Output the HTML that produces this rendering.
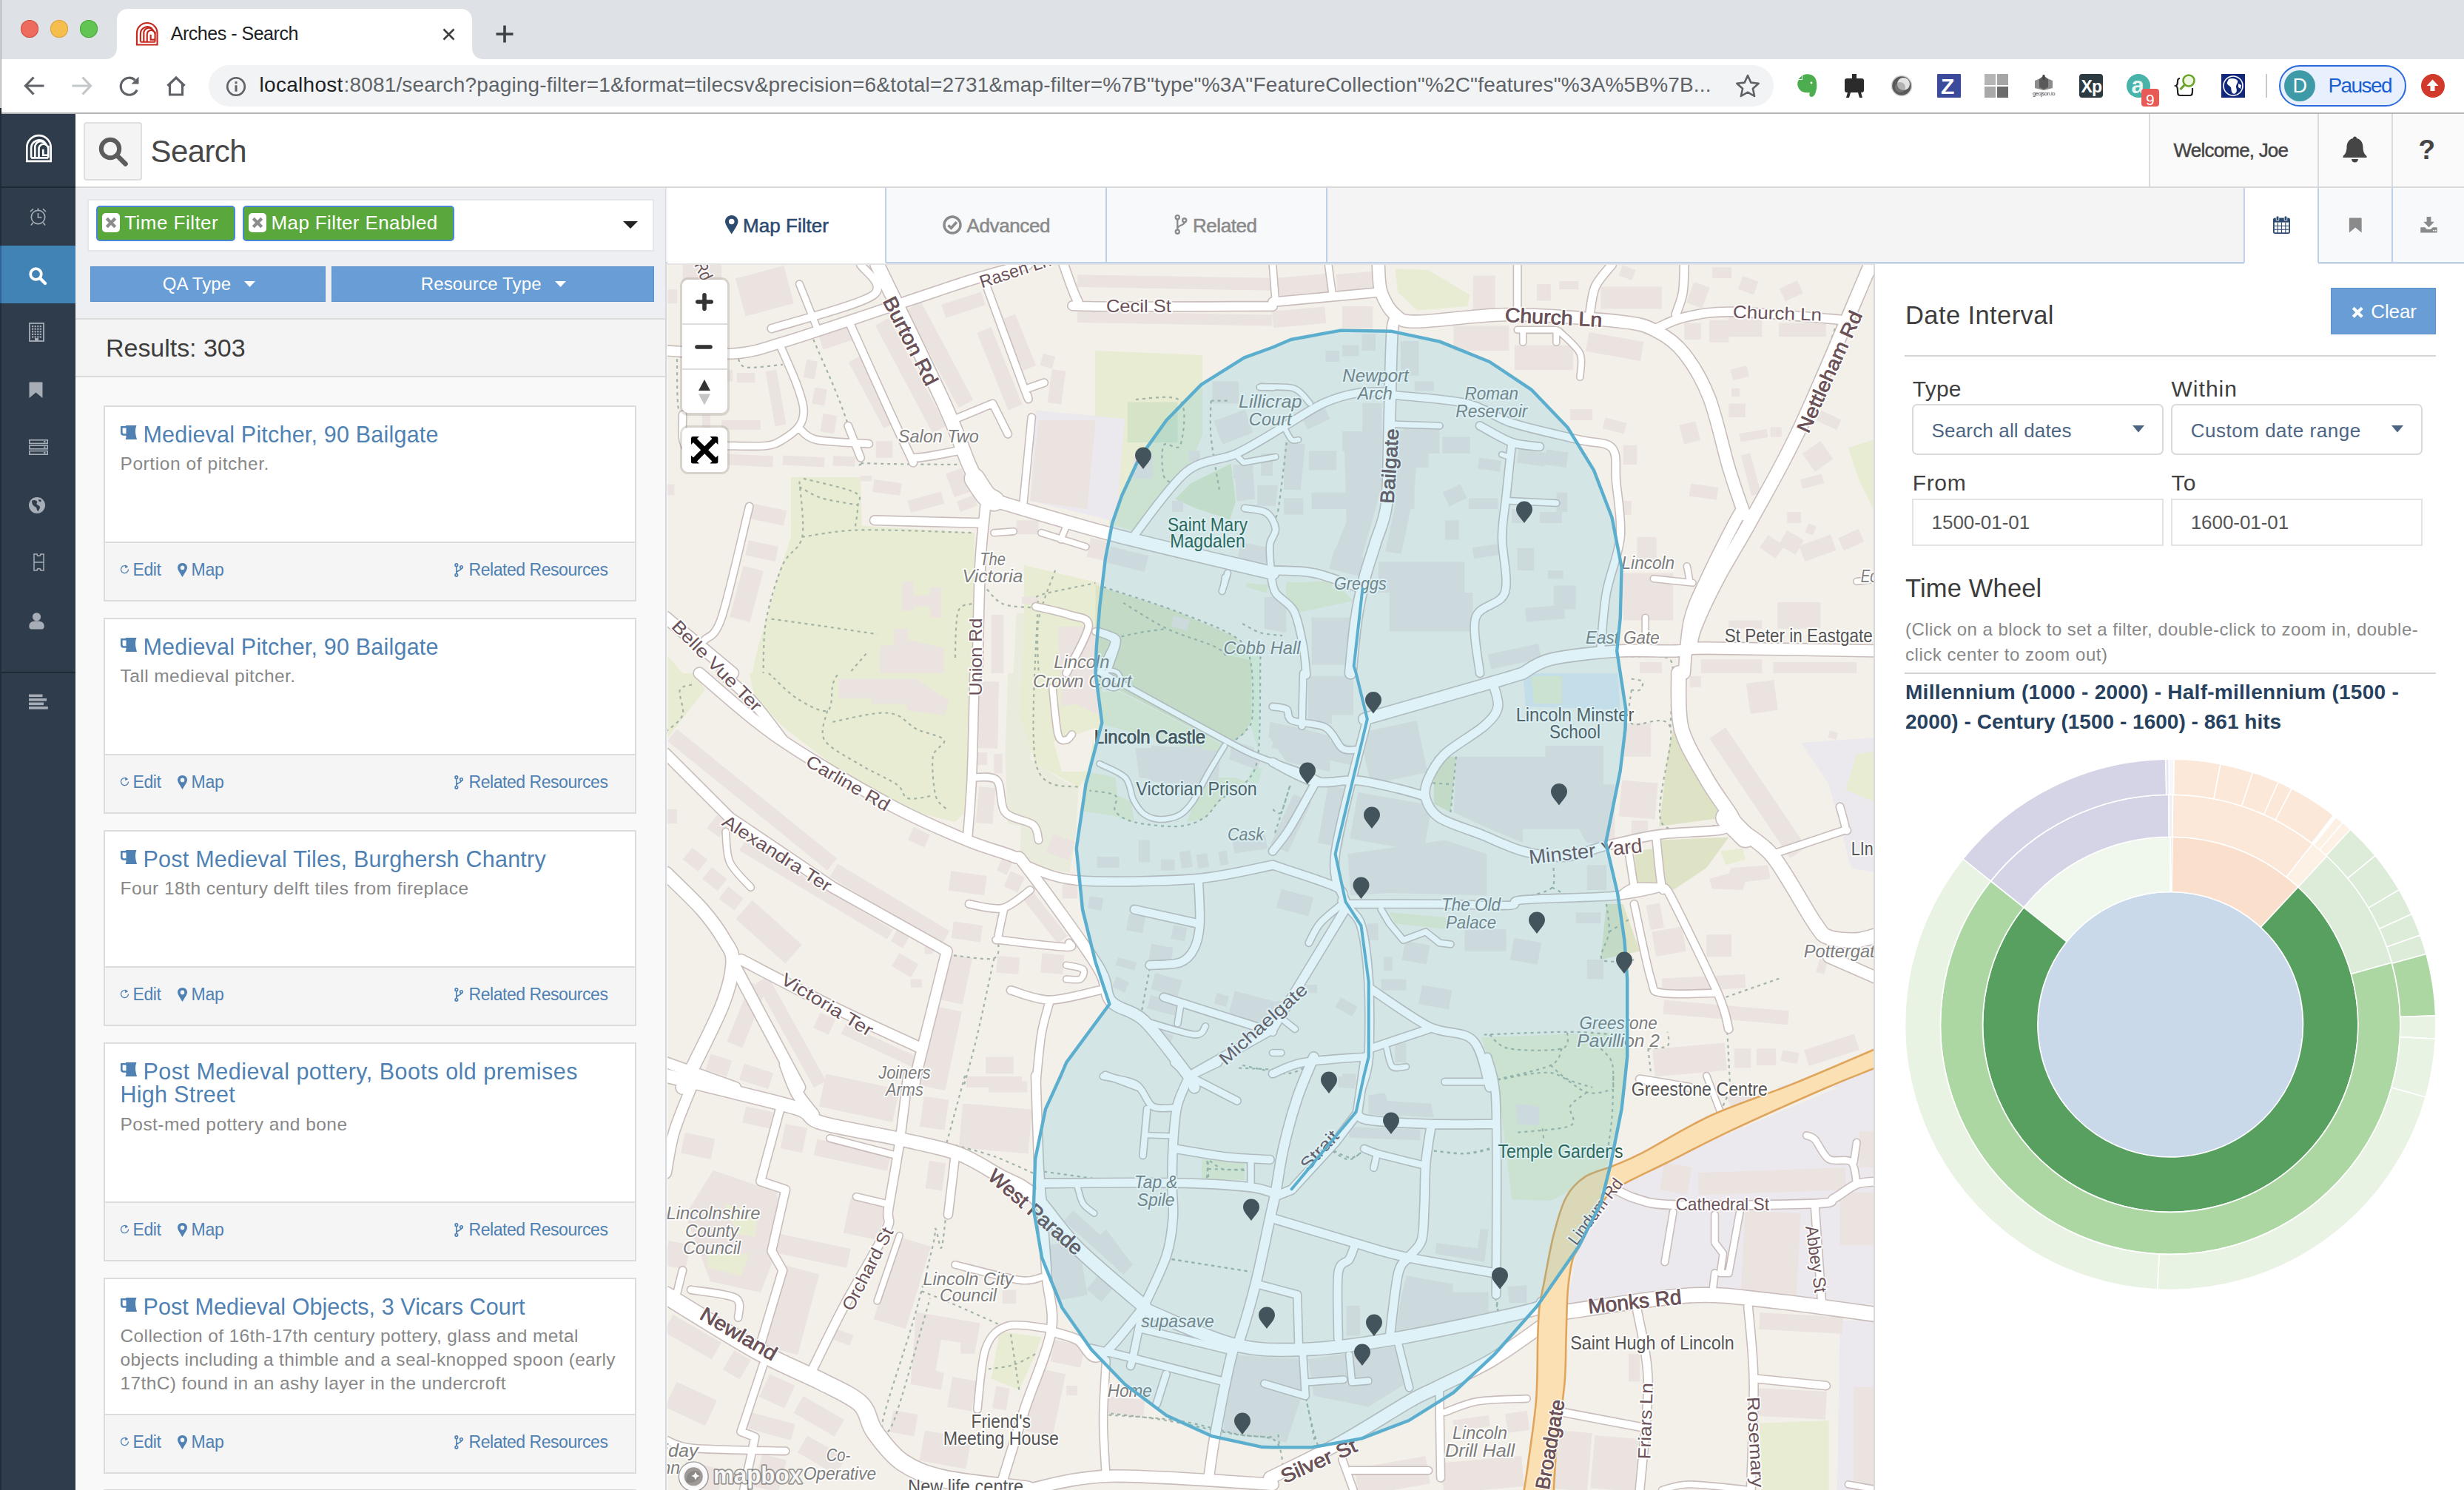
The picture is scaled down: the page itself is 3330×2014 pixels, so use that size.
<!DOCTYPE html>
<html lang="en"><head><meta charset="utf-8"><title>Arches - Search</title>
<style>
html,body{margin:0;padding:0}
html{width:3330px;height:2014px;overflow:hidden}
body{width:3330px;height:2014px;overflow:hidden;position:relative;background:#fff;font-family:"Liberation Sans", sans-serif;color:#333}
.a{position:absolute}
svg{position:absolute;overflow:visible}
#root{position:absolute;left:0;top:0;width:3330px;height:2014px;overflow:hidden;contain:strict}
</style></head><body><div id="root">
<div class="a" style="left:0;top:0;width:3330px;height:80px;background:#dee1e6"></div>
<svg style="left:0;top:0" width="700" height="80" viewBox="0 0 700 80"><path d="M142 80 C152 80 158 74 158 64 L158 28 C158 18 164 12 174 12 L622 12 C632 12 638 18 638 28 L638 64 C638 74 644 80 654 80 Z" fill="#fff"/></svg>
<div class="a" style="left:0;top:80px;width:3330px;height:72px;background:#fff"></div>
<div class="a" style="left:0;top:152px;width:3330px;height:2px;background:#b5b5b5"></div>
<div class="a" style="left:28px;top:27px;width:24px;height:24px;border-radius:50%;background:#ed6a5e;box-shadow:inset 0 0 0 1px #d05347"></div>
<div class="a" style="left:68px;top:27px;width:24px;height:24px;border-radius:50%;background:#f5bf4f;box-shadow:inset 0 0 0 1px #d9a13c"></div>
<div class="a" style="left:108px;top:27px;width:24px;height:24px;border-radius:50%;background:#61c554;box-shadow:inset 0 0 0 1px #4ca73e"></div>
<svg style="left:182.5px;top:30px" width="31.5" height="31.5" viewBox="0 0 32 32" fill="none" stroke="#c5281c" stroke-width="2.2"><path d="M2 31 L2 15 A14 14 0 0 1 30 15 L30 31 Z"/><path d="M7 27 L7 15.5 A9.5 9.5 0 0 1 23 9" /><path d="M11.5 27 L11.5 16 A7 7 0 0 1 25 12.5"/><path d="M16 27 L16 17 A5 5 0 0 1 27 16"/><path d="M21 17 L21 24 L27 24 M27 13 L27 27 M7 27.2 L27 27.2"/></svg>
<span style="position:absolute;white-space:pre;line-height:1;top:32.8px;font-size:25px;color:#202124;left:230.8px;letter-spacing:-0.48px;">Arches - Search</span>
<svg style="left:598px;top:38px" width="17" height="17" viewBox="0 0 17 17"><path d="M1.5 1.5 L15.5 15.5 M15.5 1.5 L1.5 15.5" stroke="#3c4043" stroke-width="2.6" fill="none"/></svg>
<svg style="left:670px;top:34px" width="24" height="24" viewBox="0 0 24 24"><path d="M12 0.5 V23.5 M0.5 12 H23.5" stroke="#3c4043" stroke-width="3.6" fill="none"/></svg>
<svg style="left:32px;top:103px" width="28" height="26" viewBox="0 0 28 26" fill="none" stroke="#5f6368" stroke-width="3.2"><path d="M13.5 1.5 L2.5 13 L13.5 24.5 M2.5 13 H27.5"/></svg>
<svg style="left:97px;top:103px" width="28" height="26" viewBox="0 0 28 26" fill="none" stroke="#c4c7ca" stroke-width="3.2"><path d="M14.5 1.5 L25.5 13 L14.5 24.5 M25.5 13 H0.5"/></svg>
<svg style="left:160px;top:102px" width="30" height="30" viewBox="0 0 30 30"><path d="M25.2 19.5 A11.5 11.5 0 1 1 22.5 6.2" fill="none" stroke="#5f6368" stroke-width="3.2"/><path d="M17.5 11.5 L27.5 11.5 L27.5 1.5 Z" fill="#5f6368"/></svg>
<svg style="left:224px;top:102px" width="28" height="28" viewBox="0 0 28 28" fill="none" stroke="#5f6368" stroke-width="3.2" stroke-linejoin="miter"><path d="M2.5 14 L14 3 L25.5 14 M5.5 12 V26 H22.5 V12"/></svg>
<div class="a" style="left:282px;top:88px;width:2115px;height:56px;border-radius:28px;background:#f1f3f4"></div>
<svg style="left:305px;top:103px" width="28" height="28" viewBox="0 0 28 28"><circle cx="14" cy="14" r="11.8" fill="none" stroke="#5f6368" stroke-width="2.6"/><rect x="12.5" y="12.2" width="3" height="8.5" fill="#5f6368"/><rect x="12.5" y="7.2" width="3" height="3" fill="#5f6368"/></svg>
<span style="position:absolute;white-space:pre;line-height:1;top:101.3px;font-size:28px;color:#202124;left:350.6px;letter-spacing:0.28px;">localhost</span>
<span style="position:absolute;white-space:pre;line-height:1;top:101.3px;font-size:28px;color:#5f6368;left:464.5px;letter-spacing:0.17px;">:8081/search?paging-filter=1&amp;format=tilecsv&amp;precision=6&amp;total=2731&amp;map-filter=%7B"type"%3A"FeatureCollection"%2C"features"%3A%5B%7B...</span>
<svg style="left:2345px;top:99px" width="34" height="33" viewBox="0 0 34 33"><path d="M17 3 L21.3 12.6 L31.7 13.7 L23.9 20.7 L26.1 31 L17 25.7 L7.9 31 L10.1 20.7 L2.3 13.7 L12.7 12.6 Z" fill="none" stroke="#5f6368" stroke-width="2.6" stroke-linejoin="round"/></svg>
<svg style="left:2427px;top:99px" width="32" height="34" viewBox="0 0 32 34"><path d="M9 3 C14 0 22 1 25 5 C29 9 29 20 27 25 C26 29 24 32 21 32 C18 32 18 28 19 26 C14 27 8 26 5 22 C1 17 2 11 4 9 L9 9 Z" fill="#4cae4f"/><path d="M3.5 8 L8 3.5 L8 8 Z" fill="#4cae4f"/><circle cx="21" cy="13" r="1.4" fill="#fff"/></svg>
<svg style="left:2490px;top:99px" width="32" height="34" viewBox="0 0 32 34" fill="#2b2b2b"><rect x="13" y="1" width="6" height="6"/><rect x="3" y="7" width="26" height="19" rx="3"/><path d="M7 26 L11 26 L9 33 L5 33 Z M21 26 L25 26 L27 33 L23 33 Z"/></svg>
<svg style="left:2555px;top:101px" width="30" height="30" viewBox="0 0 30 30"><circle cx="15" cy="15" r="13.5" fill="#5a5a5a"/><circle cx="15" cy="15" r="13.5" fill="none" stroke="#d0d0d0" stroke-width="1.5"/><circle cx="17.5" cy="12.5" r="8.5" fill="#e3e3e3"/><circle cx="13" cy="17" r="7" fill="#8a8a8a" opacity=".55"/></svg>
<div class="a" style="left:2618px;top:100px;width:32px;height:32px;background:#3b4a9b;border-radius:1px;"></div>
<span style="position:absolute;white-space:pre;line-height:1;top:102.1px;font-size:30px;color:#fff;left:2623.0px;font-weight:700;">Z</span>
<div class="a" style="left:2682.25px;top:100.25px;width:14.5px;height:14.5px;background:#b5b5b5;border-radius:0px;"></div>
<div class="a" style="left:2699.25px;top:100.25px;width:14.5px;height:14.5px;background:#a5a5a5;border-radius:0px;"></div>
<div class="a" style="left:2682.25px;top:117.25px;width:14.5px;height:14.5px;background:#a8a8a8;border-radius:0px;"></div>
<div class="a" style="left:2699.25px;top:117.25px;width:14.5px;height:14.5px;background:#6c6c6c;border-radius:0px;"></div>
<svg style="left:2747px;top:101px" width="30" height="22" viewBox="0 0 30 22"><path d="M3 8 L15 3 L27 8 L27 18 L15 21 L3 18 Z" fill="#8c8c8c"/><path d="M9 6 L15 1 L21 6 L21 17 L15 20 L9 17 Z" fill="#5a5a5a"/><rect x="13.6" y="0" width="2.8" height="7" fill="#444"/></svg>
<span style="position:absolute;white-space:pre;line-height:1;top:122.7px;font-size:7.5px;color:#444;left:2747.0px;letter-spacing:-0.42px;">geojson.io</span>
<div class="a" style="left:2810px;top:100px;width:32px;height:32px;background:#2c3a42;border-radius:4px;"></div>
<span style="position:absolute;white-space:pre;line-height:1;top:105.5px;font-size:23px;color:#fff;left:2812.5px;font-weight:700;letter-spacing:-0.95px;">Xp</span>
<div class="a" style="left:2874px;top:100px;width:32px;height:32px;border-radius:50%;background:#47b3a9"></div>
<span style="position:absolute;white-space:pre;line-height:1;top:99.8px;font-size:31px;color:#e8f6f4;left:2880.5px;font-weight:700;">a</span>
<div class="a" style="left:2894px;top:120px;width:24px;height:24px;border-radius:4px;background:#e85a55"></div>
<span style="position:absolute;white-space:pre;line-height:1;top:123.7px;font-size:21px;color:#fff;left:2900.0px;">9</span>
<svg style="left:2938px;top:99px" width="32" height="34" viewBox="0 0 32 34" fill="none"><path d="M8 7 C5 7 5 9 5 11 C5 14 5 16 2.5 17 C5 18 5 20 5 23 C5 27 5 30 8 30 L22 30 C25 30 25 27 25 23 L25 20" stroke="#222" stroke-width="2.2"/><circle cx="20" cy="10" r="7.5" stroke="#6aa329" stroke-width="2.6" fill="#eef6e0"/><path d="M14.5 15.5 L8.5 22" stroke="#6aa329" stroke-width="3.2"/></svg>
<div class="a" style="left:3002px;top:100px;width:32px;height:32px;background:#10277a;border-radius:0px;"></div>
<svg style="left:3003px;top:101px" width="30" height="30" viewBox="0 0 30 30"><circle cx="15" cy="15" r="13" fill="none" stroke="#fff" stroke-width="1.6"/><path d="M9 6 C13 4 19 5 21 8 C22 11 19 13 19 16 C19 19 21 21 19 24 C17 27 14 26 13 23 C12 20 13 18 11 16 C9 14 6 13 7 10 Z" fill="#fff"/><path d="M22 12 L26 14 L25 19 L22 17 Z" fill="#fff"/></svg>
<div class="a" style="left:3062px;top:100px;width:2px;height:32px;background:#c6c9cd"></div>
<div class="a" style="left:3080px;top:88px;width:168px;height:52px;border-radius:28px;background:#e8f0fe;border:2px solid #2b6ad9"></div>
<div class="a" style="left:3086.5px;top:95px;width:42px;height:42px;border-radius:50%;background:#3f9aa8"></div>
<span style="position:absolute;white-space:pre;line-height:1;top:102.6px;font-size:27px;color:#fff;left:3098.5px;">D</span>
<span style="position:absolute;white-space:pre;line-height:1;top:102.3px;font-size:28px;color:#1b5fd0;left:3146.5px;letter-spacing:-1.58px;">Paused</span>
<div class="a" style="left:3271.5px;top:100px;width:32px;height:32px;border-radius:50%;background:#d1392b"></div>
<svg style="left:3277px;top:105px" width="21" height="21" viewBox="0 0 21 21"><path d="M10.5 2.5 L18.5 11 L13.5 11 L13.5 18 L7.5 18 L7.5 11 L2.5 11 Z" fill="#fff"/></svg>
<div class="a" style="left:0;top:0;width:2px;height:146px;background:#cfd0d3;border-right:1px solid #a9aaad;box-sizing:border-box"></div>
<div class="a" style="left:0;top:146px;width:2px;height:8px;background:#20272f"></div>
<div class="a" style="left:0;top:154px;width:102px;height:1860px;background:#2e3c4b"></div>
<div class="a" style="left:0;top:154px;width:2px;height:1860px;background:#232d38"></div>
<div class="a" style="left:0;top:252px;width:102px;height:2px;background:#1f2933"></div>
<div class="a" style="left:0;top:332px;width:102px;height:78px;background:#4183b5"></div>
<div class="a" style="left:0;top:332px;width:2px;height:78px;background:#2f6594"></div>
<div class="a" style="left:2px;top:908px;width:100px;height:2px;background:#1f2933"></div>
<svg style="left:33.5px;top:182px" width="37" height="37" viewBox="0 0 32 32" fill="none" stroke="#fff" stroke-width="2.3"><path d="M2 31 L2 15 A14 14 0 0 1 30 15 L30 31 Z"/><path d="M7 27 L7 15.5 A9.5 9.5 0 0 1 23 9" /><path d="M11.5 27 L11.5 16 A7 7 0 0 1 25 12.5"/><path d="M16 27 L16 17 A5 5 0 0 1 27 16"/><path d="M21 17 L21 24 L27 24 M27 13 L27 27 M7 27.2 L27 27.2"/></svg>
<svg style="left:38px;top:279px" width="27" height="27" viewBox="0 0 27 27" fill="none" stroke="#a7adb6" stroke-width="1.7"><circle cx="13.5" cy="14.5" r="9.2"/><path d="M13.5 9 V15 H18.5 M3 7 L7 3.3 M24 7 L20 3.3 M6.5 22 L4 25.5 M20.5 22 L23 25.5 M13.5 5 V2.5"/></svg>
<svg style="left:38px;top:360px" width="26" height="26" viewBox="0 0 26 26" fill="none" stroke="#fff"><circle cx="10.5" cy="10.5" r="7.3" stroke-width="3.8"/><path d="M16 16 L23 23" stroke-width="4.4" stroke-linecap="round"/></svg>
<svg style="left:39px;top:436px" width="21" height="26" viewBox="0 0 21 26"><rect x="1" y="1" width="19" height="24" fill="none" stroke="#a7adb6" stroke-width="1.8"/><rect x="4" y="4" width="2.2" height="2.2" fill="#a7adb6"/><rect x="7.6" y="4" width="2.2" height="2.2" fill="#a7adb6"/><rect x="11.2" y="4" width="2.2" height="2.2" fill="#a7adb6"/><rect x="14.8" y="4" width="2.2" height="2.2" fill="#a7adb6"/><rect x="4" y="7.6" width="2.2" height="2.2" fill="#a7adb6"/><rect x="7.6" y="7.6" width="2.2" height="2.2" fill="#a7adb6"/><rect x="11.2" y="7.6" width="2.2" height="2.2" fill="#a7adb6"/><rect x="14.8" y="7.6" width="2.2" height="2.2" fill="#a7adb6"/><rect x="4" y="11.2" width="2.2" height="2.2" fill="#a7adb6"/><rect x="7.6" y="11.2" width="2.2" height="2.2" fill="#a7adb6"/><rect x="11.2" y="11.2" width="2.2" height="2.2" fill="#a7adb6"/><rect x="14.8" y="11.2" width="2.2" height="2.2" fill="#a7adb6"/><rect x="4" y="14.8" width="2.2" height="2.2" fill="#a7adb6"/><rect x="7.6" y="14.8" width="2.2" height="2.2" fill="#a7adb6"/><rect x="11.2" y="14.8" width="2.2" height="2.2" fill="#a7adb6"/><rect x="14.8" y="14.8" width="2.2" height="2.2" fill="#a7adb6"/><rect x="4" y="18.4" width="2.2" height="2.2" fill="#a7adb6"/><rect x="7.6" y="18.4" width="2.2" height="2.2" fill="#a7adb6"/><rect x="11.2" y="18.4" width="2.2" height="2.2" fill="#a7adb6"/><rect x="14.8" y="18.4" width="2.2" height="2.2" fill="#a7adb6"/><rect x="8" y="21" width="5" height="4" fill="#a7adb6"/></svg>
<svg style="left:39px;top:516px" width="19" height="23" viewBox="0 0 19 23"><path d="M1.5 0.5 H17.5 A1 1 0 0 1 18.5 1.5 V22 L9.5 14.5 L0.5 22 V1.5 A1 1 0 0 1 1.5 0.5 Z" fill="#a7adb6"/></svg>
<svg style="left:39px;top:594px" width="26" height="21" viewBox="0 0 26 21"><rect x="0.8" y="0.8" width="24.4" height="4.6" fill="none" stroke="#a7adb6" stroke-width="1.6"/><rect x="20" y="2.1" width="2.4" height="2" fill="#a7adb6"/><rect x="0.8" y="8.2" width="24.4" height="4.6" fill="none" stroke="#a7adb6" stroke-width="1.6"/><rect x="20" y="9.5" width="2.4" height="2" fill="#a7adb6"/><rect x="0.8" y="15.6" width="24.4" height="4.6" fill="none" stroke="#a7adb6" stroke-width="1.6"/><rect x="20" y="16.9" width="2.4" height="2" fill="#a7adb6"/></svg>
<svg style="left:39px;top:671.5px" width="22" height="22" viewBox="0 0 22 22"><circle cx="11" cy="11" r="11" fill="#a7adb6"/><path d="M4 5 C7 3 9 4 11 5.5 C12 7 10 8 10.5 9.5 C12 11 14.5 11 15 13.5 C15 16 13 17 12.5 19.5 C10.5 18 11 15 9.5 13.5 C7.5 12.5 5 11 4.5 8.5 Z M13 3 L17 4 L16 6.5 L13.5 5.5 Z" fill="#2e3c4b"/></svg>
<svg style="left:44.5px;top:747.5px" width="15" height="24" viewBox="0 0 15 24" fill="none" stroke="#a7adb6" stroke-width="1.5"><path d="M1 1 H5 A2.5 2.5 0 0 0 10 1 H14 V23 H10 A2.5 2.5 0 0 0 5 23 H1 Z M1 12 H14"/></svg>
<svg style="left:38.5px;top:828px" width="21" height="23" viewBox="0 0 21 23"><circle cx="10.5" cy="5.8" r="5.6" fill="#a7adb6"/><path d="M0.3 19 C0.3 13 4 11.5 10.5 11.5 C17 11.5 20.7 13 20.7 19 C20.7 21.5 19 22.6 17 22.6 H4 C2 22.6 0.3 21.5 0.3 19 Z" fill="#a7adb6"/></svg>
<svg style="left:38.5px;top:938px" width="26" height="21" viewBox="0 0 26 21" fill="#a7adb6"><rect x="0" y="0.5" width="18.5" height="3.6"/><rect x="0" y="6" width="24" height="3.6"/><rect x="0" y="11.5" width="20" height="3.6"/><rect x="0" y="17" width="25.8" height="3.6"/></svg>
<div class="a" style="left:102px;top:154px;width:3228px;height:98px;background:#fff"></div>
<div class="a" style="left:102px;top:252px;width:3228px;height:2px;background:#d9d9d9"></div>
<div class="a" style="left:112.5px;top:164.5px;width:75px;height:75px;background:#f4f4f4;border:2px solid #dfdfdf;border-radius:4px"></div>
<svg style="left:132px;top:184px" width="42" height="42" viewBox="0 0 42 42" fill="none" stroke="#5c5c5c"><circle cx="17" cy="17" r="12.2" stroke-width="6"/><path d="M26.5 26.5 L37.5 37.5" stroke-width="6.6" stroke-linecap="round"/></svg>
<span style="position:absolute;white-space:pre;line-height:1;top:183.8px;font-size:42px;color:#484848;left:203.5px;letter-spacing:-0.60px;">Search</span>
<div class="a" style="left:2904px;top:154px;width:426px;height:98px;background:#fafafa"></div>
<div class="a" style="left:2904px;top:154px;width:2px;height:98px;background:#d9dbe0"></div>
<div class="a" style="left:3132px;top:154px;width:2px;height:98px;background:#d9dbe0"></div>
<div class="a" style="left:3232px;top:154px;width:2px;height:98px;background:#d9dbe0"></div>
<span style="position:absolute;white-space:pre;line-height:1;top:189.5px;font-size:26px;color:#454545;left:2937.6px;letter-spacing:-0.81px;-webkit-text-stroke:0.450px #454545;">Welcome, Joe</span>
<svg style="left:3166px;top:184px" width="33" height="36" viewBox="0 0 33 36"><path d="M16.5 0.5 C18 0.5 19 1.6 19 3 C24.5 4.2 27.5 9 27.5 15 C27.5 21 29.5 24.5 32.5 27 V29 H0.5 V27 C3.500 24.5 5.5 21 5.5 15 C5.5 9 8.5 4.200 14 3 C14 1.6 15 0.5 16.5 0.5 Z" fill="#454545"/><path d="M12 31 H21 A4.500 4.500 0 0 1 12 31 Z" fill="#454545"/></svg>
<span style="position:absolute;white-space:pre;line-height:1;top:183.7px;font-size:37px;color:#454545;left:3268.5px;font-weight:700;">?</span>
<div class="a" style="left:102px;top:254px;width:798px;height:176px;background:#edeff2"></div>
<div class="a" style="left:102px;top:430px;width:798px;height:80px;background:#f4f4f4;border-top:2px solid #dcdcdc;border-bottom:2px solid #dcdcdc;box-sizing:border-box"></div>
<div class="a" style="left:102px;top:510px;width:798px;height:1504px;background:#f9f9f9"></div>
<div class="a" style="left:899px;top:253px;width:2px;height:1761px;background:#d4d8dc"></div>
<div class="a" style="left:118px;top:268.5px;width:766px;height:71px;background:#fff;border:2px solid #e3e6ea;box-sizing:border-box"></div>
<div class="a" style="left:130px;top:278px;width:188px;height:48px;background:#5aa83b;border:2px solid #4a86d8;border-radius:5px;box-sizing:border-box"></div><div class="a" style="left:137.8px;top:288px;width:24.5px;height:26px;background:#fff;border-radius:5px"></div><svg style="left:142px;top:293px" width="16" height="16" viewBox="0 0 16 16"><path d="M2.300 2.300 L13.7 13.7 M13.7 2.300 L2.300 13.7" stroke="#8c8c8c" stroke-width="4.200" fill="none"/></svg><span style="position:absolute;white-space:pre;line-height:1;top:287.7px;font-size:26px;color:#fff;left:168.2px;letter-spacing:0.47px;">Time Filter</span>
<div class="a" style="left:328px;top:278px;width:286px;height:48px;background:#5aa83b;border:2px solid #4a86d8;border-radius:5px;box-sizing:border-box"></div><div class="a" style="left:335.8px;top:288px;width:24.5px;height:26px;background:#fff;border-radius:5px"></div><svg style="left:340px;top:293px" width="16" height="16" viewBox="0 0 16 16"><path d="M2.300 2.300 L13.7 13.7 M13.7 2.300 L2.300 13.7" stroke="#8c8c8c" stroke-width="4.200" fill="none"/></svg><span style="position:absolute;white-space:pre;line-height:1;top:287.7px;font-size:26px;color:#fff;left:366.5px;letter-spacing:0.38px;">Map Filter Enabled</span>
<svg style="left:842px;top:299px" width="20" height="10" viewBox="0 0 20 10"><path d="M0 0 H20 L10 10 Z" fill="#222"/></svg>
<div class="a" style="left:122px;top:360px;width:318px;height:48px;background:#689dd6;border:1px solid #5d91cb;box-sizing:border-box"></div><span style="position:absolute;white-space:pre;line-height:1;top:371.7px;font-size:24px;color:#fff;left:219.8px;letter-spacing:0.12px;">QA Type</span><svg style="left:330px;top:380px" width="15" height="8" viewBox="0 0 15 8"><path d="M0 0 H15 L7.500 8 Z" fill="#fff"/></svg>
<div class="a" style="left:448px;top:360px;width:436px;height:48px;background:#689dd6;border:1px solid #5d91cb;box-sizing:border-box"></div><span style="position:absolute;white-space:pre;line-height:1;top:371.7px;font-size:24px;color:#fff;left:568.7px;letter-spacing:0.16px;">Resource Type</span><svg style="left:749.5px;top:380px" width="15" height="8" viewBox="0 0 15 8"><path d="M0 0 H15 L7.500 8 Z" fill="#fff"/></svg>
<span style="position:absolute;white-space:pre;line-height:1;top:452.8px;font-size:34px;color:#3d3d3d;left:143.0px;letter-spacing:-0.04px;">Results: 303</span>
<div class="a" style="left:140px;top:548px;width:720px;height:265px;background:#fff;border:2px solid #dcdcdc;box-sizing:border-box"></div><div class="a" style="left:142px;top:732px;width:716px;height:79px;background:#f5f5f5;border-top:2px solid #dcdcdc;box-sizing:border-box"></div><svg style="left:163px;top:575px" width="22" height="19" viewBox="0 0 22 19"><path d="M0 1 H7 V0 H21.500 C20.500 2.500 20 5 20 8 C20 12 21 15 22 19 H6.500 C7.500 17 7.500 15.500 7.500 13.800 H3.800 C1.500 13.800 0 12 0 10 Z M2.600 3.600 V9.500 C2.600 10.600 3.300 11.200 4.300 11.200 H7.500 V3.600 Z" fill="#4f81b3" fill-rule="evenodd"/></svg><span style="position:absolute;white-space:pre;line-height:1;top:571.7px;font-size:30.5px;color:#4f81b3;left:193.5px;letter-spacing:0.20px;">Medieval Pitcher, 90 Bailgate</span><span style="position:absolute;white-space:pre;line-height:1;top:615.3px;font-size:24.5px;color:#888;left:162.5px;letter-spacing:0.57px;">Portion of pitcher.</span><svg style="left:161.5px;top:763px" width="13" height="13" viewBox="0 0 13 13"><path d="M10.200 3.200 A5 5 0 1 0 11.500 6.500" fill="none" stroke="#4f81b3" stroke-width="1.300"/><path d="M7.200 0.300 L11 3.300 L7.200 5.200 Z" fill="#4f81b3"/></svg><span style="position:absolute;white-space:pre;line-height:1;top:758.5px;font-size:23px;color:#4f81b3;left:179.5px;letter-spacing:-0.41px;">Edit</span><svg style="left:239.5px;top:760.5px" width="13" height="19" viewBox="0 0 13 19"><path d="M6.500 0 C10.200 0 13 2.800 13 6.300 C13 8.600 11.600 10.800 6.500 19 C1.400 10.800 0 8.600 0 6.300 C0 2.800 2.800 0 6.500 0 Z M6.500 3.600 A2.800 2.800 0 1 0 6.500 9.200 A2.800 2.800 0 1 0 6.500 3.600 Z" fill="#4f81b3" fill-rule="evenodd"/></svg><span style="position:absolute;white-space:pre;line-height:1;top:758.5px;font-size:23px;color:#4f81b3;left:258.5px;letter-spacing:-0.25px;">Map</span><svg style="left:614px;top:760.5px" width="12.35" height="19" viewBox="0 0 13 20" fill="none" stroke="#4f81b3" stroke-width="1.700"><circle cx="3" cy="2.800" r="1.900"/><circle cx="3" cy="17.200" r="1.900"/><circle cx="10" cy="5.800" r="1.900"/><path d="M3 4.700 V15.300 M10 7.700 C10 11 3 10.500 3 14"/></svg><span style="position:absolute;white-space:pre;line-height:1;top:758.5px;font-size:23px;color:#4f81b3;left:633.5px;letter-spacing:-0.45px;">Related Resources</span>
<div class="a" style="left:140px;top:835px;width:720px;height:265px;background:#fff;border:2px solid #dcdcdc;box-sizing:border-box"></div><div class="a" style="left:142px;top:1019px;width:716px;height:79px;background:#f5f5f5;border-top:2px solid #dcdcdc;box-sizing:border-box"></div><svg style="left:163px;top:862px" width="22" height="19" viewBox="0 0 22 19"><path d="M0 1 H7 V0 H21.500 C20.500 2.500 20 5 20 8 C20 12 21 15 22 19 H6.500 C7.500 17 7.500 15.500 7.500 13.800 H3.800 C1.500 13.800 0 12 0 10 Z M2.600 3.600 V9.500 C2.600 10.600 3.300 11.200 4.300 11.200 H7.500 V3.600 Z" fill="#4f81b3" fill-rule="evenodd"/></svg><span style="position:absolute;white-space:pre;line-height:1;top:858.7px;font-size:30.5px;color:#4f81b3;left:193.5px;letter-spacing:0.20px;">Medieval Pitcher, 90 Bailgate</span><span style="position:absolute;white-space:pre;line-height:1;top:902.3px;font-size:24.5px;color:#888;left:162.5px;letter-spacing:0.44px;">Tall medieval pitcher.</span><svg style="left:161.5px;top:1050px" width="13" height="13" viewBox="0 0 13 13"><path d="M10.200 3.200 A5 5 0 1 0 11.500 6.500" fill="none" stroke="#4f81b3" stroke-width="1.300"/><path d="M7.200 0.300 L11 3.300 L7.200 5.200 Z" fill="#4f81b3"/></svg><span style="position:absolute;white-space:pre;line-height:1;top:1045.5px;font-size:23px;color:#4f81b3;left:179.5px;letter-spacing:-0.41px;">Edit</span><svg style="left:239.5px;top:1047.5px" width="13" height="19" viewBox="0 0 13 19"><path d="M6.500 0 C10.200 0 13 2.800 13 6.300 C13 8.600 11.600 10.800 6.500 19 C1.400 10.800 0 8.600 0 6.300 C0 2.800 2.800 0 6.500 0 Z M6.500 3.600 A2.800 2.800 0 1 0 6.500 9.200 A2.800 2.800 0 1 0 6.500 3.600 Z" fill="#4f81b3" fill-rule="evenodd"/></svg><span style="position:absolute;white-space:pre;line-height:1;top:1045.5px;font-size:23px;color:#4f81b3;left:258.5px;letter-spacing:-0.25px;">Map</span><svg style="left:614px;top:1047.5px" width="12.35" height="19" viewBox="0 0 13 20" fill="none" stroke="#4f81b3" stroke-width="1.700"><circle cx="3" cy="2.800" r="1.900"/><circle cx="3" cy="17.200" r="1.900"/><circle cx="10" cy="5.800" r="1.900"/><path d="M3 4.700 V15.300 M10 7.700 C10 11 3 10.500 3 14"/></svg><span style="position:absolute;white-space:pre;line-height:1;top:1045.5px;font-size:23px;color:#4f81b3;left:633.5px;letter-spacing:-0.45px;">Related Resources</span>
<div class="a" style="left:140px;top:1122px;width:720px;height:265px;background:#fff;border:2px solid #dcdcdc;box-sizing:border-box"></div><div class="a" style="left:142px;top:1306px;width:716px;height:79px;background:#f5f5f5;border-top:2px solid #dcdcdc;box-sizing:border-box"></div><svg style="left:163px;top:1149px" width="22" height="19" viewBox="0 0 22 19"><path d="M0 1 H7 V0 H21.500 C20.500 2.500 20 5 20 8 C20 12 21 15 22 19 H6.500 C7.500 17 7.500 15.500 7.500 13.800 H3.800 C1.500 13.800 0 12 0 10 Z M2.600 3.600 V9.500 C2.600 10.600 3.300 11.200 4.300 11.200 H7.500 V3.600 Z" fill="#4f81b3" fill-rule="evenodd"/></svg><span style="position:absolute;white-space:pre;line-height:1;top:1145.7px;font-size:30.5px;color:#4f81b3;left:193.5px;letter-spacing:0.23px;">Post Medieval Tiles, Burghersh Chantry</span><span style="position:absolute;white-space:pre;line-height:1;top:1189.3px;font-size:24.5px;color:#888;left:162.5px;letter-spacing:0.46px;">Four 18th century delft tiles from fireplace</span><svg style="left:161.5px;top:1337px" width="13" height="13" viewBox="0 0 13 13"><path d="M10.200 3.200 A5 5 0 1 0 11.500 6.500" fill="none" stroke="#4f81b3" stroke-width="1.300"/><path d="M7.200 0.300 L11 3.300 L7.200 5.200 Z" fill="#4f81b3"/></svg><span style="position:absolute;white-space:pre;line-height:1;top:1332.5px;font-size:23px;color:#4f81b3;left:179.5px;letter-spacing:-0.41px;">Edit</span><svg style="left:239.5px;top:1334.5px" width="13" height="19" viewBox="0 0 13 19"><path d="M6.500 0 C10.200 0 13 2.800 13 6.300 C13 8.600 11.600 10.800 6.500 19 C1.400 10.800 0 8.600 0 6.300 C0 2.800 2.800 0 6.500 0 Z M6.500 3.600 A2.800 2.800 0 1 0 6.500 9.200 A2.800 2.800 0 1 0 6.500 3.600 Z" fill="#4f81b3" fill-rule="evenodd"/></svg><span style="position:absolute;white-space:pre;line-height:1;top:1332.5px;font-size:23px;color:#4f81b3;left:258.5px;letter-spacing:-0.25px;">Map</span><svg style="left:614px;top:1334.5px" width="12.35" height="19" viewBox="0 0 13 20" fill="none" stroke="#4f81b3" stroke-width="1.700"><circle cx="3" cy="2.800" r="1.900"/><circle cx="3" cy="17.200" r="1.900"/><circle cx="10" cy="5.800" r="1.900"/><path d="M3 4.700 V15.300 M10 7.700 C10 11 3 10.500 3 14"/></svg><span style="position:absolute;white-space:pre;line-height:1;top:1332.5px;font-size:23px;color:#4f81b3;left:633.5px;letter-spacing:-0.45px;">Related Resources</span>
<div class="a" style="left:140px;top:1409px;width:720px;height:296px;background:#fff;border:2px solid #dcdcdc;box-sizing:border-box"></div><div class="a" style="left:142px;top:1624px;width:716px;height:79px;background:#f5f5f5;border-top:2px solid #dcdcdc;box-sizing:border-box"></div><svg style="left:163px;top:1436px" width="22" height="19" viewBox="0 0 22 19"><path d="M0 1 H7 V0 H21.500 C20.500 2.500 20 5 20 8 C20 12 21 15 22 19 H6.500 C7.500 17 7.500 15.500 7.500 13.800 H3.800 C1.500 13.800 0 12 0 10 Z M2.600 3.600 V9.500 C2.600 10.600 3.300 11.200 4.300 11.200 H7.500 V3.600 Z" fill="#4f81b3" fill-rule="evenodd"/></svg><span style="position:absolute;white-space:pre;line-height:1;top:1432.7px;font-size:30.5px;color:#4f81b3;left:193.5px;letter-spacing:0.49px;">Post Medieval pottery, Boots old premises</span><span style="position:absolute;white-space:pre;line-height:1;top:1464.2px;font-size:30.5px;color:#4f81b3;left:162.5px;letter-spacing:0.27px;">High Street</span><span style="position:absolute;white-space:pre;line-height:1;top:1507.8px;font-size:24.5px;color:#888;left:162.5px;letter-spacing:0.46px;">Post-med pottery and bone</span><svg style="left:161.5px;top:1655px" width="13" height="13" viewBox="0 0 13 13"><path d="M10.200 3.200 A5 5 0 1 0 11.500 6.500" fill="none" stroke="#4f81b3" stroke-width="1.300"/><path d="M7.200 0.300 L11 3.300 L7.200 5.200 Z" fill="#4f81b3"/></svg><span style="position:absolute;white-space:pre;line-height:1;top:1650.5px;font-size:23px;color:#4f81b3;left:179.5px;letter-spacing:-0.41px;">Edit</span><svg style="left:239.5px;top:1652.5px" width="13" height="19" viewBox="0 0 13 19"><path d="M6.500 0 C10.200 0 13 2.800 13 6.300 C13 8.600 11.600 10.800 6.500 19 C1.400 10.800 0 8.600 0 6.300 C0 2.800 2.800 0 6.500 0 Z M6.500 3.600 A2.800 2.800 0 1 0 6.500 9.200 A2.800 2.800 0 1 0 6.500 3.600 Z" fill="#4f81b3" fill-rule="evenodd"/></svg><span style="position:absolute;white-space:pre;line-height:1;top:1650.5px;font-size:23px;color:#4f81b3;left:258.5px;letter-spacing:-0.25px;">Map</span><svg style="left:614px;top:1652.5px" width="12.35" height="19" viewBox="0 0 13 20" fill="none" stroke="#4f81b3" stroke-width="1.700"><circle cx="3" cy="2.800" r="1.900"/><circle cx="3" cy="17.200" r="1.900"/><circle cx="10" cy="5.800" r="1.900"/><path d="M3 4.700 V15.300 M10 7.700 C10 11 3 10.500 3 14"/></svg><span style="position:absolute;white-space:pre;line-height:1;top:1650.5px;font-size:23px;color:#4f81b3;left:633.5px;letter-spacing:-0.45px;">Related Resources</span>
<div class="a" style="left:140px;top:1727px;width:720px;height:265px;background:#fff;border:2px solid #dcdcdc;box-sizing:border-box"></div><div class="a" style="left:142px;top:1911px;width:716px;height:79px;background:#f5f5f5;border-top:2px solid #dcdcdc;box-sizing:border-box"></div><svg style="left:163px;top:1754px" width="22" height="19" viewBox="0 0 22 19"><path d="M0 1 H7 V0 H21.500 C20.500 2.500 20 5 20 8 C20 12 21 15 22 19 H6.500 C7.500 17 7.500 15.500 7.500 13.800 H3.800 C1.500 13.800 0 12 0 10 Z M2.600 3.600 V9.500 C2.600 10.600 3.300 11.200 4.300 11.200 H7.500 V3.600 Z" fill="#4f81b3" fill-rule="evenodd"/></svg><span style="position:absolute;white-space:pre;line-height:1;top:1750.7px;font-size:30.5px;color:#4f81b3;left:193.5px;letter-spacing:0.08px;">Post Medieval Objects, 3 Vicars Court</span><span style="position:absolute;white-space:pre;line-height:1;top:1794.3px;font-size:24.5px;color:#888;left:162.5px;letter-spacing:0.39px;">Collection of 16th-17th century pottery, glass and metal</span><span style="position:absolute;white-space:pre;line-height:1;top:1826.3px;font-size:24.5px;color:#888;left:162.5px;letter-spacing:0.31px;">objects including a thimble and a seal-knopped spoon (early</span><span style="position:absolute;white-space:pre;line-height:1;top:1858.3px;font-size:24.5px;color:#888;left:162.5px;letter-spacing:0.37px;">17thC) found in an ashy layer in the undercroft</span><svg style="left:161.5px;top:1942px" width="13" height="13" viewBox="0 0 13 13"><path d="M10.200 3.200 A5 5 0 1 0 11.500 6.500" fill="none" stroke="#4f81b3" stroke-width="1.300"/><path d="M7.200 0.300 L11 3.300 L7.200 5.200 Z" fill="#4f81b3"/></svg><span style="position:absolute;white-space:pre;line-height:1;top:1937.5px;font-size:23px;color:#4f81b3;left:179.5px;letter-spacing:-0.41px;">Edit</span><svg style="left:239.5px;top:1939.5px" width="13" height="19" viewBox="0 0 13 19"><path d="M6.500 0 C10.200 0 13 2.800 13 6.300 C13 8.600 11.600 10.800 6.500 19 C1.400 10.800 0 8.600 0 6.300 C0 2.800 2.800 0 6.500 0 Z M6.500 3.600 A2.800 2.800 0 1 0 6.500 9.200 A2.800 2.800 0 1 0 6.500 3.600 Z" fill="#4f81b3" fill-rule="evenodd"/></svg><span style="position:absolute;white-space:pre;line-height:1;top:1937.5px;font-size:23px;color:#4f81b3;left:258.5px;letter-spacing:-0.25px;">Map</span><svg style="left:614px;top:1939.5px" width="12.35" height="19" viewBox="0 0 13 20" fill="none" stroke="#4f81b3" stroke-width="1.700"><circle cx="3" cy="2.800" r="1.900"/><circle cx="3" cy="17.200" r="1.900"/><circle cx="10" cy="5.800" r="1.900"/><path d="M3 4.700 V15.300 M10 7.700 C10 11 3 10.500 3 14"/></svg><span style="position:absolute;white-space:pre;line-height:1;top:1937.5px;font-size:23px;color:#4f81b3;left:633.5px;letter-spacing:-0.45px;">Related Resources</span>
<div class="a" style="left:140px;top:2013px;width:720px;height:10px;background:#fff;border:2px solid #dcdcdc;box-sizing:border-box"></div>
<div class="a" style="left:900px;top:254px;width:2430px;height:102px;background:#f4f4f4"></div>
<div class="a" style="left:900px;top:354px;width:2430px;height:2px;background:#bcd0ea"></div>
<div class="a" style="left:900px;top:356px;width:2430px;height:2px;background:#e4e4e4"></div>
<div class="a" style="left:902px;top:254px;width:295px;height:102px;background:#fff"></div>
<div class="a" style="left:1197px;top:254px;width:596px;height:100px;background:#f8f9fb"></div>
<div class="a" style="left:1196px;top:254px;width:2px;height:101px;background:#bcd0ea"></div>
<div class="a" style="left:1494px;top:254px;width:2px;height:101px;background:#bcd0ea"></div>
<div class="a" style="left:1792px;top:254px;width:2px;height:101px;background:#bcd0ea"></div>
<svg style="left:979.500px;top:291px" width="17.500" height="25.500" viewBox="0 0 13 19"><path d="M6.500 0 C10.200 0 13 2.800 13 6.300 C13 8.600 11.600 10.800 6.500 19 C1.400 10.800 0 8.600 0 6.300 C0 2.800 2.800 0 6.500 0 Z M6.500 3.600 A2.800 2.800 0 1 0 6.500 9.200 A2.800 2.800 0 1 0 6.500 3.600 Z" fill="#2d4a70" fill-rule="evenodd"/></svg>
<span style="position:absolute;white-space:pre;line-height:1;top:292.3px;font-size:26px;color:#2d4a70;left:1004.0px;letter-spacing:0.04px;-webkit-text-stroke:0.550px #2d4a70;">Map Filter</span>
<svg style="left:1273.500px;top:290.500px" width="26" height="26" viewBox="0 0 26 26" fill="none" stroke="#8a8a8a"><circle cx="13" cy="13" r="11" stroke-width="3.400"/><path d="M7.500 13.500 L11.500 17.300 L18.800 9.300" stroke-width="3.600"/></svg>
<span style="position:absolute;white-space:pre;line-height:1;top:292.3px;font-size:26px;color:#8a8a8a;left:1306.5px;letter-spacing:-0.39px;-webkit-text-stroke:0.550px #8a8a8a;">Advanced</span>
<svg style="left:1587px;top:290px" width="18" height="27" viewBox="0 0 13 20" fill="none" stroke="#8a8a8a" stroke-width="1.700"><circle cx="3" cy="2.800" r="1.900"/><circle cx="3" cy="17.200" r="1.900"/><circle cx="10" cy="5.800" r="1.900"/><path d="M3 4.700 V15.300 M10 7.700 C10 11 3 10.500 3 14"/></svg>
<span style="position:absolute;white-space:pre;line-height:1;top:292.3px;font-size:26px;color:#8a8a8a;left:1612.0px;letter-spacing:-0.45px;-webkit-text-stroke:0.550px #8a8a8a;">Related</span>
<div class="a" style="left:3033px;top:254px;width:100px;height:104px;background:#fff"></div>
<div class="a" style="left:3133px;top:254px;width:197px;height:100px;background:#f8f9fb"></div>
<div class="a" style="left:3032px;top:254px;width:2px;height:101px;background:#bcd0ea"></div>
<div class="a" style="left:3132px;top:254px;width:2px;height:101px;background:#bcd0ea"></div>
<div class="a" style="left:3232px;top:254px;width:2px;height:101px;background:#bcd0ea"></div>
<svg style="left:3071.500px;top:291.500px" width="23" height="24" viewBox="0 0 23 24"><rect x="0.900" y="3.400" width="21.200" height="19.700" rx="1.500" fill="none" stroke="#2d4a70" stroke-width="1.800"/><rect x="0.900" y="3.400" width="21.200" height="5.200" fill="#2d4a70"/><rect x="4.200" y="0" width="3.600" height="6.500" rx="1.500" fill="#2d4a70" stroke="#fff" stroke-width="0.800"/><rect x="15.200" y="0" width="3.600" height="6.500" rx="1.500" fill="#2d4a70" stroke="#fff" stroke-width="0.800"/><path d="M6.2 8.600 V23" stroke="#2d4a70" stroke-width="1.100"/><path d="M11.5 8.600 V23" stroke="#2d4a70" stroke-width="1.100"/><path d="M16.8 8.600 V23" stroke="#2d4a70" stroke-width="1.100"/><path d="M1 13.4 H22" stroke="#2d4a70" stroke-width="1.100"/><path d="M1 18.2 H22" stroke="#2d4a70" stroke-width="1.100"/></svg>
<svg style="left:3174px;top:293.500px" width="18.500" height="21.500" viewBox="0 0 19 23"><path d="M1.500 0.500 H17.500 A1 1 0 0 1 18.500 1.500 V22 L9.500 14.500 L0.500 22 V1.500 A1 1 0 0 1 1.500 0.500 Z" fill="#8a8a8a"/></svg>
<svg style="left:3271px;top:293px" width="23" height="21.500" viewBox="0 0 23 22"><path d="M8.500 0 H14.500 V7 H19 L11.500 14.500 L4 7 H8.500 Z" fill="#8a8a8a"/><path d="M0 14.500 H6 L9 17.500 H14 L17 14.500 H23 V22 H0 Z" fill="#8a8a8a"/><rect x="17" y="18.300" width="1.800" height="1.600" fill="#fff"/><rect x="20" y="18.300" width="1.800" height="1.600" fill="#fff"/></svg>
<svg style="left:902px;top:358px;overflow:hidden" width="1630" height="1656" viewBox="902 358 1630 1656">
<rect x="902" y="358" width="1630" height="1656" fill="#f3f0ea"/>
<path d="M1480.0 474.0 L1625.1 480.1 L1625.1 588.2 L1603.5 637.6 L1535.6 717.8 L1498.5 708.6 L1520.1 566.6 L1480.0 563.5 Z" fill="#e8ecd2"/>
<path d="M1069.1 645.0 L1163.1 645.0 L1164.9 710.8 L1317.1 720.2 L1313.4 909.9 L1016.5 909.9 L1024.0 876.1 L1035.3 838.5 L1050.3 782.2 L1069.1 725.8 Z" fill="#e8ecd2"/>
<path d="M1523.8 543.5 L1591.5 543.5 L1591.5 598.0 L1523.8 598.0 Z" fill="#d5e3c6"/>
<path d="M1399.8 554.8 L1520.1 566.1 L1508.8 705.1 L1392.3 676.9 Z" fill="#ebe8ee"/>
<path d="M900.0 883.6 L922.5 909.9 L900.0 909.9 Z" fill="#e8ecd2"/>
<path d="M1362.2 910.0 L1401.7 910.0 L1392.3 1026.5 L1456.2 1067.8 L1452.4 1131.7 L1362.2 1112.9 L1358.5 1022.7 Z" fill="#e9ebdc"/>
<path d="M1373.5 829.1 L1399.8 829.1 L1399.8 909.9 L1369.8 909.9 Z" fill="#e9ebdc"/>
<path d="M1885.4 363.2 L1930.4 365.0 L1986.8 398.9 L1983.1 413.9 L1915.4 419.5 L1889.1 395.1 Z" fill="#e8ecd2"/>
<path d="M2497.9 605.5 L2531.7 594.3 L2531.7 688.2 L2512.9 650.6 Z" fill="#e8ecd2"/>
<path d="M1738.8 785.9 L1814.0 797.2 L1829.0 812.2 L1757.6 827.3 L1738.8 812.2 Z" fill="#e8ecd2"/>
<path d="M1012.7 910.0 L1311.5 910.0 L1305.1 1097.9 L1290.8 1111.1 L1238.2 1097.9 L1125.5 1034.0 L1061.6 985.2 L1020.3 943.8 Z" fill="#e8ecd2"/>
<path d="M900.0 910.0 L941.3 910.0 L952.6 932.5 L900.0 1000.2 Z" fill="#e8ecd2"/>
<path d="M2261.2 985.2 L2328.8 1105.4 L2242.4 1116.7 L2253.6 1022.7 Z" fill="#dee3c5"/>
<path d="M2242.4 1135.5 L2336.3 1131.7 L2306.3 1173.1 L2261.2 1203.1 L2246.1 1195.6 Z" fill="#dee3c5"/>
<path d="M2208.5 1150.5 L2238.6 1146.8 L2242.4 1191.9 L2212.3 1195.6 Z" fill="#dee3c5"/>
<path d="M2325.0 1150.5 L2355.1 1146.8 L2358.9 1161.8 L2332.6 1169.3 Z" fill="#e8ecd2"/>
<path d="M2058.2 910.0 L2186.0 910.0 L2189.8 958.9 L2062.0 955.1 Z" fill="#dfe6ee"/>
<path d="M2069.5 913.8 L2110.8 913.8 L2110.8 951.3 L2073.3 951.3 Z" fill="#e8ecd2"/>
<path d="M1877.8 1233.2 L1960.5 1240.7 L1953.0 1255.7 L1885.4 1248.2 Z" fill="#e8ecd2"/>
<path d="M2171.0 1221.9 L2193.5 1221.9 L2216.1 1285.8 L2163.4 1297.1 Z" fill="#dee3c5"/>
<path d="M1938.0 1022.7 L1968.0 1022.7 L1960.5 1097.9 L1938.0 1086.6 Z" fill="#dee3c5"/>
<path d="M2001.9 1402.3 L2197.3 1394.8 L2197.3 1469.9 L2024.4 1469.9 Z" fill="#e8ecd2"/>
<path d="M2434.0 1004.0 L2540.0 996.4 L2540.0 1180.6 L2501.7 1173.1 L2471.6 1060.3 Z" fill="#ebe8ee"/>
<path d="M2509.2 1019.0 L2540.0 1015.2 L2540.0 1086.6 L2494.2 1067.8 Z" fill="#e8ecd2"/>
<path d="M2400.2 1469.9 L2540.0 1428.6 L2540.0 1469.9 Z" fill="#ebe8ee"/>
<path d="M1351.0 1799.7 L1407.3 1807.3 L1399.8 1829.8 L1377.3 1878.7 L1339.7 1863.6 Z" fill="#e8ecd2"/>
<path d="M978.9 1626.9 L1024.0 1638.1 L1020.3 1672.0 L997.7 1668.2 Z" fill="#e8ecd2"/>
<path d="M956.4 1694.5 L1012.7 1694.5 L1001.5 1724.6 L956.4 1713.3 Z" fill="#e8ecd2"/>
<path d="M1625.3 1566.7 L1681.7 1570.5 L1681.7 1594.9 L1625.3 1589.3 Z" fill="#e8ecd2"/>
<path d="M2024.4 1454.0 L2197.3 1454.0 L2182.2 1548.0 L2167.2 1585.5 L2095.8 1623.1 L2043.2 1621.2 L2031.9 1529.2 Z" fill="#e8ecd2"/>
<path d="M2129.6 1694.5 L2144.7 1634.4 L2182.2 1596.8 L2540.0 1446.5 L2540.0 1765.9 L2396.4 1750.9 L2283.7 1743.4 L2118.4 1765.9 Z" fill="#ebe8ee"/>
<path d="M2486.6 1784.7 L2540.0 1784.7 L2540.0 2013.9 L2482.9 2013.9 Z" fill="#ebe8ee"/>
<path d="M2377.7 1923.8 L2471.6 1920.0 L2471.6 2013.9 L2381.4 2013.9 Z" fill="#e8ecd2"/>
<path d="M2099.6 1679.5 L2114.6 1630.6 L2140.9 1604.3 L2163.4 1589.3 L2133.4 1683.2 L2095.8 1739.6 L2084.5 1754.6 Z" fill="#e5e0c0"/>
<path d="M1405.4 806.8 L1485.9 788.1 L1489.9 976.0 L1468.5 1048.5 L1457.7 1064.6 L1400.0 1032.3 L1378.5 967.9 L1383.9 833.7 Z" fill="#e8ecd2"/>
<path d="M1424.2 1002.8 L1480.5 984.0 L1469.8 1043.1 L1434.9 1043.1 Z" fill="#f3f0ea"/>
<path d="M1381.2 1035.0 L1457.7 1064.6 L1453.7 1129.0 L1445.6 1180.0 L1378.5 1166.6 Z" fill="#e9ebdc"/>
<path d="M1480.5 790.7 L1587.9 825.6 L1668.5 860.5 L1691.3 892.8 L1694.0 967.9 L1681.9 992.1 L1657.7 1008.2 L1512.8 933.0 L1480.5 930.3 Z" fill="#dee3c5"/>
<path d="M1657.7 884.7 L1703.4 887.4 L1700.7 1016.2 L1691.3 984.0 L1691.3 892.8 Z" fill="#e4efd8"/>
<path d="M1480.5 935.7 L1512.8 934.4 L1655.0 1008.2 L1636.2 1021.6 L1604.0 1010.9 L1550.3 994.8 L1488.6 978.7 L1480.5 978.7 Z" fill="#e8ecd2"/>
<path d="M1464.4 1041.7 L1507.4 1051.1 L1510.1 1075.3 L1528.9 1083.4 L1532.9 1111.5 L1502.0 1102.1 L1464.4 1096.8 Z" fill="#e8ecd2"/>
<path d="M1604.0 1111.5 L1628.2 1106.2 L1649.7 1082.0 L1684.6 1056.5 L1668.5 1051.1 L1633.6 1051.1 L1614.8 1080.7 Z" fill="#e8ecd2"/>
<path d="M1692.6 1037.7 L1706.0 1037.7 L1700.7 1059.2 L1684.6 1056.5 Z" fill="#e4efd8"/>
<path d="M1684.6 788.1 L1714.1 790.7 L1711.4 801.5 L1684.6 793.4 Z" fill="#e8ecd2"/>
<path d="M1738.3 788.1 L1800.0 785.4 L1800.0 814.9 L1754.4 820.3 L1738.3 801.5 Z" fill="#e8ecd2"/>
<path d="M1383.9 763.9 L1485.9 788.1 L1405.4 806.8 L1383.9 833.7 Z" fill="#e8ecd2"/>
<path d="M1624.0 1567.4 L1681.2 1569.2 L1679.4 1595.1 L1624.0 1593.2 Z" fill="#e8ecd2"/>
<path d="M1588.1 674.6 L1609.7 653.0 L1663.7 626.8 L1669.9 677.7 L1662.1 702.4 L1615.8 687.0 Z" fill="#dde6c8"/>
<path d="M922.5 357.5 L975.2 357.5 L975.2 391.3 L922.5 391.3 Z M993.9 376.6 L1059.3 359.1 L1072.9 409.9 L1007.5 427.4 Z M1201.0 430.0 L1278.6 576.0 L1260.4 585.7 L1182.8 439.7 Z M1161.7 481.6 L1209.4 571.2 L1194.4 579.1 L1146.8 489.6 Z M1244.8 408.0 L1315.4 540.7 L1295.5 551.3 L1224.9 418.6 Z M1272.4 411.8 L1326.0 394.4 L1331.8 412.2 L1278.2 429.7 Z M1320.3 450.0 L1339.4 442.3 L1381.7 546.8 L1362.5 554.6 Z M1354.5 431.4 L1371.9 424.4 L1400.1 494.1 L1382.6 501.1 Z M1409.8 477.8 L1426.1 482.1 L1421.8 498.5 L1405.4 494.1 Z M1421.8 499.2 L1440.4 501.8 L1434.2 546.5 L1415.6 543.9 Z M1456.4 371.2 L1719.4 375.8 L1719.1 392.7 L1456.1 388.1 Z M1456.3 421.0 L1719.4 425.6 L1719.1 440.6 L1456.1 436.0 Z M1106.7 454.6 L1146.0 441.8 L1151.8 459.7 L1112.5 472.4 Z M1090.1 486.0 L1104.9 488.7 L1100.7 512.7 L1085.9 510.1 Z M1101.3 523.5 L1117.9 526.4 L1114.0 548.6 L1097.3 545.7 Z M1112.7 559.0 L1131.2 562.3 L1127.0 586.3 L1108.5 583.1 Z M1034.5 502.2 L1049.3 499.6 L1062.4 573.6 L1047.6 576.2 Z M995.8 504.1 L1020.3 504.1 L1020.3 517.2 L995.8 517.2 Z M975.2 568.0 L1027.8 568.0 L1027.8 581.1 L975.2 581.1 Z M948.9 560.4 L960.1 560.4 L960.1 579.2 L948.9 579.2 Z M945.1 500.3 L990.2 500.3 L990.2 515.4 L945.1 515.4 Z M983.1 613.3 L1045.0 616.6 L1044.2 631.6 L982.3 628.3 Z M1058.2 615.4 L1114.5 618.3 L1113.8 631.4 L1057.5 628.5 Z M1125.8 616.0 L1155.9 617.6 L1155.2 630.8 L1125.2 629.2 Z M1183.7 596.2 L1206.3 596.2 L1206.3 618.7 L1183.7 618.7 Z M1181.3 648.1 L1218.5 653.3 L1216.2 670.1 L1179.0 664.9 Z M1226.5 676.7 L1271.9 664.6 L1276.3 680.9 L1230.9 693.1 Z M1278.2 640.5 L1299.4 632.8 L1311.0 664.6 L1289.8 672.3 Z M1292.8 677.8 L1315.7 669.5 L1320.9 683.6 L1297.9 691.9 Z M1163.1 643.1 L1178.1 643.1 L1178.1 650.6 L1163.1 650.6 Z M1019.1 680.9 L1063.3 690.3 L1059.0 710.5 L1014.8 701.2 Z M1011.6 730.2 L1052.0 738.8 L1047.7 759.0 L1007.3 750.4 Z M1004.6 764.7 L1031.8 772.0 L1013.4 841.0 L986.1 833.7 Z M1219.4 785.9 L1234.5 785.9 L1234.5 804.7 L1257.0 804.7 L1257.0 793.4 L1272.0 793.4 L1272.0 834.8 L1257.0 834.8 L1257.0 819.8 L1234.5 819.8 L1234.5 825.4 L1219.4 825.4 Z M1189.4 872.4 L1208.2 872.4 L1208.2 849.8 L1226.9 849.8 L1226.9 864.8 L1275.8 876.1 L1275.8 909.9 L1189.4 909.9 Z M1339.5 831.0 L1356.4 831.0 L1356.4 909.9 L1339.5 909.9 Z M1373.5 703.3 L1403.6 703.3 L1403.6 722.0 L1373.5 722.0 Z M1474.2 727.1 L1500.0 732.6 L1494.5 758.3 L1468.8 752.8 Z M1501.0 738.6 L1552.1 751.3 L1546.6 773.2 L1495.6 760.4 Z M1403.6 568.0 L1480.6 568.0 L1469.3 688.2 L1392.3 676.9 Z M1381.0 806.6 L1403.6 806.6 L1403.6 816.0 L1381.0 816.0 Z M1638.5 515.4 L1674.2 515.4 L1674.2 545.4 L1638.5 545.4 Z M1640.3 569.1 L1682.7 553.6 L1693.0 581.9 L1650.6 597.3 Z M1606.5 609.3 L1621.5 609.3 L1621.5 624.3 L1606.5 624.3 Z M1666.6 628.1 L1692.9 628.1 L1692.9 646.9 L1666.6 646.9 Z M1704.2 613.1 L1720.0 613.1 L1720.0 643.1 L1704.2 643.1 Z M1584.0 676.9 L1599.0 676.9 L1599.0 692.0 L1584.0 692.0 Z M1677.0 732.6 L1721.8 742.1 L1717.2 764.1 L1672.3 754.6 Z M1531.3 616.8 L1557.7 616.8 L1557.7 646.9 L1531.3 646.9 Z M1586.3 832.1 L1608.1 838.0 L1604.2 852.5 L1582.4 846.6 Z M900.0 654.4 L911.3 654.4 L911.3 669.4 L900.0 669.4 Z M900.0 391.3 L915.0 391.3 L915.0 410.1 L900.0 410.1 Z M1726.5 375.5 L1793.9 369.7 L1796.2 395.9 L1728.8 401.8 Z M1805.4 371.1 L1857.8 366.5 L1860.1 392.8 L1807.7 397.3 Z M1719.2 420.8 L1790.3 414.6 L1792.2 437.0 L1721.1 443.3 Z M1814.0 413.9 L1855.3 413.9 L1855.3 444.0 L1814.0 444.0 Z M1964.3 440.2 L2039.4 440.2 L2039.4 474.0 L1964.3 474.0 Z M2046.9 466.5 L2125.9 466.5 L2125.9 500.3 L2046.9 500.3 Z M2147.5 448.9 L2221.5 462.0 L2217.0 487.9 L2142.9 474.8 Z M2163.4 387.6 L2246.1 387.6 L2246.1 417.6 L2163.4 417.6 Z M1990.6 372.5 L2020.6 372.5 L2020.6 425.2 L1990.6 425.2 Z M2077.0 383.8 L2095.8 383.8 L2095.8 406.4 L2077.0 406.4 Z M2107.1 380.1 L2133.4 380.1 L2133.4 391.3 L2107.1 391.3 Z M2192.9 358.5 L2210.5 364.9 L2205.4 379.1 L2187.7 372.6 Z M2313.8 361.3 L2340.1 361.3 L2340.1 376.3 L2313.8 376.3 Z M2355.2 373.0 L2376.4 380.7 L2370.0 398.4 L2348.8 390.7 Z M2289.5 380.9 L2310.7 388.6 L2300.4 416.8 L2279.2 409.1 Z M2405.0 390.3 L2428.8 379.1 L2436.8 396.2 L2412.9 407.3 Z M2276.2 436.4 L2298.7 436.4 L2298.7 459.0 L2276.2 459.0 Z M2310.0 432.7 L2336.3 432.7 L2336.3 462.7 L2310.0 462.7 Z M2336.3 428.9 L2381.4 428.9 L2381.4 455.2 L2336.3 455.2 Z M2404.0 436.4 L2467.8 436.4 L2467.8 455.2 L2404.0 455.2 Z M2122.1 552.9 L2152.2 552.9 L2152.2 568.0 L2122.1 568.0 Z M2169.7 564.3 L2198.7 572.1 L2194.8 586.6 L2165.8 578.9 Z M2269.4 575.1 L2291.2 569.3 L2298.0 594.7 L2276.2 600.5 Z M2336.3 545.4 L2358.9 545.4 L2358.9 564.2 L2336.3 564.2 Z M2338.5 499.7 L2360.3 493.9 L2364.2 508.4 L2342.4 514.3 Z M2340.1 524.7 L2351.3 524.7 L2351.3 536.0 L2340.1 536.0 Z M2350.7 586.3 L2387.7 579.8 L2389.6 590.9 L2352.6 597.4 Z M2392.7 577.4 L2407.7 577.4 L2407.7 590.5 L2392.7 590.5 Z M2193.5 601.8 L2212.3 601.8 L2212.3 628.1 L2193.5 628.1 Z M2285.1 653.7 L2322.3 659.0 L2319.9 675.7 L2282.7 670.5 Z M2186.0 676.9 L2204.8 676.9 L2204.8 695.7 L2186.0 695.7 Z M2212.3 725.8 L2238.6 725.8 L2238.6 759.6 L2212.3 759.6 Z M2193.5 774.7 L2261.2 774.7 L2261.2 838.5 L2193.5 838.5 Z M2415.2 692.0 L2434.0 692.0 L2434.0 707.0 L2415.2 707.0 Z M2444.1 707.4 L2454.7 711.2 L2450.2 723.6 L2439.6 719.7 Z M2389.7 722.9 L2411.3 738.0 L2399.4 755.0 L2377.9 739.9 Z M2415.1 717.0 L2437.9 730.1 L2426.6 749.7 L2403.8 736.5 Z M2431.5 738.0 L2473.9 722.5 L2481.6 743.7 L2439.2 759.1 Z M2484.1 727.4 L2511.3 714.7 L2519.3 731.7 L2492.0 744.4 Z M2435.6 613.1 L2460.3 595.9 L2477.5 620.5 L2452.9 637.8 Z M2432.8 648.2 L2461.9 640.4 L2465.3 653.1 L2436.2 660.9 Z M2461.2 554.8 L2488.4 567.5 L2482.1 581.1 L2454.8 568.4 Z M2352.7 615.7 L2365.4 612.3 L2380.0 666.8 L2367.3 670.2 Z M2402.1 814.1 L2460.3 814.1 L2460.3 849.8 L2402.1 849.8 Z M2336.3 838.5 L2381.4 838.5 L2381.4 849.8 L2336.3 849.8 Z M2216.1 894.9 L2246.1 894.9 L2246.1 909.9 L2216.1 909.9 Z M2298.7 891.2 L2381.4 891.2 L2381.4 909.9 L2298.7 909.9 Z M2396.4 894.9 L2509.2 894.9 L2509.2 909.9 L2396.4 909.9 Z M1791.4 474.0 L1810.2 474.0 L1810.2 489.0 L1791.4 489.0 Z M1814.0 466.5 L1836.5 466.5 L1836.5 481.5 L1814.0 481.5 Z M1840.3 451.5 L1859.0 451.5 L1859.0 474.0 L1840.3 474.0 Z M1892.9 460.9 L1917.3 460.9 L1917.3 507.8 L1892.9 507.8 Z M1911.7 515.4 L1938.0 515.4 L1938.0 528.5 L1911.7 528.5 Z M1759.0 563.6 L1789.6 549.3 L1797.5 566.3 L1766.9 580.6 Z M1814.0 583.0 L1844.0 583.0 L1844.0 609.3 L1814.0 609.3 Z M1819.6 609.3 L1840.3 609.3 L1840.3 646.9 L1819.6 646.9 Z M1772.6 665.7 L1836.5 665.7 L1836.5 688.2 L1772.6 688.2 Z M1735.0 673.2 L1761.3 673.2 L1761.3 695.7 L1735.0 695.7 Z M1896.6 579.2 L1945.5 579.2 L1945.5 613.1 L1896.6 613.1 Z M1907.9 613.1 L1930.4 613.1 L1930.4 631.9 L1907.9 631.9 Z M1885.4 635.6 L1911.7 635.6 L1911.7 688.2 L1885.4 688.2 Z M1949.2 590.5 L1986.8 590.5 L1986.8 613.1 L1949.2 613.1 Z M1999.3 618.6 L2029.1 622.7 L2027.0 637.6 L1997.2 633.4 Z M1949.9 665.6 L1973.7 654.5 L1982.4 673.2 L1958.6 684.4 Z M1984.9 673.2 L2024.4 673.2 L2024.4 688.2 L1984.9 688.2 Z M1953.0 703.3 L1971.8 703.3 L1971.8 729.6 L1953.0 729.6 Z M2052.2 606.8 L2089.4 612.0 L2086.8 630.6 L2049.6 625.4 Z M2089.9 607.3 L2119.6 611.5 L2116.8 632.0 L2087.0 627.8 Z M2103.3 665.7 L2118.4 665.7 L2118.4 692.0 L2103.3 692.0 Z M2080.8 692.0 L2110.8 692.0 L2110.8 707.0 L2080.8 707.0 Z M2043.2 688.2 L2058.2 688.2 L2058.2 707.0 L2043.2 707.0 Z M2050.7 740.8 L2073.3 740.8 L2073.3 770.9 L2050.7 770.9 Z M2092.0 770.9 L2112.7 770.9 L2112.7 782.2 L2092.0 782.2 Z M1989.7 740.0 L2030.7 734.3 L2032.8 749.2 L1991.8 754.9 Z M2099.6 791.6 L2129.6 791.6 L2129.6 823.5 L2099.6 823.5 Z M2061.3 822.1 L2113.7 817.5 L2115.3 836.2 L2062.9 840.8 Z M1803.1 743.0 L1846.7 754.6 L1839.8 780.0 L1796.3 768.4 Z M1862.8 759.6 L1979.3 759.6 L1979.3 801.0 L1862.8 801.0 Z M1877.8 801.0 L1990.6 801.0 L1990.6 853.6 L1877.8 853.6 Z M1772.6 834.8 L1825.2 834.8 L1825.2 898.7 L1772.6 898.7 Z M2010.8 884.5 L2078.8 870.1 L2083.1 890.3 L2015.1 904.7 Z M1735.0 613.1 L1757.6 613.1 L1757.6 661.9 L1735.0 661.9 Z M1768.9 609.3 L1806.4 609.3 L1806.4 635.6 L1768.9 635.6 Z M914.9 985.5 L1131.1 1160.5 L1118.1 1176.5 L901.9 1001.5 Z M1132.1 1167.6 L1283.5 1258.5 L1272.9 1276.3 L1121.5 1185.3 Z M1006.9 1136.7 L1206.7 1256.7 L1198.9 1269.6 L999.2 1149.6 Z M1288.8 1245.6 L1327.9 1251.1 L1324.8 1273.4 L1285.7 1267.9 Z M1285.4 1177.3 L1333.8 1184.1 L1330.1 1210.2 L1281.7 1203.4 Z M1234.9 1118.0 L1257.0 1128.4 L1249.1 1145.4 L1226.9 1135.1 Z M1356.4 1155.9 L1370.1 1162.3 L1360.5 1182.7 L1346.9 1176.3 Z M1366.1 1177.3 L1384.8 1186.0 L1375.3 1206.4 L1356.6 1197.7 Z M1423.1 1127.1 L1453.1 1138.0 L1444.1 1162.7 L1414.1 1151.8 Z M1435.5 1195.6 L1456.2 1195.6 L1456.2 1214.4 L1435.5 1214.4 Z M1396.5 1205.9 L1442.8 1265.1 L1429.4 1275.5 L1383.2 1216.3 Z M1348.2 1292.1 L1378.2 1294.7 L1376.2 1317.1 L1346.3 1314.5 Z M1408.5 1288.3 L1438.5 1290.9 L1436.2 1317.1 L1406.2 1314.5 Z M1323.6 921.1 L1349.9 921.5 L1348.3 1011.7 L1322.0 1011.2 Z M1319.0 1017.1 L1334.1 1017.1 L1334.1 1034.0 L1319.0 1034.0 Z M1343.4 1019.0 L1354.7 1019.0 L1354.7 1045.3 L1343.4 1045.3 Z M1323.1 1063.2 L1345.5 1065.2 L1341.3 1113.8 L1318.8 1111.9 Z M1133.0 917.5 L1238.2 917.5 L1283.3 947.6 L1275.8 966.4 L1226.9 960.7 L1223.2 951.3 L1178.1 951.3 L1178.1 943.8 L1133.0 943.8 Z M1284.7 1289.0 L1314.1 1295.3 L1300.8 1357.8 L1271.4 1351.5 Z M1266.8 1360.5 L1299.9 1367.5 L1277.3 1474.1 L1244.2 1467.1 Z M935.5 1145.5 L956.2 1161.7 L943.5 1178.0 L922.7 1161.8 Z M961.8 1171.9 L982.5 1188.0 L969.8 1204.3 L949.0 1188.1 Z M984.3 1198.2 L1005.0 1214.4 L992.3 1230.6 L971.6 1214.4 Z M1016.8 1216.8 L1083.9 1277.1 L1061.2 1302.2 L994.2 1241.9 Z M900.0 1094.1 L915.0 1094.1 L915.0 1112.9 L900.0 1112.9 Z M969.3 1101.4 L985.5 1114.2 L971.7 1131.9 L955.4 1119.2 Z M1215.3 1288.1 L1241.4 1303.2 L1231.0 1321.1 L1205.0 1306.0 Z M1215.1 1252.6 L1231.3 1261.9 L1220.1 1281.5 L1203.8 1272.1 Z M1230.7 1323.4 L1245.7 1323.4 L1245.7 1334.7 L1230.7 1334.7 Z M1249.5 1278.3 L1260.8 1278.3 L1260.8 1289.6 L1249.5 1289.6 Z M1014.7 1327.9 L1035.6 1336.4 L1003.2 1416.5 L982.3 1408.1 Z M1038.2 1319.6 L1116.5 1460.9 L1100.1 1470.0 L1021.7 1328.7 Z M1108.8 1368.5 L1129.2 1378.1 L1119.7 1398.5 L1099.2 1389.0 Z M1143.2 1383.7 L1241.9 1429.8 L1235.6 1443.4 L1136.8 1397.4 Z M960.6 1424.5 L989.2 1433.8 L982.2 1455.2 L953.6 1446.0 Z M1006.0 1437.8 L1045.3 1450.6 L1038.3 1472.0 L999.0 1459.2 Z M1305.9 1454.9 L1381.0 1454.9 L1381.0 1469.9 L1305.9 1469.9 Z M1332.2 1428.6 L1369.8 1428.6 L1369.8 1451.2 L1332.2 1451.2 Z M1556.2 1007.5 L1649.8 1015.7 L1645.5 1064.3 L1551.9 1056.1 Z M1668.0 1005.1 L1706.8 1019.2 L1699.1 1040.4 L1660.3 1026.3 Z M1538.9 1135.5 L1553.9 1135.5 L1553.9 1165.5 L1538.9 1165.5 Z M1482.5 1158.0 L1512.6 1158.0 L1512.6 1173.1 L1482.5 1173.1 Z M1568.9 1161.8 L1587.7 1161.8 L1587.7 1176.8 L1568.9 1176.8 Z M1593.7 1151.7 L1608.6 1149.6 L1611.8 1171.9 L1596.9 1174.0 Z M1616.5 1155.4 L1631.4 1153.3 L1634.0 1171.9 L1619.2 1174.0 Z M1646.6 1151.4 L1657.8 1149.8 L1660.4 1168.4 L1649.2 1170.0 Z M1665.5 1135.0 L1710.2 1128.7 L1712.8 1147.3 L1668.2 1153.6 Z M1472.8 1211.0 L1491.3 1214.3 L1488.4 1230.9 L1469.9 1227.7 Z M1526.0 1235.2 L1548.2 1239.1 L1544.3 1261.3 L1522.0 1257.4 Z M1585.7 1250.5 L1604.2 1253.8 L1601.0 1272.3 L1582.5 1269.0 Z M1556.1 1275.8 L1585.7 1281.1 L1581.8 1303.3 L1552.2 1298.1 Z M1510.7 1293.9 L1536.1 1300.7 L1533.2 1311.6 L1507.8 1304.8 Z M1509.1 1320.1 L1526.1 1328.1 L1519.8 1341.7 L1502.7 1333.7 Z M1561.2 1315.1 L1597.5 1324.9 L1591.7 1346.7 L1555.4 1336.9 Z M1644.4 1342.1 L1660.8 1346.5 L1656.9 1361.0 L1640.6 1356.6 Z M1668.7 1339.2 L1723.9 1354.0 L1714.2 1390.3 L1659.0 1375.5 Z M1555.1 1344.9 L1593.2 1355.1 L1588.4 1373.3 L1550.3 1363.1 Z M1565.6 1390.7 L1586.1 1400.3 L1579.7 1413.9 L1559.3 1404.3 Z M1768.9 913.8 L1829.0 913.8 L1829.0 966.4 L1768.9 966.4 Z M1837.5 990.4 L1914.6 974.0 L1929.5 1043.8 L1852.3 1060.2 Z M1723.9 985.4 L1830.5 1008.1 L1825.1 1033.8 L1718.5 1011.1 Z M1794.8 1061.7 L1828.1 1067.6 L1814.4 1145.3 L1781.0 1139.5 Z M1748.4 1073.3 L1772.2 1084.4 L1740.5 1152.6 L1716.6 1141.4 Z M1968.0 1022.7 L2088.3 1022.7 L2088.3 1007.7 L2167.2 1007.7 L2167.2 1060.3 L2182.2 1060.3 L2182.2 1139.2 L2144.7 1139.2 L2133.4 1120.4 L2058.2 1120.4 L2058.2 1139.2 L2013.1 1120.4 L1964.3 1097.9 Z M1835.3 1070.8 L1935.2 1088.4 L1924.1 1151.3 L1824.2 1133.7 Z M1821.5 1154.3 L1953.0 1135.5 L2009.4 1154.3 L2009.4 1210.6 L1877.8 1206.9 L1825.2 1210.6 Z M2144.7 1169.3 L2171.0 1169.3 L2171.0 1203.1 L2144.7 1203.1 Z M1731.7 1201.5 L1775.2 1213.2 L1768.4 1238.6 L1724.9 1226.9 Z M1847.8 1248.2 L1862.8 1248.2 L1862.8 1270.8 L1847.8 1270.8 Z M1899.2 1271.8 L1932.5 1277.7 L1927.9 1303.6 L1894.6 1297.7 Z M1979.3 1255.7 L2035.7 1255.7 L2035.7 1285.8 L1979.3 1285.8 Z M2046.1 1267.7 L2083.1 1274.3 L2077.9 1303.9 L2040.9 1297.3 Z M2144.7 1297.1 L2167.2 1297.1 L2167.2 1323.4 L2144.7 1323.4 Z M2129.6 1233.2 L2163.4 1233.2 L2163.4 1248.2 L2129.6 1248.2 Z M1870.3 1293.3 L1881.6 1293.3 L1881.6 1312.1 L1870.3 1312.1 Z M1866.6 1323.4 L1900.4 1323.4 L1900.4 1338.4 L1866.6 1338.4 Z M1921.8 1331.3 L1962.5 1338.4 L1957.9 1364.4 L1917.2 1357.2 Z M1765.1 1330.9 L1780.1 1330.9 L1780.1 1342.2 L1765.1 1342.2 Z M1812.0 1347.9 L1834.7 1361.0 L1827.2 1374.0 L1804.4 1360.9 Z M1723.8 1353.4 L1742.5 1353.4 L1742.5 1372.2 L1723.8 1372.2 Z M1885.4 1409.8 L1900.4 1409.8 L1900.4 1436.1 L1885.4 1436.1 Z M1814.0 1451.2 L1832.7 1451.2 L1832.7 1466.2 L1814.0 1466.2 Z M2283.7 913.8 L2298.7 913.8 L2298.7 928.8 L2283.7 928.8 Z M2359.9 924.1 L2397.1 918.9 L2402.9 959.8 L2365.7 965.0 Z M2193.5 977.6 L2231.1 977.6 L2231.1 1022.7 L2193.5 1022.7 Z M2192.0 1054.5 L2240.6 1058.8 L2236.4 1107.5 L2187.7 1103.2 Z M2204.8 1109.2 L2227.3 1109.2 L2227.3 1128.0 L2204.8 1128.0 Z M2332.0 983.2 L2441.3 1145.2 L2419.5 1160.0 L2310.2 997.9 Z M2310.0 1188.1 L2336.3 1180.6 L2340.1 1173.1 L2388.9 1169.3 L2392.7 1188.1 L2358.9 1191.9 L2355.1 1203.1 L2313.8 1201.2 Z M2224.5 1223.8 L2243.0 1220.5 L2248.9 1253.8 L2230.4 1257.1 Z M2232.2 1259.6 L2272.9 1252.4 L2278.8 1285.7 L2238.1 1292.9 Z M2306.3 1263.3 L2340.1 1263.3 L2340.1 1293.3 L2306.3 1293.3 Z M2245.7 1322.6 L2358.3 1316.7 L2359.3 1335.5 L2246.7 1341.4 Z M2249.1 1351.7 L2417.6 1366.5 L2416.0 1385.2 L2247.5 1370.5 Z M2233.4 1417.9 L2330.7 1409.4 L2334.0 1446.8 L2236.7 1455.3 Z M2343.8 1417.3 L2366.4 1417.3 L2366.4 1443.6 L2343.8 1443.6 Z M2373.9 1417.3 L2400.2 1417.3 L2400.2 1439.9 L2373.9 1439.9 Z M2409.2 1419.2 L2431.4 1423.2 L2428.8 1438.0 L2406.6 1434.1 Z M2437.9 1419.5 L2505.8 1397.5 L2512.8 1418.9 L2444.9 1441.0 Z M2459.2 1295.9 L2470.1 1298.9 L2465.2 1317.0 L2454.3 1314.1 Z M2473.0 987.6 L2483.9 990.5 L2481.5 999.6 L2470.6 996.7 Z M925.9 1530.8 L966.4 1539.4 L960.5 1567.0 L920.1 1558.4 Z M1008.0 1495.4 L1044.7 1503.2 L1040.1 1525.3 L1003.3 1517.5 Z M1061.7 1518.9 L1091.1 1525.1 L1084.1 1558.2 L1054.6 1552.0 Z M1104.5 1539.5 L1203.8 1560.6 L1199.1 1582.7 L1099.8 1561.6 Z M1149.9 1618.6 L1197.7 1628.7 L1187.5 1676.5 L1139.7 1666.4 Z M1054.1 1667.7 L1149.7 1688.0 L1144.2 1713.8 L1048.7 1693.5 Z M1052.7 1707.9 L1107.2 1722.5 L1078.0 1831.4 L1023.5 1816.8 Z M963.9 1581.8 L1050.3 1611.8 L1054.1 1679.5 L1027.8 1747.1 L960.1 1732.1 L926.3 1641.9 Z M1214.9 1671.7 L1258.0 1684.9 L1224.0 1796.3 L1180.8 1783.1 Z M1238.2 1773.4 L1324.7 1788.5 L1317.1 1829.8 L1298.4 1829.8 L1298.4 1814.8 L1272.0 1811.0 L1264.5 1852.4 L1275.8 1856.1 L1272.0 1878.7 L1230.7 1871.1 Z M1256.0 1569.1 L1278.3 1572.3 L1273.1 1609.5 L1250.7 1606.3 Z M1301.1 1491.4 L1394.7 1499.5 L1389.5 1559.4 L1295.9 1551.3 Z M1116.2 1451.5 L1215.5 1472.6 L1206.1 1516.7 L1106.9 1495.6 Z M1248.8 1481.9 L1282.3 1486.6 L1276.5 1527.6 L1243.0 1522.8 Z M1335.9 1461.5 L1388.5 1461.5 L1388.5 1476.5 L1335.9 1476.5 Z M909.7 1777.1 L974.8 1814.7 L961.7 1837.4 L896.6 1799.9 Z M992.0 1825.2 L1014.7 1838.4 L999.7 1864.4 L976.9 1851.3 Z M1040.4 1857.3 L1074.5 1873.1 L1060.2 1903.8 L1026.1 1887.9 Z M1085.6 1887.0 L1140.9 1918.9 L1127.8 1941.7 L1072.5 1909.8 Z M1013.0 1908.4 L1074.7 1924.9 L1068.9 1946.7 L1007.2 1930.1 Z M1207.3 1906.0 L1240.6 1911.9 L1235.4 1941.5 L1202.0 1935.6 Z M1249.8 1933.6 L1312.7 1944.6 L1305.5 1985.4 L1242.6 1974.3 Z M1287.2 1861.0 L1320.5 1866.9 L1313.3 1907.6 L1280.0 1901.7 Z M1346.2 1873.5 L1364.7 1876.8 L1359.5 1906.4 L1341.0 1903.1 Z M1403.6 1849.4 L1440.3 1857.2 L1422.4 1941.7 L1385.6 1933.9 Z M1425.9 1810.8 L1466.4 1819.4 L1460.1 1848.8 L1419.7 1840.2 Z M1441.2 1873.0 L1456.2 1873.0 L1456.2 1886.2 L1441.2 1886.2 Z M1498.6 1887.8 L1547.3 1892.1 L1545.3 1914.6 L1496.6 1910.3 Z M1354.7 1743.4 L1373.5 1743.4 L1373.5 1762.2 L1354.7 1762.2 Z M1128.8 1795.7 L1153.6 1804.7 L1148.4 1818.8 L1123.7 1809.8 Z M903.8 1676.7 L933.3 1683.0 L926.2 1716.1 L896.8 1709.8 Z M914.5 1867.7 L969.0 1893.1 L953.1 1927.2 L898.6 1901.8 Z M927.8 1973.9 L978.6 1987.5 L969.9 2020.2 L919.1 2006.6 Z M1030.4 1965.2 L1063.1 1974.0 L1051.4 2017.6 L1018.8 2008.8 Z M1091.0 1940.5 L1143.1 1970.6 L1129.9 1993.4 L1077.8 1963.3 Z M2201.0 1829.8 L2216.1 1829.8 L2216.1 1867.4 L2201.0 1867.4 Z M2034.0 1910.9 L2063.8 1906.8 L2067.4 1932.8 L2037.7 1937.0 Z M1963.5 1919.7 L2011.8 1912.9 L2013.9 1927.8 L1965.6 1934.6 Z M2103.1 1933.0 L2151.8 1937.3 L2144.9 2015.9 L2096.2 2011.7 Z M2155.4 1940.1 L2215.3 1945.3 L2209.1 2016.4 L2149.2 2011.2 Z M1947.6 1977.4 L2056.2 1967.9 L2059.8 2009.1 L1951.2 2018.6 Z M1830.2 1985.1 L1926.4 1968.2 L1933.0 2005.2 L1836.7 2022.1 Z M2378.3 1774.3 L2490.9 1780.2 L2489.7 1802.7 L2377.1 1796.8 Z M2374.9 1876.2 L2468.8 1881.1 L2466.8 1918.7 L2373.0 1913.8 Z M2505.4 1874.9 L2540.0 1874.9 L2540.0 2013.9 L2505.4 2013.9 Z M2294.5 1585.3 L2493.6 1578.3 L2494.6 1608.4 L2295.6 1615.3 Z M2358.5 1636.3 L2433.6 1640.2 L2426.9 1767.8 L2351.8 1763.9 Z M2486.6 1611.8 L2540.0 1611.8 L2540.0 1683.2 L2486.6 1683.2 Z M2512.9 1529.2 L2540.0 1529.2 L2540.0 1578.0 L2512.9 1578.0 Z M2249.7 1571.3 L2286.7 1577.8 L2280.2 1614.8 L2243.1 1608.3 Z M2333.8 1483.8 L2361.0 1471.1 L2368.9 1488.1 L2341.7 1500.8 Z M1429.5 847.1 L1480.5 847.1 L1483.2 908.9 L1488.6 967.9 L1453.7 951.8 L1434.9 954.5 Z M1534.2 1010.9 L1622.8 1008.2 L1630.9 1021.6 L1614.8 1048.5 L1587.9 1056.5 L1539.6 1051.1 Z M1708.7 806.8 L1738.3 806.8 L1738.3 855.2 L1708.7 849.8 Z M1716.8 976.0 L1757.0 984.0 L1797.3 994.8 L1797.3 1043.1 L1738.3 1029.7 L1714.1 994.8 Z M1767.8 914.2 L1800.0 914.2 L1800.0 978.7 L1767.8 973.3 Z M1663.1 1000.1 L1695.3 1010.9 L1692.6 1035.0 L1663.1 1021.6 Z M1480.0 1676.3 L1494.8 1661.5 L1528.0 1705.8 L1513.2 1720.6 Z M1941.5 1680.0 L1996.9 1687.4 L2000.6 1661.5 L2011.7 1661.5 L2006.2 1705.8 L1939.7 1694.8 Z M1900.9 1724.3 L1963.7 1735.4 L1963.7 1746.5 L2011.7 1746.5 L2011.7 1772.3 L2061.5 1764.9 L2059.7 1772.3 L1886.2 1798.2 L1893.5 1753.8 Z M1672.0 1831.4 L1756.9 1836.9 L1760.6 1883.1 L1738.5 1949.5 L1653.5 1934.8 L1657.2 1875.7 Z M1768.0 1836.9 L1886.2 1820.3 L1897.2 1872.0 L1849.2 1901.5 L1775.4 1886.8 Z M1819.7 1764.9 L1838.2 1764.9 L1838.2 1805.5 L1819.7 1805.5 Z M1849.2 1480.6 L1871.4 1476.9 L1875.1 1488.0 L1934.2 1491.7 L1937.8 1510.2 L1849.2 1506.5 Z M1823.4 1523.1 L1919.4 1526.8 L1919.4 1541.5 L1823.4 1537.8 Z M2048.6 1491.7 L2080.0 1495.4 L2080.0 1521.2 L2050.5 1519.4 Z M1808.6 1454.8 L1830.8 1456.6 L1830.8 1471.4 L1808.6 1469.5 Z M2037.5 1739.1 L2063.4 1737.2 L2063.4 1761.2 L2039.4 1761.2 Z M1480.0 1728.0 L1498.5 1746.5 L1491.1 1757.5 L1480.0 1753.8 Z M1841.2 545.0 L1867.4 545.0 L1867.4 656.1 L1855.1 702.4 L1838.1 761.1 L1801.1 751.8 L1819.6 705.5 L1816.5 585.1 L1841.2 585.1 Z M1890.6 582.0 L1943.1 582.0 L1943.1 612.9 L1915.3 612.9 L1912.2 656.1 L1902.9 705.5 L1893.7 748.7 L1872.1 745.6 L1887.5 674.6 Z M1640.5 569.7 L1683.8 563.5 L1693.0 585.1 L1652.9 600.5 Z M1736.2 597.4 L1764.0 600.5 L1757.8 662.3 L1736.2 659.2 Z M1668.3 631.4 L1693.0 628.3 L1696.1 674.6 L1671.4 677.7 Z M1699.2 656.1 L1727.0 656.1 L1723.9 683.9 L1699.2 683.9 Z M1450.2 1636.0 L1531.2 1709.0 L1518.6 1722.9 L1437.6 1650.0 Z M1416.2 1683.6 L1456.9 1676.5 L1469.9 1750.5 L1429.2 1757.7 Z M1487.7 1719.6 L1507.9 1736.5 L1488.5 1759.6 L1468.4 1742.7 Z" fill="#eae3e0"/>
<path d="M978.9 1626.9 L1024.0 1638.1 L1020.3 1672.0 L997.7 1668.2 Z" fill="#e8ecd2"/>
<path d="M956.4 1694.5 L1012.7 1694.5 L1001.5 1724.6 L956.4 1713.3 Z" fill="#e8ecd2"/>
<path d="M915.0 485.3 C915.3 496.1 914.5 541.8 916.9 552.9 C919.3 564.1 928.0 554.5 930.1 554.8 M997.7 485.3 C999.5 487.1 999.4 495.4 1009.0 496.6 C1018.6 497.8 1050.0 493.4 1057.8 492.8 M1099.2 459.0 C1104.6 471.6 1122.8 512.0 1133.0 537.9 C1143.2 563.8 1157.0 606.4 1163.1 620.6 C1169.1 634.7 1147.7 625.0 1170.6 626.2 C1193.4 627.4 1284.2 627.8 1305.9 628.1 M1080.4 650.6 C1081.0 662.7 1087.8 707.8 1084.1 725.8 C1080.5 743.8 1065.7 745.3 1057.8 763.4 C1050.0 781.4 1039.5 815.1 1035.3 838.5 C1031.1 862.0 1032.1 898.5 1031.5 909.9 M1084.1 725.8 C1096.8 724.3 1125.8 717.3 1163.1 716.4 C1200.3 715.5 1292.5 719.6 1317.1 720.2 M1086.0 646.9 C1097.1 649.9 1143.8 659.7 1155.5 665.7 C1167.3 671.7 1159.3 676.6 1159.3 684.5 C1159.3 692.3 1156.1 709.7 1155.5 714.5 M1080.4 658.2 C1085.2 660.6 1097.8 669.3 1110.4 673.2 C1123.1 677.1 1151.5 681.1 1159.3 682.6 M1042.8 836.7 C1053.6 838.2 1087.6 842.8 1110.4 846.1 C1133.3 849.4 1173.6 855.5 1185.6 857.3 M1313.4 816.0 C1310.4 817.8 1298.2 815.2 1294.6 827.3 C1291.0 839.3 1291.4 880.9 1290.8 891.2 M1170.6 883.6 L1148.0 909.9 M1535.1 539.8 C1544.7 540.1 1585.6 531.7 1595.2 541.7 C1604.9 551.6 1598.8 592.2 1595.2 601.8 C1591.6 611.4 1576.3 595.2 1572.7 601.8 C1569.1 608.4 1570.3 634.7 1572.7 643.1 C1575.1 651.5 1585.3 652.6 1587.7 654.4 M1636.6 541.7 C1636.6 549.5 1634.8 571.3 1636.6 590.5 C1638.4 609.8 1646.0 650.5 1647.8 661.9 M1636.6 541.7 L1662.9 541.7 M1426.1 770.9 C1422.5 781.7 1407.2 816.3 1403.6 838.5 C1400.0 860.8 1403.6 898.5 1403.6 909.9 M1328.4 789.7 C1332.6 793.9 1343.3 810.9 1354.7 816.0 C1366.1 821.1 1392.6 820.7 1399.8 821.6 M1738.8 598.0 C1737.0 612.5 1730.5 671.4 1727.5 688.2 C1724.5 705.1 1721.2 700.8 1720.0 703.3 M2482.9 435.7 C2478.7 447.2 2467.4 481.6 2456.6 507.8 C2445.7 534.1 2428.5 572.9 2415.2 599.9 C2402.0 627.0 2383.5 661.3 2373.9 676.9 C2364.3 692.6 2358.1 694.3 2355.1 697.6 M2204.8 887.4 C2212.6 887.7 2244.6 885.7 2253.6 889.3 C2262.7 892.9 2260.0 906.6 2261.2 909.9 M1039.0 910.0 C1045.1 915.4 1064.0 935.7 1076.6 943.8 C1089.3 951.9 1110.1 963.7 1118.0 960.7 C1125.8 957.7 1123.1 933.1 1125.5 925.0 C1127.9 916.9 1131.8 912.4 1133.0 910.0 M1125.5 975.8 C1134.5 974.0 1168.0 966.0 1181.9 964.5 C1195.7 963.0 1202.9 963.1 1211.9 966.4 C1220.9 969.7 1228.0 979.7 1238.2 985.2 C1248.4 990.6 1272.2 994.2 1275.8 1000.2 C1279.4 1006.2 1262.6 1010.7 1260.8 1022.7 C1259.0 1034.8 1261.5 1063.9 1264.5 1075.4 C1267.5 1086.8 1277.2 1091.1 1279.6 1094.1 M1118.0 960.7 C1117.4 967.0 1107.0 988.5 1114.2 1000.2 C1121.4 1011.9 1147.4 1024.4 1163.1 1034.0 C1178.7 1043.6 1201.7 1053.1 1211.9 1060.3 C1222.1 1067.5 1219.1 1076.7 1226.9 1079.1 C1234.8 1081.5 1255.4 1076.0 1260.8 1075.4 M900.0 988.9 C903.6 985.3 919.5 975.4 922.5 966.4 C925.6 957.4 916.4 939.2 918.8 932.5 C921.2 925.9 934.6 926.2 937.6 925.0 M1289.0 1291.4 C1297.7 1292.0 1333.8 1298.5 1343.4 1295.2 C1353.1 1291.9 1348.2 1274.7 1349.1 1270.8 M1343.4 1295.2 C1339.8 1311.7 1327.5 1370.6 1320.9 1398.5 C1314.3 1426.5 1305.1 1458.5 1302.1 1469.9 M1553.9 1308.4 L1542.6 1368.5 M1674.2 1443.6 L1720.0 1445.5 M2204.8 917.5 C2207.2 918.1 2218.0 918.9 2219.8 921.3 C2221.6 923.7 2218.5 930.7 2216.1 932.5 C2213.7 934.4 2206.6 932.5 2204.8 932.5 M2204.8 932.5 C2204.8 939.8 2196.4 969.5 2204.8 977.6 C2213.2 985.8 2250.8 961.6 2257.4 983.3 C2264.0 1004.9 2233.5 1092.2 2246.1 1112.9 C2258.7 1133.7 2321.9 1112.9 2336.3 1112.9 M2257.4 983.3 L2261.2 910.0 M2099.6 1173.1 C2099.3 1177.3 2102.5 1193.4 2097.7 1199.4 C2092.9 1205.4 2074.0 1208.8 2069.5 1210.6 M2097.7 1199.4 L2114.6 1208.8 M1968.0 1022.7 L1960.5 1097.9 M1936.1 1058.4 L1964.3 1060.3 M1742.5 1064.1 C1740.7 1069.5 1734.9 1093.1 1731.3 1097.9 C1727.7 1102.7 1721.8 1094.7 1720.0 1094.1 M2171.0 1221.9 C2171.6 1227.9 2175.6 1247.5 2174.7 1259.5 C2173.8 1271.5 2159.3 1291.1 2165.3 1297.1 C2171.3 1303.1 2204.8 1297.1 2212.3 1297.1 M2174.7 1259.5 L2204.8 1240.7 M2332.6 1347.8 L2407.7 1321.5 M2334.4 1394.8 L2338.2 1469.9 M2227.3 1417.3 C2231.5 1416.7 2249.4 1417.2 2253.6 1413.6 C2257.8 1410.0 2253.6 1397.8 2253.6 1394.8 M2227.3 1417.3 L2231.1 1451.2 M2005.6 1398.5 C2023.6 1397.9 2090.1 1394.8 2118.4 1394.8 C2146.6 1394.8 2172.0 1397.9 2182.2 1398.5 M2013.1 1398.5 C2017.3 1401.5 2023.8 1414.3 2039.4 1417.3 C2055.1 1420.3 2098.2 1420.9 2110.8 1417.3 C2123.5 1413.7 2117.1 1398.4 2118.4 1394.8 M2110.8 1417.3 C2108.4 1420.9 2109.6 1433.3 2095.8 1439.9 C2082.0 1446.5 2035.8 1455.7 2024.4 1458.7 M2095.8 1439.9 C2099.4 1442.9 2109.3 1453.9 2118.4 1458.7 C2127.4 1463.5 2146.8 1468.1 2152.2 1469.9 M2163.4 1417.3 C2165.9 1420.3 2175.8 1427.7 2178.5 1436.1 C2181.2 1444.5 2180.1 1464.5 2180.4 1469.9 M1720.0 1451.2 C1722.4 1450.9 1729.6 1451.1 1735.0 1449.3 C1740.4 1447.5 1750.8 1441.4 1753.8 1439.9 M2392.7 1139.2 L2467.8 1255.7 M1304.0 1454.0 L1279.6 1544.2 M1277.7 1649.4 C1276.8 1655.4 1274.1 1685.2 1272.0 1687.0 C1269.9 1688.8 1266.3 1661.3 1264.5 1660.7 C1262.7 1660.1 1265.6 1663.4 1260.8 1683.2 C1256.0 1703.1 1245.3 1746.8 1234.5 1784.7 C1223.6 1822.6 1197.3 1898.3 1193.1 1920.0 C1188.9 1941.6 1197.9 1946.5 1208.2 1920.0 C1218.4 1893.5 1249.2 1781.1 1257.0 1754.6 M1245.7 1745.2 C1252.4 1748.0 1269.6 1754.6 1287.1 1762.2 C1304.5 1769.7 1343.9 1787.4 1354.7 1792.2 M1366.0 1803.5 L1377.3 1878.7 M1335.9 1850.5 C1341.3 1849.6 1358.9 1848.4 1369.8 1844.8 C1380.6 1841.2 1398.2 1830.6 1403.6 1827.9 M1290.8 1548.0 C1299.3 1550.4 1326.6 1557.0 1343.4 1563.0 C1360.3 1569.0 1387.6 1581.9 1396.1 1585.5 M937.6 1465.3 L1057.8 1489.7 M1411.1 1583.7 L1478.7 1593.0 M1584.0 1702.0 L1689.2 1718.9 M1632.8 1570.5 L1630.9 1593.0 M1632.8 1579.9 L1681.7 1581.8 M1501.3 1910.6 C1513.3 1912.1 1549.4 1915.5 1576.4 1920.0 C1603.5 1924.5 1647.4 1935.2 1670.4 1938.8 C1693.4 1942.4 1712.1 1941.9 1720.0 1942.5 M2024.4 1459.6 C2035.8 1458.1 2076.6 1447.5 2095.8 1450.2 C2115.0 1452.9 2131.4 1472.9 2144.7 1476.5 C2157.9 1480.2 2173.1 1473.4 2178.5 1472.8 M2180.4 1454.0 C2180.1 1463.0 2180.0 1492.3 2178.5 1510.4 C2177.0 1528.4 2172.2 1557.7 2171.0 1566.7 M2144.7 1476.5 C2141.0 1479.6 2125.7 1488.1 2122.1 1495.3 C2118.5 1502.6 2134.1 1515.9 2122.1 1521.6 C2110.1 1527.4 2059.0 1529.5 2046.9 1531.0 M2084.5 1525.4 L2086.4 1540.4 M1938.0 1555.5 C1945.2 1556.1 1969.8 1559.8 1983.1 1559.2 C1996.3 1558.6 2014.6 1552.9 2020.6 1551.7 M1802.7 1555.5 C1806.3 1557.0 1819.2 1564.6 1825.2 1564.9 C1831.2 1565.2 1837.9 1558.5 1840.3 1557.3 M2022.5 1750.9 L2024.4 1773.4 M1765.1 1889.9 L1776.4 1946.3 M1727.5 1938.8 L1729.4 1957.6 M2325.0 1502.9 L2340.1 1469.0 M1491.3 793.4 C1506.7 798.6 1559.6 814.9 1587.9 825.6 C1616.3 836.4 1652.1 849.8 1668.5 860.5 C1684.8 871.3 1686.1 875.6 1689.9 892.8 C1693.8 909.9 1693.9 952.5 1692.6 967.9 C1691.3 983.4 1686.2 983.8 1681.9 989.4 C1677.6 995.0 1668.3 1000.7 1665.8 1002.8 M1518.1 814.9 C1527.6 820.5 1557.4 840.3 1577.2 849.8 C1596.9 859.2 1628.7 867.9 1641.6 874.0 C1654.5 880.0 1655.1 885.2 1657.7 887.4 M1515.4 860.5 C1519.3 859.7 1529.7 856.9 1539.6 855.2 C1549.5 853.4 1571.2 850.7 1577.2 849.8 M1703.4 887.4 C1702.9 908.0 1703.7 989.2 1700.7 1016.2 C1697.7 1043.3 1692.7 1046.2 1684.6 1056.5 C1676.4 1066.8 1658.7 1072.9 1649.7 1080.7 C1640.6 1088.4 1637.2 1099.0 1628.2 1104.8 C1619.2 1110.6 1608.3 1115.8 1593.3 1116.9 C1578.3 1118.0 1548.0 1114.8 1534.2 1111.5 C1520.5 1108.3 1511.7 1102.6 1507.4 1096.8 C1503.1 1091.0 1513.0 1079.8 1507.4 1075.3 C1501.8 1070.8 1478.1 1069.7 1472.5 1068.6 M1400.0 806.8 C1402.6 806.0 1403.2 804.5 1416.1 801.5 C1429.0 798.5 1470.2 790.2 1480.5 788.1 M1402.7 812.2 C1402.3 847.4 1391.0 992.0 1400.0 1032.3 C1409.0 1072.7 1449.6 1059.4 1459.1 1064.6 M1743.6 1061.9 L1722.1 1129.0 M1679.2 843.1 C1683.1 845.0 1694.8 852.6 1703.4 855.2 C1711.9 857.7 1728.2 858.6 1732.9 859.2 M1583.4 1702.2 L1690.5 1718.8 M1631.4 1569.2 L1633.2 1591.4 M1635.1 1569.2 C1638.0 1571.0 1646.2 1578.5 1653.5 1580.3 C1660.9 1582.1 1676.8 1580.3 1681.2 1580.3 M1679.4 1440.0 C1688.8 1441.8 1724.3 1451.1 1738.5 1451.1 C1752.6 1451.1 1763.3 1441.8 1768.0 1440.0 M1801.2 1556.3 C1804.8 1558.1 1816.6 1567.7 1823.4 1567.4 C1830.2 1567.1 1840.4 1556.5 1843.7 1554.5 M1937.8 1555.6 C1944.3 1556.2 1965.5 1560.0 1978.5 1559.3 C1991.5 1558.5 2012.6 1552.1 2019.1 1550.8 M1764.3 1888.6 C1766.1 1896.0 1772.7 1924.4 1775.4 1934.8 C1778.0 1945.1 1780.0 1950.3 1780.9 1953.2 M1498.5 1912.6 C1513.2 1913.8 1563.0 1915.9 1590.8 1920.0 C1618.5 1924.1 1650.7 1934.0 1672.0 1938.5 C1693.3 1942.9 1713.6 1939.4 1723.7 1947.7 C1733.7 1956.0 1733.0 1983.4 1734.8 1990.2 M2020.9 1753.8 L2024.6 1774.2" fill="none" stroke="#a3b3a6" stroke-width="2.200" stroke-dasharray="4 5"/>
<g fill="none" stroke-linecap="round" stroke-linejoin="round">
<path d="M1492.6 911.5 C1493.0 913.9 1492.9 923.3 1495.3 926.3 C1497.7 929.3 1504.2 931.2 1507.4 930.3 C1510.6 929.5 1515.0 924.4 1515.4 920.9 C1515.9 917.5 1512.9 911.2 1510.1 908.9 C1507.3 906.5 1500.8 905.7 1498.0 906.2 C1495.2 906.6 1493.5 910.7 1492.6 911.5" stroke="#c9bdbb" stroke-width="8.2"/>
<path d="M1550.2 1534.2 L1579.7 1535.3" stroke="#c9bdbb" stroke-width="9.1"/>
<path d="M1485.9 852.5 C1489.3 853.8 1503.5 857.5 1507.4 860.5 C1511.2 863.5 1511.4 864.4 1510.1 871.3 C1508.8 878.1 1501.0 898.3 1499.3 903.5 M1655.0 780.0 L1652.3 798.8" stroke="#c9bdbb" stroke-width="9.2"/>
<path d="M1736.2 578.9 C1737.7 581.4 1742.5 591.9 1745.5 594.4 C1748.5 596.8 1753.3 594.4 1754.8 594.4 M2029.5 614.4 L2038.8 617.5" stroke="#c9bdbb" stroke-width="9.4"/>
<path d="M1485.9 1032.3 C1491.5 1035.4 1513.5 1043.4 1520.8 1051.1 C1528.1 1058.9 1527.7 1072.9 1531.5 1080.7 C1535.4 1088.4 1539.4 1095.2 1545.0 1099.5 C1550.6 1103.8 1558.7 1107.1 1566.4 1107.5 C1574.2 1107.9 1586.0 1106.0 1593.3 1102.1 C1600.6 1098.3 1606.1 1091.9 1612.1 1083.4 C1618.1 1074.8 1624.0 1060.5 1630.9 1048.5 C1637.7 1036.4 1651.2 1014.6 1655.0 1008.2" stroke="#c9bdbb" stroke-width="9.6"/>
<path d="M1874.1 1417.3 C1875.3 1421.2 1877.4 1437.9 1881.6 1441.8 C1885.8 1445.7 1897.4 1441.8 1900.4 1441.8 M1953.0 1462.4 L2013.1 1462.4 M1702.3 523.4 C1709.7 523.6 1737.7 521.4 1748.6 524.9 C1759.5 528.4 1766.7 541.8 1770.2 545.0 M1671.4 616.0 L1680.7 625.2 L1723.9 617.5 M1456.2 1604.3 C1457.4 1607.9 1460.1 1621.2 1463.7 1626.9 C1467.3 1632.6 1476.3 1637.9 1478.7 1640.0" stroke="#c9bdbb" stroke-width="10.0"/>
<path d="M1488.6 908.9 C1515.2 923.5 1621.5 982.1 1655.0 1000.1 C1688.5 1018.2 1681.7 1014.7 1698.0 1021.6 C1714.3 1028.5 1742.9 1037.5 1757.0 1043.1 C1771.2 1048.7 1781.9 1054.4 1786.6 1056.5" stroke="#c9bdbb" stroke-width="10.2"/>
<path d="M1343.4 720.2 L1369.8 718.3 M1407.3 720.2 L1467.5 739.0 M1441.2 710.8 L1433.6 729.6 M1659.1 774.7 L1651.6 799.1 M1704.2 522.9 L1720.0 523.6 M2050.7 445.8 L2103.3 445.8 M2058.2 445.8 L2058.2 462.7 M2103.3 445.8 L2103.3 462.7 M2107.1 447.7 C2111.6 452.5 2130.8 467.9 2135.3 477.8 C2139.8 487.7 2135.3 504.6 2135.3 509.7 M1885.4 573.6 L1945.5 575.5 M2039.4 676.9 L2103.3 680.0 M2234.8 782.2 L2287.5 787.8 M2279.9 765.3 L2283.7 785.9 M2223.6 834.8 L2223.6 876.1 M2509.2 785.9 L2540.0 782.2 M1441.2 1304.6 C1444.8 1305.5 1460.7 1307.2 1463.7 1310.2 C1466.7 1313.2 1463.6 1321.3 1459.9 1323.4 C1456.3 1325.5 1444.2 1323.4 1441.2 1323.4 M1595.2 1361.0 L1591.5 1383.5 M1546.4 1379.8 C1557.2 1382.8 1600.8 1397.3 1614.0 1398.5 C1627.3 1399.7 1626.7 1389.1 1629.1 1387.3 M1866.6 1229.4 L1877.8 1248.2 L1896.6 1270.8 L1926.7 1259.5 L1945.5 1274.5 L1960.5 1276.4 M1720.0 1423.0 L1731.3 1423.0 M1731.3 1376.0 L1750.1 1391.0 M1215.7 1670.1 L1185.6 1758.4 M2246.1 2013.9 C2252.1 2012.7 2264.5 2006.4 2283.7 2006.4 C2302.9 2006.4 2353.2 2012.7 2366.4 2013.9 M2306.3 1454.0 L2325.0 1502.9 M2497.9 2006.4 L2540.0 2013.9" stroke="#c9bdbb" stroke-width="10.7"/>
<path d="M1682.2 687.0 C1686.9 688.0 1704.9 688.7 1711.5 693.1 C1718.2 697.6 1723.1 707.8 1723.9 714.8 C1724.6 721.7 1717.2 727.5 1716.2 736.4 C1715.2 745.3 1717.5 764.9 1717.7 770.3" stroke="#c9bdbb" stroke-width="11.2"/>
<path d="M1491.1 1454.8 C1498.2 1456.5 1524.8 1459.3 1535.4 1465.8 C1546.0 1472.3 1549.3 1490.4 1557.5 1495.4 C1565.8 1500.4 1582.4 1496.9 1587.1 1497.2 M1550.2 1499.1 L1544.6 1561.8 M1690.5 1567.4 L1690.5 1598.8 M1952.6 1462.2 L2011.7 1462.2 M1860.3 1561.8 L1856.6 1578.5 M1768.0 1868.3 L1816.0 1864.6 M1823.4 1831.4 L1827.1 1868.3 L1849.2 1866.5 M1952.6 1908.9 C1959.7 1906.6 1979.2 1897.1 1996.9 1894.2 C2014.6 1891.2 2052.8 1891.1 2063.4 1890.5" stroke="#c9bdbb" stroke-width="11.3"/>
<path d="M1080.4 383.8 L1102.9 440.2 M1480.6 853.6 C1484.5 855.4 1502.3 859.4 1505.0 864.8 C1507.7 870.3 1500.5 880.2 1497.5 887.4 C1494.5 894.6 1488.1 906.3 1486.3 909.9 M1795.2 357.5 L1800.8 398.9 M1720.0 357.5 L1723.8 406.4 M1422.4 928.8 C1423.6 939.0 1426.9 981.3 1429.9 992.7 C1432.9 1004.1 1438.1 1000.2 1441.2 1000.2 C1444.2 1000.2 1447.5 993.9 1448.7 992.7 M980.8 1124.2 C981.7 1130.8 981.0 1153.5 986.4 1165.5 C991.8 1177.6 1010.1 1194.0 1014.6 1199.4 M1493.8 1453.0 L1538.9 1469.9 M1720.0 955.1 C1723.0 955.7 1734.6 955.8 1738.8 958.9 C1743.0 961.9 1737.9 970.0 1746.3 973.9 C1754.7 977.8 1780.6 977.3 1791.4 983.3 C1802.2 989.3 1807.3 1006.7 1814.0 1011.5 C1820.6 1016.3 1829.7 1013.0 1832.7 1013.3 M1761.3 910.0 L1759.5 981.4 M1814.0 1221.9 C1809.1 1226.1 1791.1 1239.8 1783.9 1248.2 C1776.7 1256.6 1771.3 1270.3 1768.9 1274.5 M1121.7 1538.6 L1208.2 1561.1 M1157.4 1617.5 L1196.9 1626.9 M1290.8 1709.5 C1304.7 1712.9 1358.6 1727.5 1377.3 1730.2 C1395.9 1732.9 1402.5 1727.1 1407.3 1726.5 M2509.2 1600.6 C2508.0 1595.8 2507.7 1575.9 2501.7 1570.5 C2495.7 1565.1 2479.4 1571.6 2471.6 1566.7 C2463.8 1561.9 2457.6 1545.5 2452.8 1540.4 C2448.0 1535.3 2443.3 1535.7 2441.5 1534.8 M2505.4 1570.5 L2509.2 1544.2 M2261.2 1638.1 L2249.9 1705.8 M2317.5 1641.9 L2317.5 1679.5 L2328.8 1694.5 L2325.0 1720.8 L2336.3 1720.8 L2351.3 1638.1 M2317.5 1720.8 L2313.8 1750.9" stroke="#c9bdbb" stroke-width="11.5"/>
<path d="M1607.4 1454.8 L1672.0 1488.0 M1843.7 1552.6 C1846.9 1553.8 1851.3 1556.5 1864.0 1560.0 C1876.7 1563.5 1913.6 1572.4 1923.1 1574.8 M1576.0 1857.2 L1563.1 1897.8 M1542.8 1796.3 L1664.6 1825.8 M1760.6 1827.7 L1764.3 1886.8 L1708.9 1870.2 M1889.8 1816.6 L1904.6 1875.7" stroke="#c9bdbb" stroke-width="12.1"/>
<path d="M1332.2 383.8 C1340.6 406.7 1375.8 502.6 1384.8 526.6 C1393.8 550.7 1387.9 532.9 1388.5 534.1 M1384.8 526.6 L1411.1 517.2 M1287.1 568.0 L1341.6 545.4 L1362.2 586.8 M1394.2 564.2 L1382.9 680.7 M1054.1 466.5 C1057.7 474.9 1071.5 505.3 1076.6 519.1 C1081.7 532.9 1085.4 543.9 1086.0 552.9 C1086.6 562.0 1084.9 568.9 1080.4 575.5 C1075.9 582.1 1065.1 589.9 1057.8 594.3 C1050.6 598.6 1047.3 601.2 1035.3 602.5 C1023.3 603.9 991.1 602.5 982.7 602.5 M1080.4 579.2 C1084.0 581.6 1087.9 591.0 1102.9 594.3 C1118.0 597.6 1162.9 599.0 1174.3 599.9 M1146.2 575.5 L1163.1 618.7 M922.5 560.4 C923.5 567.7 918.6 598.8 928.2 605.5 C937.8 612.3 974.0 603.0 982.7 602.5 M1012.7 684.5 C1006.7 708.5 984.8 805.9 975.2 834.8 C965.5 863.6 956.2 860.0 952.6 864.8 M1399.8 819.8 C1407.0 821.6 1433.5 826.8 1444.9 831.0 C1456.3 835.2 1471.8 833.4 1471.2 846.1 C1470.6 858.7 1446.0 899.7 1441.2 909.9 M2050.7 357.5 L2050.7 425.2 M1313.4 1050.9 C1318.8 1051.5 1340.0 1047.2 1347.2 1054.7 C1354.4 1062.2 1350.7 1088.3 1358.5 1097.9 C1366.3 1107.5 1388.8 1108.8 1396.1 1114.8 C1403.3 1120.8 1402.4 1132.2 1403.6 1135.5 M1309.6 1221.9 C1316.8 1222.8 1341.5 1230.6 1354.7 1227.6 C1367.9 1224.5 1386.3 1207.0 1392.3 1203.1 M1356.6 1229.4 C1355.4 1235.4 1349.4 1260.4 1349.1 1267.0 C1348.8 1273.6 1340.0 1268.7 1354.7 1270.8 C1369.5 1272.9 1426.7 1279.6 1441.2 1280.2 C1455.6 1280.8 1444.3 1275.4 1444.9 1274.5 M2396.4 1154.3 C2410.9 1149.5 2471.0 1129.6 2486.6 1124.2 C2502.3 1118.8 2494.2 1125.9 2494.2 1120.4 C2494.2 1115.0 2487.8 1095.2 2486.6 1090.4 M2201.0 1150.5 L2208.5 1199.4 M2208.5 1221.9 C2212.2 1238.2 2225.1 1304.1 2231.1 1323.4 C2237.1 1342.6 2231.7 1339.2 2246.1 1342.2 C2260.6 1345.2 2309.3 1342.2 2321.3 1342.2 M1320.9 1905.0 C1322.7 1891.7 1325.6 1840.3 1332.2 1822.3 C1338.8 1804.2 1348.4 1796.4 1362.2 1792.2 C1376.1 1788.0 1409.6 1795.4 1418.6 1796.0 M900.0 1946.3 C906.0 1948.1 911.7 1955.2 937.6 1957.6 C963.4 1960.0 1041.8 1960.7 1061.6 1961.3 M922.5 1717.1 L915.0 1747.1 M933.8 1743.4 C943.4 1745.2 983.7 1748.6 994.0 1754.6 C1004.2 1760.7 997.1 1776.7 997.7 1780.9 M1825.2 1987.6 L1930.4 1987.6 M1814.0 1972.6 L1829.0 2013.9" stroke="#c9bdbb" stroke-width="12.2"/>
<path d="M1717.7 776.5 C1718.7 780.5 1718.9 793.3 1723.9 801.2 C1728.8 809.1 1742.7 814.5 1748.6 825.9 C1754.5 837.3 1758.2 858.4 1760.9 872.2 C1763.7 886.0 1764.8 905.9 1765.6 912.3" stroke="#c9bdbb" stroke-width="12.5"/>
<path d="M1587.1 1436.3 L1607.4 1454.8 L1646.2 1436.3 M1697.8 1735.4 L1753.2 1750.2 L1755.1 1816.6 M1544.6 1768.6 C1542.5 1778.7 1534.4 1819.0 1531.7 1831.4 C1529.0 1843.8 1528.6 1843.8 1528.0 1846.2 M1472.6 1822.2 C1482.7 1824.5 1505.8 1829.5 1535.4 1836.9 C1564.9 1844.3 1637.7 1863.3 1657.2 1868.3 M1945.2 1875.7 L1947.1 1997.5 M1494.8 1838.8 C1494.2 1851.8 1491.1 1894.6 1491.1 1920.0 C1491.1 1945.4 1494.2 1985.1 1494.8 1997.5" stroke="#c9bdbb" stroke-width="12.8"/>
<path d="M1163.1 357.5 C1165.8 364.1 1199.2 385.0 1180.0 398.9 C1160.7 412.7 1064.8 436.7 1042.8 444.0 M1148.0 436.4 C1160.7 464.1 1212.5 580.1 1226.9 609.3 C1241.4 638.5 1227.4 618.7 1238.2 618.7 C1249.0 618.7 1285.6 610.8 1294.6 609.3 M1885.4 534.1 C1901.0 535.9 1957.8 539.4 1983.1 545.4 C2008.3 551.4 2019.1 563.9 2043.2 571.7 C2067.2 579.5 2111.7 588.9 2133.4 594.3 C2155.0 599.7 2170.4 596.5 2178.5 605.5 C2186.6 614.6 2182.3 631.4 2184.1 650.6 C2185.9 669.9 2191.9 701.8 2189.8 725.8 C2187.6 749.9 2175.2 776.9 2171.0 801.0 C2166.8 825.0 2164.6 864.1 2163.4 876.1 M2000.0 575.5 C2006.9 579.1 2030.3 593.5 2043.2 598.0 C2056.1 602.5 2074.8 602.8 2080.8 603.7 M2043.2 598.0 C2042.0 609.5 2037.8 649.0 2035.7 669.4 C2033.6 689.9 2030.3 704.8 2030.0 725.8 C2029.7 746.8 2039.5 783.5 2033.8 801.0 C2028.1 818.4 1999.7 817.3 1994.3 834.8 C1988.9 852.2 1999.1 897.9 2000.0 909.9 M1366.0 1338.4 C1374.4 1340.5 1399.4 1351.6 1418.6 1351.6 C1437.8 1351.6 1475.4 1340.5 1486.3 1338.4 M1418.6 1353.4 C1416.8 1360.7 1410.3 1379.9 1407.3 1398.5 C1404.3 1417.2 1401.0 1458.5 1399.8 1469.9 M1572.7 1347.8 C1581.1 1350.5 1601.7 1357.2 1625.3 1364.7 C1648.9 1372.2 1704.8 1390.0 1720.0 1394.8 M1776.4 1060.3 C1771.0 1069.9 1751.6 1106.0 1742.5 1120.4 C1733.5 1134.9 1723.6 1145.7 1720.0 1150.5 M1819.6 1221.9 C1839.7 1221.9 1910.3 1221.6 1945.5 1221.9 C1980.7 1222.2 2021.4 1224.7 2039.4 1223.8 C2057.5 1222.9 2034.8 1218.4 2058.2 1216.3 C2081.7 1214.2 2155.9 1213.3 2186.0 1210.6 C2216.1 1207.9 2236.5 1201.2 2246.1 1199.4 M1851.5 1417.3 L1930.4 1391.0 M1720.0 1451.2 C1726.6 1448.7 1741.5 1439.7 1761.3 1436.1 C1781.2 1432.5 1830.8 1429.8 1844.0 1428.6 M2238.6 1135.5 C2239.8 1145.7 2243.1 1187.3 2246.1 1199.4 C2249.1 1211.4 2245.4 1187.8 2257.4 1210.6 C2269.4 1233.5 2308.7 1313.3 2321.3 1342.2 C2333.9 1371.0 2333.9 1383.2 2336.3 1391.0 M2189.8 1210.6 C2192.8 1208.8 2199.5 1201.2 2208.5 1199.4 C2217.6 1197.6 2240.1 1199.4 2246.1 1199.4 M2216.1 1458.7 L2283.7 1469.9 M1031.5 1844.8 L1001.5 1935.0 L1020.3 1942.5 L1005.2 2013.9 M2452.8 1630.6 L2462.2 1762.2 M2110.8 1908.7 L2219.8 1929.4 M2373.9 1863.6 L2467.8 1873.0" stroke="#c9bdbb" stroke-width="13.0"/>
<path d="M1532.5 724.0 C1543.8 710.2 1581.3 655.4 1603.5 637.6 C1625.7 619.8 1650.2 622.8 1671.4 612.9 C1692.6 603.0 1717.5 586.7 1736.2 575.8 C1755.0 565.0 1772.9 552.1 1788.7 545.0 C1804.5 537.8 1820.7 533.5 1835.0 531.1 C1849.4 528.6 1871.3 529.8 1878.2 529.5" stroke="#c9bdbb" stroke-width="13.1"/>
<path d="M1587.1 1552.6 C1598.3 1554.4 1636.6 1561.3 1657.2 1563.7 C1677.9 1566.1 1706.9 1566.8 1716.3 1567.4 M2009.8 1428.9 C2011.6 1436.6 2018.9 1451.5 2020.9 1476.9 C2023.0 1502.3 2022.6 1544.0 2022.8 1587.7 C2022.9 1631.4 2022.1 1724.2 2022.0 1750.2 M1830.8 1683.7 C1829.6 1686.6 1826.9 1696.2 1823.4 1702.2 C1819.8 1708.1 1811.0 1703.5 1808.6 1720.6 C1806.3 1737.7 1808.6 1795.1 1808.6 1809.2" stroke="#c9bdbb" stroke-width="13.5"/>
<path d="M2178.5 357.5 C2174.9 362.3 2160.7 376.8 2155.9 387.6 C2151.1 398.4 2149.6 419.1 2148.4 425.2 M2276.2 357.5 C2275.9 363.5 2276.1 384.3 2274.3 395.1 C2272.5 405.9 2266.4 420.4 2264.9 425.2 M1720.0 770.9 C1729.0 771.5 1756.5 770.4 1776.4 774.7 C1796.2 778.9 1833.2 793.6 1844.0 797.2 M1619.7 1190.0 C1620.0 1199.3 1622.4 1233.5 1621.5 1248.2 C1620.6 1263.0 1618.2 1273.6 1614.0 1282.0 C1609.8 1290.5 1604.9 1297.2 1595.2 1300.8 C1585.6 1304.4 1560.5 1304.0 1553.9 1304.6 M1533.2 1229.4 L1617.8 1248.2 M1720.0 1030.3 C1729.0 1034.5 1758.3 1052.7 1776.4 1056.6 C1794.4 1060.5 1814.7 1053.2 1832.7 1054.7 C1850.8 1056.2 1874.7 1062.7 1889.1 1066.0 C1903.5 1069.3 1917.5 1073.8 1922.9 1075.4 M1720.0 1169.3 C1733.8 1174.1 1791.4 1191.6 1806.4 1199.4 C1821.5 1207.2 1812.7 1215.2 1814.0 1218.2 M1847.8 972.0 C1840.9 1001.2 1809.2 1114.8 1804.6 1154.3 C1799.9 1193.8 1812.9 1203.4 1818.5 1218.9 C1824.1 1234.4 1834.5 1233.9 1839.5 1251.2 C1844.5 1268.5 1848.0 1298.8 1849.7 1327.1 C1851.3 1355.5 1851.2 1405.8 1849.7 1428.6 C1848.1 1451.5 1841.8 1463.3 1840.3 1469.9 M1849.7 1334.7 C1862.6 1343.1 1907.9 1375.8 1930.4 1387.3 C1953.0 1398.7 1977.3 1392.8 1990.6 1406.1 C2003.8 1419.3 2009.5 1459.7 2013.1 1469.9 M1054.1 1499.1 L1027.8 1596.8 L1061.6 1608.1 L1042.8 1690.8 L1057.8 1717.1 L1024.0 1829.8 M1290.8 1563.0 L1281.4 1641.9 M2171.0 1600.6 C2177.0 1603.6 2193.5 1614.8 2208.5 1619.4 C2223.6 1623.9 2225.8 1627.5 2264.9 1628.7 C2304.0 1630.0 2418.5 1628.4 2452.8 1626.9 C2487.1 1625.4 2470.1 1623.6 2479.1 1619.4 C2488.1 1615.1 2499.4 1604.2 2509.2 1600.6 C2518.9 1597.0 2535.1 1597.4 2540.0 1596.8 M2212.3 1769.7 C2214.7 1785.3 2226.7 1828.3 2227.3 1867.4 C2227.9 1906.5 2217.9 1990.5 2216.1 2013.9 M2362.6 1765.9 C2363.8 1782.2 2369.5 1827.7 2370.1 1867.4 C2370.7 1907.1 2367.0 1990.5 2366.4 2013.9" stroke="#c9bdbb" stroke-width="13.7"/>
<path d="M1607.4 1454.8 C1604.7 1461.3 1594.3 1480.0 1590.8 1495.4 C1587.2 1510.7 1586.3 1533.6 1585.2 1550.8 C1584.2 1567.9 1584.1 1587.1 1584.1 1602.5 C1584.1 1617.8 1586.5 1631.4 1585.2 1646.8 C1583.9 1662.1 1582.5 1679.0 1576.0 1698.5 C1569.5 1718.0 1549.6 1757.4 1544.6 1768.6 M1409.8 1599.5 C1437.6 1599.4 1539.1 1598.0 1583.4 1598.8 C1627.7 1599.5 1664.3 1601.9 1686.8 1604.3 C1709.2 1606.7 1717.8 1612.1 1723.7 1613.5 M1845.5 1428.9 L1834.5 1504.6 L1804.9 1543.4 L1745.8 1608.0 L1727.4 1615.4 M1834.5 1504.6 C1836.8 1506.1 1833.3 1511.5 1849.2 1513.8 C1865.2 1516.2 1907.0 1518.5 1934.2 1519.4 C1961.3 1520.3 2005.5 1519.4 2019.1 1519.4 M1934.2 1521.2 C1933.0 1529.5 1928.2 1555.2 1926.8 1572.9 C1925.3 1590.6 1925.8 1615.5 1924.9 1632.0 C1924.0 1648.5 1924.5 1665.7 1921.2 1676.3 C1918.0 1686.9 1909.6 1691.4 1904.6 1698.5 C1899.6 1705.6 1894.0 1704.1 1889.8 1720.6 C1885.7 1737.2 1880.5 1788.8 1878.8 1801.8 M1720.0 1646.8 C1737.7 1652.1 1802.4 1671.7 1830.8 1680.0 C1859.1 1688.3 1867.1 1692.0 1897.2 1698.5 C1927.4 1705.0 1999.6 1717.1 2019.1 1720.6" stroke="#c9bdbb" stroke-width="14.3"/>
<path d="M1324.7 707.0 L1181.9 703.3 M1437.4 357.5 C1440.4 365.3 1450.8 397.4 1456.2 406.4 C1461.6 415.4 1429.0 412.7 1471.2 413.9 C1513.4 415.1 1680.2 413.9 1720.0 413.9 M2238.6 444.0 C2244.6 441.5 2260.0 432.5 2276.2 428.9 C2292.4 425.3 2308.8 421.1 2340.1 421.4 C2371.3 421.7 2445.7 428.7 2471.6 430.8 C2497.5 432.9 2496.9 434.0 2501.7 434.6 M1720.0 408.2 L1862.8 395.1 M1384.8 1169.3 C1396.2 1172.6 1419.5 1187.0 1456.2 1190.0 C1492.9 1193.0 1571.8 1191.4 1614.0 1188.1 C1656.2 1184.8 1703.0 1172.3 1720.0 1169.3 M990.2 1300.8 L1003.3 1297.1 M1317.1 910.0 C1316.5 932.2 1314.9 1013.6 1313.4 1049.0 C1311.9 1084.5 1308.6 1118.5 1307.7 1131.7 M1606.5 1454.9 L1720.0 1391.0 M2016.9 921.3 C2018.1 926.7 2026.2 945.5 2024.4 955.1 C2022.6 964.7 2017.0 971.2 2005.6 981.4 C1994.2 991.6 1965.0 1007.6 1953.0 1019.0 C1941.0 1030.4 1934.7 1043.2 1930.4 1052.8 C1926.2 1062.4 1924.3 1070.7 1926.7 1079.1 C1929.1 1087.5 1933.5 1097.6 1945.5 1105.4 C1957.5 1113.2 1983.8 1120.7 2001.9 1128.0 C2019.9 1135.2 2040.2 1145.7 2058.2 1150.5 C2076.3 1155.3 2096.6 1159.2 2114.6 1158.0 C2132.6 1156.8 2150.5 1147.8 2171.0 1143.0 C2191.4 1138.2 2218.3 1131.3 2242.4 1128.0 C2266.4 1124.7 2305.0 1124.4 2321.3 1122.3 C2337.5 1120.2 2340.2 1116.0 2343.8 1114.8 M1817.7 1229.4 C1805.7 1249.3 1758.2 1327.6 1742.5 1353.4 C1726.9 1379.3 1723.6 1385.0 1720.0 1391.0 M1226.9 1454.0 C1225.1 1468.4 1219.9 1515.3 1215.7 1544.2 C1211.5 1573.1 1203.6 1615.1 1200.6 1634.4 C1197.6 1653.6 1206.5 1643.4 1196.9 1664.4 C1187.3 1685.5 1156.1 1736.5 1140.5 1765.9 C1124.9 1795.4 1105.8 1835.4 1099.2 1848.6 M1399.8 1454.0 C1400.4 1472.0 1402.4 1540.3 1403.6 1566.7 C1404.8 1593.2 1406.7 1610.9 1407.3 1619.4 M1420.5 1799.7 C1426.2 1801.5 1445.7 1805.6 1456.2 1811.0 C1466.7 1816.4 1471.8 1840.8 1486.3 1833.6 C1500.7 1826.3 1536.8 1776.7 1546.4 1765.9" stroke="#c9bdbb" stroke-width="14.5"/>
<path d="M1407.3 1619.4 C1408.5 1636.2 1412.7 1695.7 1414.8 1724.6 C1417.0 1753.4 1425.3 1770.9 1420.5 1799.7 C1415.7 1828.6 1395.9 1870.7 1384.8 1905.0 C1373.7 1939.2 1356.4 1996.5 1351.0 2013.9" stroke="#c9bdbb" stroke-width="15.2"/>
<path d="M1775.4 1428.9 C1771.8 1437.8 1759.7 1464.8 1753.2 1484.3 C1746.7 1503.8 1739.5 1530.1 1734.8 1550.8 C1730.0 1571.4 1726.6 1598.2 1723.7 1613.5 C1720.7 1628.9 1720.4 1627.9 1716.3 1646.8 C1712.2 1665.7 1704.3 1705.7 1697.8 1731.7 C1691.3 1757.7 1681.0 1793.3 1675.7 1809.2 C1670.4 1825.2 1669.9 1810.7 1664.6 1831.4 C1659.3 1852.1 1647.5 1911.3 1642.5 1938.5 C1637.4 1965.6 1634.7 1991.2 1633.2 2001.2" stroke="#c9bdbb" stroke-width="15.8"/>
<path d="M900.0 474.0 C915.0 474.6 968.7 479.6 994.0 477.8 C1019.2 476.0 1032.0 470.3 1057.8 462.7 C1083.7 455.2 1114.7 444.3 1155.5 430.8 C1196.4 417.3 1276.1 389.9 1313.4 378.2 C1350.7 366.5 1376.5 360.8 1388.5 357.5 M1332.2 680.7 C1331.0 693.9 1326.5 726.7 1324.7 763.4 C1322.9 800.1 1321.5 886.5 1320.9 909.9 M975.2 910.0 C981.8 916.0 1003.3 933.1 1016.5 947.6 C1029.7 962.0 1051.2 991.8 1057.8 1000.2" stroke="#c9bdbb" stroke-width="16.0"/>
<path d="M900.0 1019.0 L986.4 1105.4 L1125.5 1199.4 L1279.6 1285.8 M1279.6 1285.8 C1276.6 1297.8 1266.8 1336.9 1260.8 1361.0 C1254.8 1385.0 1246.2 1418.7 1242.0 1436.1 C1237.8 1453.6 1235.7 1464.5 1234.5 1469.9 M1001.5 1297.1 C1021.3 1307.3 1086.4 1341.7 1125.5 1361.0 C1164.6 1380.2 1226.5 1408.3 1245.7 1417.3 M900.0 1436.1 L994.0 1469.9 M937.6 1461.5 C933.4 1472.3 917.3 1509.3 911.3 1529.2 C905.3 1549.0 901.8 1576.5 900.0 1585.5" stroke="#c9bdbb" stroke-width="16.7"/>
<path d="M1889.1 430.8 C1887.9 433.5 1883.4 424.6 1881.6 447.7 C1879.8 470.9 1879.0 538.2 1877.8 575.5 C1876.6 612.8 1877.1 655.5 1874.1 680.7 C1871.1 706.0 1863.9 717.1 1859.0 733.3 C1854.2 749.6 1848.2 765.3 1844.0 782.2 C1839.8 799.0 1835.7 818.1 1832.7 838.5 C1829.7 859.0 1826.4 898.5 1825.2 909.9 M945.1 910.0 C961.9 923.8 1009.4 968.2 1050.3 996.4 C1091.2 1024.7 1159.8 1064.4 1200.6 1086.6 C1241.5 1108.9 1278.8 1124.1 1305.9 1135.5 C1332.9 1146.9 1356.5 1152.0 1369.8 1158.0 C1383.0 1164.0 1370.5 1149.6 1388.5 1173.1 C1406.6 1196.5 1464.5 1275.7 1482.5 1304.6 C1500.5 1333.5 1491.1 1341.4 1501.3 1353.4 C1511.5 1365.5 1529.5 1363.5 1546.4 1379.8 C1563.2 1396.0 1595.7 1440.5 1606.5 1454.9 C1617.3 1469.3 1612.8 1467.5 1614.0 1469.9" stroke="#c9bdbb" stroke-width="17.5"/>
<path d="M900.0 834.8 L990.2 909.9 M2355.1 688.2 C2353.3 691.2 2351.6 692.0 2343.8 707.0 C2336.0 722.0 2315.9 761.1 2306.3 782.2 C2296.6 803.2 2288.5 818.1 2283.7 838.5 C2278.9 859.0 2277.4 898.5 2276.2 909.9 M2058.2 909.9 C2064.2 906.9 2075.4 896.0 2095.8 891.2 C2116.2 886.3 2158.9 881.7 2186.0 879.9 C2213.1 878.1 2245.7 880.5 2264.9 879.9 C2284.2 879.3 2262.2 876.1 2306.3 876.1 C2350.3 876.1 2502.6 879.3 2540.0 879.9 M990.2 1300.8 L1080.4 1469.9 M1844.0 972.0 C1872.3 963.9 1986.4 931.2 2020.6 921.3 C2054.9 911.4 2052.2 911.8 2058.2 910.0 M2471.6 1293.3 L2540.0 1323.4 M1061.6 1439.0 C1064.0 1445.0 1070.6 1465.7 1076.6 1476.5 C1082.6 1487.4 1095.6 1501.8 1099.2 1506.6 M1388.5 2013.9 C1406.6 2010.9 1448.3 1996.4 1501.3 1995.2 C1554.3 1994.0 1685.0 2004.6 1720.0 2006.4" stroke="#c9bdbb" stroke-width="18.2"/>
<path d="M1862.8 357.5 C1863.4 363.5 1863.0 384.3 1866.6 395.1 C1870.2 405.9 1877.5 418.8 1885.4 425.2 C1893.2 431.5 1890.8 434.6 1915.4 434.6 C1940.1 434.6 1995.5 425.2 2039.4 425.2 C2083.3 425.2 2157.9 430.9 2189.8 434.6 C2221.6 438.2 2224.8 440.8 2238.6 447.7 C2252.4 454.6 2264.8 463.3 2276.2 477.8 C2287.6 492.2 2300.4 513.2 2310.0 537.9 C2319.6 562.6 2329.1 607.8 2336.3 631.9 C2343.5 655.9 2351.5 678.0 2355.1 688.2 C2358.7 698.4 2358.3 694.5 2358.9 695.7" stroke="#c9bdbb" stroke-width="19.0"/>
<path d="M1544.6 1768.6 C1563.8 1776.3 1630.1 1807.8 1664.6 1816.6 C1699.2 1825.5 1725.2 1825.2 1760.6 1824.0 C1796.1 1822.8 1837.7 1817.5 1886.2 1809.2 C1934.6 1801.0 2031.5 1780.0 2063.4 1772.3 C2095.3 1764.6 2082.0 1763.0 2085.5 1761.2 M2085.5 1790.8 C2074.3 1798.4 2038.4 1825.2 2015.4 1838.8 C1992.3 1852.4 1959.3 1866.8 1941.5 1875.7 C1923.8 1884.6 1925.3 1882.3 1904.6 1894.2 C1883.9 1906.0 1842.4 1933.0 1812.3 1949.5 C1782.2 1966.1 1731.7 1989.9 1716.3 1997.5" stroke="#c9bdbb" stroke-width="19.4"/>
<path d="M1332.2 673.2 C1359.2 681.0 1439.2 705.8 1501.3 722.0 C1563.3 738.3 1685.0 766.2 1720.0 774.7" stroke="#c9bdbb" stroke-width="19.7"/>
<path d="M2528.0 357.5 C2512.9 392.4 2459.9 520.2 2434.0 575.5 C2408.2 630.8 2384.4 670.2 2366.4 703.3 C2348.3 736.3 2333.3 759.3 2321.3 782.2 C2309.3 805.0 2297.2 831.0 2291.2 846.1 C2285.2 861.1 2284.9 871.3 2283.7 876.1 M900.0 1180.6 C907.8 1188.4 936.2 1215.0 948.9 1229.4 C961.5 1243.9 972.3 1259.3 978.9 1270.8 C985.5 1282.2 990.8 1286.4 990.2 1300.8 C989.6 1315.3 986.0 1333.9 975.2 1361.0 C964.3 1388.0 931.0 1452.5 922.5 1469.9 M900.0 1454.0 C915.0 1457.6 965.1 1469.3 994.0 1476.5 C1022.8 1483.8 1061.7 1492.5 1080.4 1499.1 C1099.0 1505.7 1088.2 1511.3 1110.4 1517.9 C1132.7 1524.5 1190.0 1533.8 1219.4 1540.4 C1248.9 1547.0 1273.5 1551.4 1294.6 1559.2 C1315.6 1567.0 1334.7 1580.3 1351.0 1589.3 C1367.2 1598.3 1379.2 1600.0 1396.1 1615.6 C1412.9 1631.2 1432.1 1662.9 1456.2 1687.0 C1480.2 1711.0 1531.9 1753.3 1546.4 1765.9" stroke="#c9bdbb" stroke-width="20.5"/>
<path d="M1185.6 357.5 C1200.0 387.6 1256.0 502.1 1275.8 545.4 C1295.6 588.7 1301.2 608.9 1309.6 628.1 C1318.0 647.3 1325.4 659.7 1328.4 665.7" stroke="#c9bdbb" stroke-width="21.2"/>
<path d="M2268.7 910.0 C2269.3 922.0 2266.4 962.3 2272.4 985.2 C2278.4 1008.0 2296.0 1034.8 2306.3 1052.8 C2316.5 1070.8 2329.1 1087.1 2336.3 1097.9 C2343.5 1108.7 2341.7 1110.8 2351.3 1120.4 C2361.0 1130.1 2380.2 1137.6 2396.4 1158.0 C2412.7 1178.5 2440.8 1230.8 2452.8 1248.2 C2464.8 1265.7 2462.6 1263.4 2471.6 1267.0 C2480.6 1270.6 2498.2 1271.4 2509.2 1270.8 C2520.1 1270.2 2535.1 1264.5 2540.0 1263.3 M2114.6 1773.4 C2141.6 1769.8 2238.6 1753.3 2283.7 1750.9 C2328.8 1748.5 2355.4 1754.2 2396.4 1758.4 C2437.5 1762.6 2517.0 1774.2 2540.0 1777.2" stroke="#c9bdbb" stroke-width="22.0"/>
<path d="M900.0 1750.9 C919.8 1762.9 990.3 1807.4 1024.0 1826.0 C1057.7 1844.7 1088.2 1856.0 1110.4 1867.4 C1132.7 1878.8 1151.6 1886.6 1163.1 1897.4 C1174.5 1908.3 1172.8 1922.4 1181.9 1935.0 C1190.9 1947.7 1204.4 1966.1 1219.4 1976.4 C1234.5 1986.6 1248.7 1992.9 1275.8 1998.9 C1302.9 2004.9 1370.5 2011.5 1388.5 2013.9" stroke="#c9bdbb" stroke-width="25.7"/>
<path d="M1317.1 646.9 C1319.5 650.5 1328.0 664.6 1332.2 669.4 C1336.4 674.2 1341.6 675.7 1343.4 676.9 M2332.6 1105.4 L2358.9 1131.7" stroke="#c9bdbb" stroke-width="29.5"/>
<path d="M1492.6 911.5 C1493.0 913.9 1492.9 923.3 1495.3 926.3 C1497.7 929.3 1504.2 931.2 1507.4 930.3 C1510.6 929.5 1515.0 924.4 1515.4 920.9 C1515.9 917.5 1512.9 911.2 1510.1 908.9 C1507.3 906.5 1500.8 905.7 1498.0 906.2 C1495.2 906.6 1493.5 910.7 1492.6 911.5" stroke="#fff" stroke-width="5.0"/>
<path d="M1550.2 1534.2 L1579.7 1535.3" stroke="#fff" stroke-width="5.9"/>
<path d="M1485.9 852.5 C1489.3 853.8 1503.5 857.5 1507.4 860.5 C1511.2 863.5 1511.4 864.4 1510.1 871.3 C1508.8 878.1 1501.0 898.3 1499.3 903.5 M1655.0 780.0 L1652.3 798.8" stroke="#fff" stroke-width="6.0"/>
<path d="M1736.2 578.9 C1737.7 581.4 1742.5 591.9 1745.5 594.4 C1748.5 596.8 1753.3 594.4 1754.8 594.4 M2029.5 614.4 L2038.8 617.5" stroke="#fff" stroke-width="6.2"/>
<path d="M1485.9 1032.3 C1491.5 1035.4 1513.5 1043.4 1520.8 1051.1 C1528.1 1058.9 1527.7 1072.9 1531.5 1080.7 C1535.4 1088.4 1539.4 1095.2 1545.0 1099.5 C1550.6 1103.8 1558.7 1107.1 1566.4 1107.5 C1574.2 1107.9 1586.0 1106.0 1593.3 1102.1 C1600.6 1098.3 1606.1 1091.9 1612.1 1083.4 C1618.1 1074.8 1624.0 1060.5 1630.9 1048.5 C1637.7 1036.4 1651.2 1014.6 1655.0 1008.2" stroke="#fff" stroke-width="6.4"/>
<path d="M1874.1 1417.3 C1875.3 1421.2 1877.4 1437.9 1881.6 1441.8 C1885.8 1445.7 1897.4 1441.8 1900.4 1441.8 M1953.0 1462.4 L2013.1 1462.4 M1702.3 523.4 C1709.7 523.6 1737.7 521.4 1748.6 524.9 C1759.5 528.4 1766.7 541.8 1770.2 545.0 M1671.4 616.0 L1680.7 625.2 L1723.9 617.5 M1456.2 1604.3 C1457.4 1607.9 1460.1 1621.2 1463.7 1626.9 C1467.3 1632.6 1476.3 1637.9 1478.7 1640.0" stroke="#fff" stroke-width="6.8"/>
<path d="M1488.6 908.9 C1515.2 923.5 1621.5 982.1 1655.0 1000.1 C1688.5 1018.2 1681.7 1014.7 1698.0 1021.6 C1714.3 1028.5 1742.9 1037.5 1757.0 1043.1 C1771.2 1048.7 1781.9 1054.4 1786.6 1056.5" stroke="#fff" stroke-width="7.0"/>
<path d="M1343.4 720.2 L1369.8 718.3 M1407.3 720.2 L1467.5 739.0 M1441.2 710.8 L1433.6 729.6 M1659.1 774.7 L1651.6 799.1 M1704.2 522.9 L1720.0 523.6 M2050.7 445.8 L2103.3 445.8 M2058.2 445.8 L2058.2 462.7 M2103.3 445.8 L2103.3 462.7 M2107.1 447.7 C2111.6 452.5 2130.8 467.9 2135.3 477.8 C2139.8 487.7 2135.3 504.6 2135.3 509.7 M1885.4 573.6 L1945.5 575.5 M2039.4 676.9 L2103.3 680.0 M2234.8 782.2 L2287.5 787.8 M2279.9 765.3 L2283.7 785.9 M2223.6 834.8 L2223.6 876.1 M2509.2 785.9 L2540.0 782.2 M1441.2 1304.6 C1444.8 1305.5 1460.7 1307.2 1463.7 1310.2 C1466.7 1313.2 1463.6 1321.3 1459.9 1323.4 C1456.3 1325.5 1444.2 1323.4 1441.2 1323.4 M1595.2 1361.0 L1591.5 1383.5 M1546.4 1379.8 C1557.2 1382.8 1600.8 1397.3 1614.0 1398.5 C1627.3 1399.7 1626.7 1389.1 1629.1 1387.3 M1866.6 1229.4 L1877.8 1248.2 L1896.6 1270.8 L1926.7 1259.5 L1945.5 1274.5 L1960.5 1276.4 M1720.0 1423.0 L1731.3 1423.0 M1731.3 1376.0 L1750.1 1391.0 M1215.7 1670.1 L1185.6 1758.4 M2246.1 2013.9 C2252.1 2012.7 2264.5 2006.4 2283.7 2006.4 C2302.9 2006.4 2353.2 2012.7 2366.4 2013.9 M2306.3 1454.0 L2325.0 1502.9 M2497.9 2006.4 L2540.0 2013.9" stroke="#fff" stroke-width="7.5"/>
<path d="M1682.2 687.0 C1686.9 688.0 1704.9 688.7 1711.5 693.1 C1718.2 697.6 1723.1 707.8 1723.9 714.8 C1724.6 721.7 1717.2 727.5 1716.2 736.4 C1715.2 745.3 1717.5 764.9 1717.7 770.3" stroke="#fff" stroke-width="8.0"/>
<path d="M1491.1 1454.8 C1498.2 1456.5 1524.8 1459.3 1535.4 1465.8 C1546.0 1472.3 1549.3 1490.4 1557.5 1495.4 C1565.8 1500.4 1582.4 1496.9 1587.1 1497.2 M1550.2 1499.1 L1544.6 1561.8 M1690.5 1567.4 L1690.5 1598.8 M1952.6 1462.2 L2011.7 1462.2 M1860.3 1561.8 L1856.6 1578.5 M1768.0 1868.3 L1816.0 1864.6 M1823.4 1831.4 L1827.1 1868.3 L1849.2 1866.5 M1952.6 1908.9 C1959.7 1906.6 1979.2 1897.1 1996.9 1894.2 C2014.6 1891.2 2052.8 1891.1 2063.4 1890.5" stroke="#fff" stroke-width="8.1"/>
<path d="M1080.4 383.8 L1102.9 440.2 M1480.6 853.6 C1484.5 855.4 1502.3 859.4 1505.0 864.8 C1507.7 870.3 1500.5 880.2 1497.5 887.4 C1494.5 894.6 1488.1 906.3 1486.3 909.9 M1795.2 357.5 L1800.8 398.9 M1720.0 357.5 L1723.8 406.4 M1422.4 928.8 C1423.6 939.0 1426.9 981.3 1429.9 992.7 C1432.9 1004.1 1438.1 1000.2 1441.2 1000.2 C1444.2 1000.2 1447.5 993.9 1448.7 992.7 M980.8 1124.2 C981.7 1130.8 981.0 1153.5 986.4 1165.5 C991.8 1177.6 1010.1 1194.0 1014.6 1199.4 M1493.8 1453.0 L1538.9 1469.9 M1720.0 955.1 C1723.0 955.7 1734.6 955.8 1738.8 958.9 C1743.0 961.9 1737.9 970.0 1746.3 973.9 C1754.7 977.8 1780.6 977.3 1791.4 983.3 C1802.2 989.3 1807.3 1006.7 1814.0 1011.5 C1820.6 1016.3 1829.7 1013.0 1832.7 1013.3 M1761.3 910.0 L1759.5 981.4 M1814.0 1221.9 C1809.1 1226.1 1791.1 1239.8 1783.9 1248.2 C1776.7 1256.6 1771.3 1270.3 1768.9 1274.5 M1121.7 1538.6 L1208.2 1561.1 M1157.4 1617.5 L1196.9 1626.9 M1290.8 1709.5 C1304.7 1712.9 1358.6 1727.5 1377.3 1730.2 C1395.9 1732.9 1402.5 1727.1 1407.3 1726.5 M2509.2 1600.6 C2508.0 1595.8 2507.7 1575.9 2501.7 1570.5 C2495.7 1565.1 2479.4 1571.6 2471.6 1566.7 C2463.8 1561.9 2457.6 1545.5 2452.8 1540.4 C2448.0 1535.3 2443.3 1535.7 2441.5 1534.8 M2505.4 1570.5 L2509.2 1544.2 M2261.2 1638.1 L2249.9 1705.8 M2317.5 1641.9 L2317.5 1679.5 L2328.8 1694.5 L2325.0 1720.8 L2336.3 1720.8 L2351.3 1638.1 M2317.5 1720.8 L2313.8 1750.9" stroke="#fff" stroke-width="8.3"/>
<path d="M1607.4 1454.8 L1672.0 1488.0 M1843.7 1552.6 C1846.9 1553.8 1851.3 1556.5 1864.0 1560.0 C1876.7 1563.5 1913.6 1572.4 1923.1 1574.8 M1576.0 1857.2 L1563.1 1897.8 M1542.8 1796.3 L1664.6 1825.8 M1760.6 1827.7 L1764.3 1886.8 L1708.9 1870.2 M1889.8 1816.6 L1904.6 1875.7" stroke="#fff" stroke-width="8.9"/>
<path d="M1332.2 383.8 C1340.6 406.7 1375.8 502.6 1384.8 526.6 C1393.8 550.7 1387.9 532.9 1388.5 534.1 M1384.8 526.6 L1411.1 517.2 M1287.1 568.0 L1341.6 545.4 L1362.2 586.8 M1394.2 564.2 L1382.9 680.7 M1054.1 466.5 C1057.7 474.9 1071.5 505.3 1076.6 519.1 C1081.7 532.9 1085.4 543.9 1086.0 552.9 C1086.6 562.0 1084.9 568.9 1080.4 575.5 C1075.9 582.1 1065.1 589.9 1057.8 594.3 C1050.6 598.6 1047.3 601.2 1035.3 602.5 C1023.3 603.9 991.1 602.5 982.7 602.5 M1080.4 579.2 C1084.0 581.6 1087.9 591.0 1102.9 594.3 C1118.0 597.6 1162.9 599.0 1174.3 599.9 M1146.2 575.5 L1163.1 618.7 M922.5 560.4 C923.5 567.7 918.6 598.8 928.2 605.5 C937.8 612.3 974.0 603.0 982.7 602.5 M1012.7 684.5 C1006.7 708.5 984.8 805.9 975.2 834.8 C965.5 863.6 956.2 860.0 952.6 864.8 M1399.8 819.8 C1407.0 821.6 1433.5 826.8 1444.9 831.0 C1456.3 835.2 1471.8 833.4 1471.2 846.1 C1470.6 858.7 1446.0 899.7 1441.2 909.9 M2050.7 357.5 L2050.7 425.2 M1313.4 1050.9 C1318.8 1051.5 1340.0 1047.2 1347.2 1054.7 C1354.4 1062.2 1350.7 1088.3 1358.5 1097.9 C1366.3 1107.5 1388.8 1108.8 1396.1 1114.8 C1403.3 1120.8 1402.4 1132.2 1403.6 1135.5 M1309.6 1221.9 C1316.8 1222.8 1341.5 1230.6 1354.7 1227.6 C1367.9 1224.5 1386.3 1207.0 1392.3 1203.1 M1356.6 1229.4 C1355.4 1235.4 1349.4 1260.4 1349.1 1267.0 C1348.8 1273.6 1340.0 1268.7 1354.7 1270.8 C1369.5 1272.9 1426.7 1279.6 1441.2 1280.2 C1455.6 1280.8 1444.3 1275.4 1444.9 1274.5 M2396.4 1154.3 C2410.9 1149.5 2471.0 1129.6 2486.6 1124.2 C2502.3 1118.8 2494.2 1125.9 2494.2 1120.4 C2494.2 1115.0 2487.8 1095.2 2486.6 1090.4 M2201.0 1150.5 L2208.5 1199.4 M2208.5 1221.9 C2212.2 1238.2 2225.1 1304.1 2231.1 1323.4 C2237.1 1342.6 2231.7 1339.2 2246.1 1342.2 C2260.6 1345.2 2309.3 1342.2 2321.3 1342.2 M1320.9 1905.0 C1322.7 1891.7 1325.6 1840.3 1332.2 1822.3 C1338.8 1804.2 1348.4 1796.4 1362.2 1792.2 C1376.1 1788.0 1409.6 1795.4 1418.6 1796.0 M900.0 1946.3 C906.0 1948.1 911.7 1955.2 937.6 1957.6 C963.4 1960.0 1041.8 1960.7 1061.6 1961.3 M922.5 1717.1 L915.0 1747.1 M933.8 1743.4 C943.4 1745.2 983.7 1748.6 994.0 1754.6 C1004.2 1760.7 997.1 1776.7 997.7 1780.9 M1825.2 1987.6 L1930.4 1987.6 M1814.0 1972.6 L1829.0 2013.9" stroke="#fff" stroke-width="9.0"/>
<path d="M1717.7 776.5 C1718.7 780.5 1718.9 793.3 1723.9 801.2 C1728.8 809.1 1742.7 814.5 1748.6 825.9 C1754.5 837.3 1758.2 858.4 1760.9 872.2 C1763.7 886.0 1764.8 905.9 1765.6 912.3" stroke="#fff" stroke-width="9.3"/>
<path d="M1587.1 1436.3 L1607.4 1454.8 L1646.2 1436.3 M1697.8 1735.4 L1753.2 1750.2 L1755.1 1816.6 M1544.6 1768.6 C1542.5 1778.7 1534.4 1819.0 1531.7 1831.4 C1529.0 1843.8 1528.6 1843.8 1528.0 1846.2 M1472.6 1822.2 C1482.7 1824.5 1505.8 1829.5 1535.4 1836.9 C1564.9 1844.3 1637.7 1863.3 1657.2 1868.3 M1945.2 1875.7 L1947.1 1997.5 M1494.8 1838.8 C1494.2 1851.8 1491.1 1894.6 1491.1 1920.0 C1491.1 1945.4 1494.2 1985.1 1494.8 1997.5" stroke="#fff" stroke-width="9.6"/>
<path d="M1163.1 357.5 C1165.8 364.1 1199.2 385.0 1180.0 398.9 C1160.7 412.7 1064.8 436.7 1042.8 444.0 M1148.0 436.4 C1160.7 464.1 1212.5 580.1 1226.9 609.3 C1241.4 638.5 1227.4 618.7 1238.2 618.7 C1249.0 618.7 1285.6 610.8 1294.6 609.3 M1885.4 534.1 C1901.0 535.9 1957.8 539.4 1983.1 545.4 C2008.3 551.4 2019.1 563.9 2043.2 571.7 C2067.2 579.5 2111.7 588.9 2133.4 594.3 C2155.0 599.7 2170.4 596.5 2178.5 605.5 C2186.6 614.6 2182.3 631.4 2184.1 650.6 C2185.9 669.9 2191.9 701.8 2189.8 725.8 C2187.6 749.9 2175.2 776.9 2171.0 801.0 C2166.8 825.0 2164.6 864.1 2163.4 876.1 M2000.0 575.5 C2006.9 579.1 2030.3 593.5 2043.2 598.0 C2056.1 602.5 2074.8 602.8 2080.8 603.7 M2043.2 598.0 C2042.0 609.5 2037.8 649.0 2035.7 669.4 C2033.6 689.9 2030.3 704.8 2030.0 725.8 C2029.7 746.8 2039.5 783.5 2033.8 801.0 C2028.1 818.4 1999.7 817.3 1994.3 834.8 C1988.9 852.2 1999.1 897.9 2000.0 909.9 M1366.0 1338.4 C1374.4 1340.5 1399.4 1351.6 1418.6 1351.6 C1437.8 1351.6 1475.4 1340.5 1486.3 1338.4 M1418.6 1353.4 C1416.8 1360.7 1410.3 1379.9 1407.3 1398.5 C1404.3 1417.2 1401.0 1458.5 1399.8 1469.9 M1572.7 1347.8 C1581.1 1350.5 1601.7 1357.2 1625.3 1364.7 C1648.9 1372.2 1704.8 1390.0 1720.0 1394.8 M1776.4 1060.3 C1771.0 1069.9 1751.6 1106.0 1742.5 1120.4 C1733.5 1134.9 1723.6 1145.7 1720.0 1150.5 M1819.6 1221.9 C1839.7 1221.9 1910.3 1221.6 1945.5 1221.9 C1980.7 1222.2 2021.4 1224.7 2039.4 1223.8 C2057.5 1222.9 2034.8 1218.4 2058.2 1216.3 C2081.7 1214.2 2155.9 1213.3 2186.0 1210.6 C2216.1 1207.9 2236.5 1201.2 2246.1 1199.4 M1851.5 1417.3 L1930.4 1391.0 M1720.0 1451.2 C1726.6 1448.7 1741.5 1439.7 1761.3 1436.1 C1781.2 1432.5 1830.8 1429.8 1844.0 1428.6 M2238.6 1135.5 C2239.8 1145.7 2243.1 1187.3 2246.1 1199.4 C2249.1 1211.4 2245.4 1187.8 2257.4 1210.6 C2269.4 1233.5 2308.7 1313.3 2321.3 1342.2 C2333.9 1371.0 2333.9 1383.2 2336.3 1391.0 M2189.8 1210.6 C2192.8 1208.8 2199.5 1201.2 2208.5 1199.4 C2217.6 1197.6 2240.1 1199.4 2246.1 1199.4 M2216.1 1458.7 L2283.7 1469.9 M1031.5 1844.8 L1001.5 1935.0 L1020.3 1942.5 L1005.2 2013.9 M2452.8 1630.6 L2462.2 1762.2 M2110.8 1908.7 L2219.8 1929.4 M2373.9 1863.6 L2467.8 1873.0" stroke="#fff" stroke-width="9.8"/>
<path d="M1532.5 724.0 C1543.8 710.2 1581.3 655.4 1603.5 637.6 C1625.7 619.8 1650.2 622.8 1671.4 612.9 C1692.6 603.0 1717.5 586.7 1736.2 575.8 C1755.0 565.0 1772.9 552.1 1788.7 545.0 C1804.5 537.8 1820.7 533.5 1835.0 531.1 C1849.4 528.6 1871.3 529.8 1878.2 529.5" stroke="#fff" stroke-width="9.9"/>
<path d="M1587.1 1552.6 C1598.3 1554.4 1636.6 1561.3 1657.2 1563.7 C1677.9 1566.1 1706.9 1566.8 1716.3 1567.4 M2009.8 1428.9 C2011.6 1436.6 2018.9 1451.5 2020.9 1476.9 C2023.0 1502.3 2022.6 1544.0 2022.8 1587.7 C2022.9 1631.4 2022.1 1724.2 2022.0 1750.2 M1830.8 1683.7 C1829.6 1686.6 1826.9 1696.2 1823.4 1702.2 C1819.8 1708.1 1811.0 1703.5 1808.6 1720.6 C1806.3 1737.7 1808.6 1795.1 1808.6 1809.2" stroke="#fff" stroke-width="10.3"/>
<path d="M2178.5 357.5 C2174.9 362.3 2160.7 376.8 2155.9 387.6 C2151.1 398.4 2149.6 419.1 2148.4 425.2 M2276.2 357.5 C2275.9 363.5 2276.1 384.3 2274.3 395.1 C2272.5 405.9 2266.4 420.4 2264.9 425.2 M1720.0 770.9 C1729.0 771.5 1756.5 770.4 1776.4 774.7 C1796.2 778.9 1833.2 793.6 1844.0 797.2 M1619.7 1190.0 C1620.0 1199.3 1622.4 1233.5 1621.5 1248.2 C1620.6 1263.0 1618.2 1273.6 1614.0 1282.0 C1609.8 1290.5 1604.9 1297.2 1595.2 1300.8 C1585.6 1304.4 1560.5 1304.0 1553.9 1304.6 M1533.2 1229.4 L1617.8 1248.2 M1720.0 1030.3 C1729.0 1034.5 1758.3 1052.7 1776.4 1056.6 C1794.4 1060.5 1814.7 1053.2 1832.7 1054.7 C1850.8 1056.2 1874.7 1062.7 1889.1 1066.0 C1903.5 1069.3 1917.5 1073.8 1922.9 1075.4 M1720.0 1169.3 C1733.8 1174.1 1791.4 1191.6 1806.4 1199.4 C1821.5 1207.2 1812.7 1215.2 1814.0 1218.2 M1847.8 972.0 C1840.9 1001.2 1809.2 1114.8 1804.6 1154.3 C1799.9 1193.8 1812.9 1203.4 1818.5 1218.9 C1824.1 1234.4 1834.5 1233.9 1839.5 1251.2 C1844.5 1268.5 1848.0 1298.8 1849.7 1327.1 C1851.3 1355.5 1851.2 1405.8 1849.7 1428.6 C1848.1 1451.5 1841.8 1463.3 1840.3 1469.9 M1849.7 1334.7 C1862.6 1343.1 1907.9 1375.8 1930.4 1387.3 C1953.0 1398.7 1977.3 1392.8 1990.6 1406.1 C2003.8 1419.3 2009.5 1459.7 2013.1 1469.9 M1054.1 1499.1 L1027.8 1596.8 L1061.6 1608.1 L1042.8 1690.8 L1057.8 1717.1 L1024.0 1829.8 M1290.8 1563.0 L1281.4 1641.9 M2171.0 1600.6 C2177.0 1603.6 2193.5 1614.8 2208.5 1619.4 C2223.6 1623.9 2225.8 1627.5 2264.9 1628.7 C2304.0 1630.0 2418.5 1628.4 2452.8 1626.9 C2487.1 1625.4 2470.1 1623.6 2479.1 1619.4 C2488.1 1615.1 2499.4 1604.2 2509.2 1600.6 C2518.9 1597.0 2535.1 1597.4 2540.0 1596.8 M2212.3 1769.7 C2214.7 1785.3 2226.7 1828.3 2227.3 1867.4 C2227.9 1906.5 2217.9 1990.5 2216.1 2013.9 M2362.6 1765.9 C2363.8 1782.2 2369.5 1827.7 2370.1 1867.4 C2370.7 1907.1 2367.0 1990.5 2366.4 2013.9" stroke="#fff" stroke-width="10.5"/>
<path d="M1607.4 1454.8 C1604.7 1461.3 1594.3 1480.0 1590.8 1495.4 C1587.2 1510.7 1586.3 1533.6 1585.2 1550.8 C1584.2 1567.9 1584.1 1587.1 1584.1 1602.5 C1584.1 1617.8 1586.5 1631.4 1585.2 1646.8 C1583.9 1662.1 1582.5 1679.0 1576.0 1698.5 C1569.5 1718.0 1549.6 1757.4 1544.6 1768.6 M1409.8 1599.5 C1437.6 1599.4 1539.1 1598.0 1583.4 1598.8 C1627.7 1599.5 1664.3 1601.9 1686.8 1604.3 C1709.2 1606.7 1717.8 1612.1 1723.7 1613.5 M1845.5 1428.9 L1834.5 1504.6 L1804.9 1543.4 L1745.8 1608.0 L1727.4 1615.4 M1834.5 1504.6 C1836.8 1506.1 1833.3 1511.5 1849.2 1513.8 C1865.2 1516.2 1907.0 1518.5 1934.2 1519.4 C1961.3 1520.3 2005.5 1519.4 2019.1 1519.4 M1934.2 1521.2 C1933.0 1529.5 1928.2 1555.2 1926.8 1572.9 C1925.3 1590.6 1925.8 1615.5 1924.9 1632.0 C1924.0 1648.5 1924.5 1665.7 1921.2 1676.3 C1918.0 1686.9 1909.6 1691.4 1904.6 1698.5 C1899.6 1705.6 1894.0 1704.1 1889.8 1720.6 C1885.7 1737.2 1880.5 1788.8 1878.8 1801.8 M1720.0 1646.8 C1737.7 1652.1 1802.4 1671.7 1830.8 1680.0 C1859.1 1688.3 1867.1 1692.0 1897.2 1698.5 C1927.4 1705.0 1999.6 1717.1 2019.1 1720.6" stroke="#fff" stroke-width="11.1"/>
<path d="M1324.7 707.0 L1181.9 703.3 M1437.4 357.5 C1440.4 365.3 1450.8 397.4 1456.2 406.4 C1461.6 415.4 1429.0 412.7 1471.2 413.9 C1513.4 415.1 1680.2 413.9 1720.0 413.9 M2238.6 444.0 C2244.6 441.5 2260.0 432.5 2276.2 428.9 C2292.4 425.3 2308.8 421.1 2340.1 421.4 C2371.3 421.7 2445.7 428.7 2471.6 430.8 C2497.5 432.9 2496.9 434.0 2501.7 434.6 M1720.0 408.2 L1862.8 395.1 M1384.8 1169.3 C1396.2 1172.6 1419.5 1187.0 1456.2 1190.0 C1492.9 1193.0 1571.8 1191.4 1614.0 1188.1 C1656.2 1184.8 1703.0 1172.3 1720.0 1169.3 M990.2 1300.8 L1003.3 1297.1 M1317.1 910.0 C1316.5 932.2 1314.9 1013.6 1313.4 1049.0 C1311.9 1084.5 1308.6 1118.5 1307.7 1131.7 M1606.5 1454.9 L1720.0 1391.0 M2016.9 921.3 C2018.1 926.7 2026.2 945.5 2024.4 955.1 C2022.6 964.7 2017.0 971.2 2005.6 981.4 C1994.2 991.6 1965.0 1007.6 1953.0 1019.0 C1941.0 1030.4 1934.7 1043.2 1930.4 1052.8 C1926.2 1062.4 1924.3 1070.7 1926.7 1079.1 C1929.1 1087.5 1933.5 1097.6 1945.5 1105.4 C1957.5 1113.2 1983.8 1120.7 2001.9 1128.0 C2019.9 1135.2 2040.2 1145.7 2058.2 1150.5 C2076.3 1155.3 2096.6 1159.2 2114.6 1158.0 C2132.6 1156.8 2150.5 1147.8 2171.0 1143.0 C2191.4 1138.2 2218.3 1131.3 2242.4 1128.0 C2266.4 1124.7 2305.0 1124.4 2321.3 1122.3 C2337.5 1120.2 2340.2 1116.0 2343.8 1114.8 M1817.7 1229.4 C1805.7 1249.3 1758.2 1327.6 1742.5 1353.4 C1726.9 1379.3 1723.6 1385.0 1720.0 1391.0 M1226.9 1454.0 C1225.1 1468.4 1219.9 1515.3 1215.7 1544.2 C1211.5 1573.1 1203.6 1615.1 1200.6 1634.4 C1197.6 1653.6 1206.5 1643.4 1196.9 1664.4 C1187.3 1685.5 1156.1 1736.5 1140.5 1765.9 C1124.9 1795.4 1105.8 1835.4 1099.2 1848.6 M1399.8 1454.0 C1400.4 1472.0 1402.4 1540.3 1403.6 1566.7 C1404.8 1593.2 1406.7 1610.9 1407.3 1619.4 M1420.5 1799.7 C1426.2 1801.5 1445.7 1805.6 1456.2 1811.0 C1466.7 1816.4 1471.8 1840.8 1486.3 1833.6 C1500.7 1826.3 1536.8 1776.7 1546.4 1765.9" stroke="#fff" stroke-width="11.3"/>
<path d="M1407.3 1619.4 C1408.5 1636.2 1412.7 1695.7 1414.8 1724.6 C1417.0 1753.4 1425.3 1770.9 1420.5 1799.7 C1415.7 1828.6 1395.9 1870.7 1384.8 1905.0 C1373.7 1939.2 1356.4 1996.5 1351.0 2013.9" stroke="#fff" stroke-width="12.0"/>
<path d="M1775.4 1428.9 C1771.8 1437.8 1759.7 1464.8 1753.2 1484.3 C1746.7 1503.8 1739.5 1530.1 1734.8 1550.8 C1730.0 1571.4 1726.6 1598.2 1723.7 1613.5 C1720.7 1628.9 1720.4 1627.9 1716.3 1646.8 C1712.2 1665.7 1704.3 1705.7 1697.8 1731.7 C1691.3 1757.7 1681.0 1793.3 1675.7 1809.2 C1670.4 1825.2 1669.9 1810.7 1664.6 1831.4 C1659.3 1852.1 1647.5 1911.3 1642.5 1938.5 C1637.4 1965.6 1634.7 1991.2 1633.2 2001.2" stroke="#fff" stroke-width="12.6"/>
<path d="M900.0 474.0 C915.0 474.6 968.7 479.6 994.0 477.8 C1019.2 476.0 1032.0 470.3 1057.8 462.7 C1083.7 455.2 1114.7 444.3 1155.5 430.8 C1196.4 417.3 1276.1 389.9 1313.4 378.2 C1350.7 366.5 1376.5 360.8 1388.5 357.5 M1332.2 680.7 C1331.0 693.9 1326.5 726.7 1324.7 763.4 C1322.9 800.1 1321.5 886.5 1320.9 909.9 M975.2 910.0 C981.8 916.0 1003.3 933.1 1016.5 947.6 C1029.7 962.0 1051.2 991.8 1057.8 1000.2" stroke="#fff" stroke-width="12.8"/>
<path d="M900.0 1019.0 L986.4 1105.4 L1125.5 1199.4 L1279.6 1285.8 M1279.6 1285.8 C1276.6 1297.8 1266.8 1336.9 1260.8 1361.0 C1254.8 1385.0 1246.2 1418.7 1242.0 1436.1 C1237.8 1453.6 1235.7 1464.5 1234.5 1469.9 M1001.5 1297.1 C1021.3 1307.3 1086.4 1341.7 1125.5 1361.0 C1164.6 1380.2 1226.5 1408.3 1245.7 1417.3 M900.0 1436.1 L994.0 1469.9 M937.6 1461.5 C933.4 1472.3 917.3 1509.3 911.3 1529.2 C905.3 1549.0 901.8 1576.5 900.0 1585.5" stroke="#fff" stroke-width="13.5"/>
<path d="M1889.1 430.8 C1887.9 433.5 1883.4 424.6 1881.6 447.7 C1879.8 470.9 1879.0 538.2 1877.8 575.5 C1876.6 612.8 1877.1 655.5 1874.1 680.7 C1871.1 706.0 1863.9 717.1 1859.0 733.3 C1854.2 749.6 1848.2 765.3 1844.0 782.2 C1839.8 799.0 1835.7 818.1 1832.7 838.5 C1829.7 859.0 1826.4 898.5 1825.2 909.9 M945.1 910.0 C961.9 923.8 1009.4 968.2 1050.3 996.4 C1091.2 1024.7 1159.8 1064.4 1200.6 1086.6 C1241.5 1108.9 1278.8 1124.1 1305.9 1135.5 C1332.9 1146.9 1356.5 1152.0 1369.8 1158.0 C1383.0 1164.0 1370.5 1149.6 1388.5 1173.1 C1406.6 1196.5 1464.5 1275.7 1482.5 1304.6 C1500.5 1333.5 1491.1 1341.4 1501.3 1353.4 C1511.5 1365.5 1529.5 1363.5 1546.4 1379.8 C1563.2 1396.0 1595.7 1440.5 1606.5 1454.9 C1617.3 1469.3 1612.8 1467.5 1614.0 1469.9" stroke="#fff" stroke-width="14.3"/>
<path d="M900.0 834.8 L990.2 909.9 M2355.1 688.2 C2353.3 691.2 2351.6 692.0 2343.8 707.0 C2336.0 722.0 2315.9 761.1 2306.3 782.2 C2296.6 803.2 2288.5 818.1 2283.7 838.5 C2278.9 859.0 2277.4 898.5 2276.2 909.9 M2058.2 909.9 C2064.2 906.9 2075.4 896.0 2095.8 891.2 C2116.2 886.3 2158.9 881.7 2186.0 879.9 C2213.1 878.1 2245.7 880.5 2264.9 879.9 C2284.2 879.3 2262.2 876.1 2306.3 876.1 C2350.3 876.1 2502.6 879.3 2540.0 879.9 M990.2 1300.8 L1080.4 1469.9 M1844.0 972.0 C1872.3 963.9 1986.4 931.2 2020.6 921.3 C2054.9 911.4 2052.2 911.8 2058.2 910.0 M2471.6 1293.3 L2540.0 1323.4 M1061.6 1439.0 C1064.0 1445.0 1070.6 1465.7 1076.6 1476.5 C1082.6 1487.4 1095.6 1501.8 1099.2 1506.6 M1388.5 2013.9 C1406.6 2010.9 1448.3 1996.4 1501.3 1995.2 C1554.3 1994.0 1685.0 2004.6 1720.0 2006.4" stroke="#fff" stroke-width="15.0"/>
<path d="M1862.8 357.5 C1863.4 363.5 1863.0 384.3 1866.6 395.1 C1870.2 405.9 1877.5 418.8 1885.4 425.2 C1893.2 431.5 1890.8 434.6 1915.4 434.6 C1940.1 434.6 1995.5 425.2 2039.4 425.2 C2083.3 425.2 2157.9 430.9 2189.8 434.6 C2221.6 438.2 2224.8 440.8 2238.6 447.7 C2252.4 454.6 2264.8 463.3 2276.2 477.8 C2287.6 492.2 2300.4 513.2 2310.0 537.9 C2319.6 562.6 2329.1 607.8 2336.3 631.9 C2343.5 655.9 2351.5 678.0 2355.1 688.2 C2358.7 698.4 2358.3 694.5 2358.9 695.7" stroke="#fff" stroke-width="15.8"/>
<path d="M1544.6 1768.6 C1563.8 1776.3 1630.1 1807.8 1664.6 1816.6 C1699.2 1825.5 1725.2 1825.2 1760.6 1824.0 C1796.1 1822.8 1837.7 1817.5 1886.2 1809.2 C1934.6 1801.0 2031.5 1780.0 2063.4 1772.3 C2095.3 1764.6 2082.0 1763.0 2085.5 1761.2 M2085.5 1790.8 C2074.3 1798.4 2038.4 1825.2 2015.4 1838.8 C1992.3 1852.4 1959.3 1866.8 1941.5 1875.7 C1923.8 1884.6 1925.3 1882.3 1904.6 1894.2 C1883.9 1906.0 1842.4 1933.0 1812.3 1949.5 C1782.2 1966.1 1731.7 1989.9 1716.3 1997.5" stroke="#fff" stroke-width="16.2"/>
<path d="M1332.2 673.2 C1359.2 681.0 1439.2 705.8 1501.3 722.0 C1563.3 738.3 1685.0 766.2 1720.0 774.7" stroke="#fff" stroke-width="16.5"/>
<path d="M2528.0 357.5 C2512.9 392.4 2459.9 520.2 2434.0 575.5 C2408.2 630.8 2384.4 670.2 2366.4 703.3 C2348.3 736.3 2333.3 759.3 2321.3 782.2 C2309.3 805.0 2297.2 831.0 2291.2 846.1 C2285.2 861.1 2284.9 871.3 2283.7 876.1 M900.0 1180.6 C907.8 1188.4 936.2 1215.0 948.9 1229.4 C961.5 1243.9 972.3 1259.3 978.9 1270.8 C985.5 1282.2 990.8 1286.4 990.2 1300.8 C989.6 1315.3 986.0 1333.9 975.2 1361.0 C964.3 1388.0 931.0 1452.5 922.5 1469.9 M900.0 1454.0 C915.0 1457.6 965.1 1469.3 994.0 1476.5 C1022.8 1483.8 1061.7 1492.5 1080.4 1499.1 C1099.0 1505.7 1088.2 1511.3 1110.4 1517.9 C1132.7 1524.5 1190.0 1533.8 1219.4 1540.4 C1248.9 1547.0 1273.5 1551.4 1294.6 1559.2 C1315.6 1567.0 1334.7 1580.3 1351.0 1589.3 C1367.2 1598.3 1379.2 1600.0 1396.1 1615.6 C1412.9 1631.2 1432.1 1662.9 1456.2 1687.0 C1480.2 1711.0 1531.9 1753.3 1546.4 1765.9" stroke="#fff" stroke-width="17.3"/>
<path d="M1185.6 357.5 C1200.0 387.6 1256.0 502.1 1275.8 545.4 C1295.6 588.7 1301.2 608.9 1309.6 628.1 C1318.0 647.3 1325.4 659.7 1328.4 665.7" stroke="#fff" stroke-width="18.0"/>
<path d="M2268.7 910.0 C2269.3 922.0 2266.4 962.3 2272.4 985.2 C2278.4 1008.0 2296.0 1034.8 2306.3 1052.8 C2316.5 1070.8 2329.1 1087.1 2336.3 1097.9 C2343.5 1108.7 2341.7 1110.8 2351.3 1120.4 C2361.0 1130.1 2380.2 1137.6 2396.4 1158.0 C2412.7 1178.5 2440.8 1230.8 2452.8 1248.2 C2464.8 1265.7 2462.6 1263.4 2471.6 1267.0 C2480.6 1270.6 2498.2 1271.4 2509.2 1270.8 C2520.1 1270.2 2535.1 1264.5 2540.0 1263.3 M2114.6 1773.4 C2141.6 1769.8 2238.6 1753.3 2283.7 1750.9 C2328.8 1748.5 2355.4 1754.2 2396.4 1758.4 C2437.5 1762.6 2517.0 1774.2 2540.0 1777.2" stroke="#fff" stroke-width="18.8"/>
<path d="M900.0 1750.9 C919.8 1762.9 990.3 1807.4 1024.0 1826.0 C1057.7 1844.7 1088.2 1856.0 1110.4 1867.4 C1132.7 1878.8 1151.6 1886.6 1163.1 1897.4 C1174.5 1908.3 1172.8 1922.4 1181.9 1935.0 C1190.9 1947.7 1204.4 1966.1 1219.4 1976.4 C1234.5 1986.6 1248.7 1992.9 1275.8 1998.9 C1302.9 2004.9 1370.5 2011.5 1388.5 2013.9" stroke="#fff" stroke-width="22.5"/>
<path d="M1317.1 646.9 C1319.5 650.5 1328.0 664.6 1332.2 669.4 C1336.4 674.2 1341.6 675.7 1343.4 676.9 M2332.6 1105.4 L2358.9 1131.7" stroke="#fff" stroke-width="26.3"/>
</g>
<path d="M2560.0 1407.0 L2533.6 1418.3 L2423.0 1465.1 L2312.3 1507.7 L2218.7 1558.7 L2180.4 1575.7 L2142.1 1590.6 L2116.6 1618.3 L2099.6 1669.4 L2086.8 1733.2 L2080.4 1767.2 L2078.3 1805.5 L2076.2 1890.6 L2065.5 1975.7 L2059.1 2018.3 L2099.6 2018.3 L2103.8 1954.5 L2114.5 1869.4 L2116.6 1805.5 L2118.7 1746.0 L2125.1 1703.4 L2133.6 1686.4 L2167.7 1622.6 L2188.9 1603.4 L2252.8 1571.5 L2337.9 1528.9 L2465.5 1471.5 L2533.6 1443.8 L2560.0 1432.0 Z" fill="#fbe0b3"/><path d="M2560.0 1407.0 C2555.8 1408.8 2555.5 1409.0 2533.6 1418.3 C2511.7 1427.6 2458.4 1450.8 2423.0 1465.1 C2387.6 1479.4 2345.0 1492.7 2312.3 1507.7 C2279.7 1522.6 2239.8 1547.8 2218.7 1558.7 C2197.6 1569.6 2192.7 1570.6 2180.4 1575.7 C2168.2 1580.9 2152.3 1583.8 2142.1 1590.6 C2131.9 1597.4 2123.4 1605.7 2116.6 1618.3 C2109.8 1630.9 2104.3 1651.0 2099.6 1669.4 C2094.8 1687.7 2089.9 1717.5 2086.8 1733.2 C2083.7 1748.9 2081.8 1755.7 2080.4 1767.2 C2079.1 1778.8 2079.0 1785.8 2078.3 1805.5 C2077.6 1825.3 2078.2 1863.4 2076.2 1890.6 C2074.1 1917.9 2068.3 1955.3 2065.5 1975.7 C2062.8 1996.2 2060.2 2011.5 2059.1 2018.3 M2560.0 1432.0 C2555.8 1433.9 2548.7 1437.5 2533.6 1443.8 C2518.5 1450.1 2496.9 1457.9 2465.5 1471.5 C2434.2 1485.1 2371.9 1512.9 2337.9 1528.9 C2303.8 1544.9 2276.6 1559.6 2252.8 1571.5 C2228.9 1583.4 2202.6 1595.2 2188.9 1603.4 C2175.3 1611.6 2176.5 1609.3 2167.7 1622.6 C2158.8 1635.8 2140.4 1673.4 2133.6 1686.4 C2126.8 1699.3 2127.5 1693.9 2125.1 1703.4 C2122.7 1712.9 2120.1 1729.6 2118.7 1746.0 C2117.4 1762.3 2117.3 1785.8 2116.6 1805.5 C2115.9 1825.3 2116.5 1845.5 2114.5 1869.4 C2112.4 1893.2 2106.2 1930.6 2103.8 1954.5 C2101.4 1978.3 2100.3 2008.1 2099.6 2018.3" fill="none" stroke="#e0a55c" stroke-width="2.600" stroke-linejoin="round"/>
<g font-family="Liberation Sans, sans-serif" stroke="#fff" stroke-opacity=".85" stroke-width="4" stroke-linejoin="round" paint-order="stroke"><text x="1230.7" y="470.3" text-anchor="middle" font-size="27" fill="#6b5258" textLength="131.0" lengthAdjust="spacingAndGlyphs" transform="rotate(63.0 1230.7 460.9)">Burton Rd</text><text x="1230.7" y="470.3" text-anchor="middle" font-size="27" fill="#6b5258" stroke="#6b5258" stroke-opacity="1" stroke-width="0.600" textLength="131.0" lengthAdjust="spacingAndGlyphs" transform="rotate(63.0 1230.7 460.9)">Burton Rd</text><text x="1372.0" y="374.4" text-anchor="middle" font-size="24" fill="#6b5258" textLength="100.0" lengthAdjust="spacingAndGlyphs" transform="rotate(-18.0 1372.0 366.0)">Rasen Ln</text><text x="951.0" y="374.4" text-anchor="middle" font-size="24" fill="#6b5258" textLength="26.0" lengthAdjust="spacingAndGlyphs" transform="rotate(65.0 951.0 366.0)">Rd</text><text x="1538.9" y="422.3" text-anchor="middle" font-size="24" fill="#6b5258" textLength="88.0" lengthAdjust="spacingAndGlyphs">Cecil St</text><text x="1319.0" y="896.4" text-anchor="middle" font-size="24" fill="#6b5258" textLength="105.0" lengthAdjust="spacingAndGlyphs" transform="rotate(-90.0 1319.0 888.0)">Union Rd</text><text x="969.0" y="908.4" text-anchor="middle" font-size="24" fill="#6b5258" textLength="162.0" lengthAdjust="spacingAndGlyphs" transform="rotate(45.5 969.0 900.0)">Belle Vue Ter</text><text x="2099.6" y="438.3" text-anchor="middle" font-size="27" fill="#6b5258" textLength="131.5" lengthAdjust="spacingAndGlyphs" transform="rotate(3.0 2099.6 428.9)">Church Ln</text><text x="2099.6" y="438.3" text-anchor="middle" font-size="27" fill="#6b5258" stroke="#6b5258" stroke-opacity="1" stroke-width="0.600" textLength="131.5" lengthAdjust="spacingAndGlyphs" transform="rotate(3.0 2099.6 428.9)">Church Ln</text><text x="2402.1" y="431.7" text-anchor="middle" font-size="24" fill="#6b5258" textLength="120.0" lengthAdjust="spacingAndGlyphs" transform="rotate(2.0 2402.1 423.3)">Church Ln</text><text x="2472.4" y="511.3" text-anchor="middle" font-size="26" fill="#6b5258" textLength="177.4" lengthAdjust="spacingAndGlyphs" transform="rotate(-65.6 2472.4 502.2)">Nettleham Rd</text><text x="2472.4" y="511.3" text-anchor="middle" font-size="26" fill="#6b5258" stroke="#6b5258" stroke-opacity="1" stroke-width="0.600" textLength="177.4" lengthAdjust="spacingAndGlyphs" transform="rotate(-65.6 2472.4 502.2)">Nettleham Rd</text><text x="1877.8" y="639.1" text-anchor="middle" font-size="26" fill="#6b5258" textLength="101.5" lengthAdjust="spacingAndGlyphs" transform="rotate(-86.0 1877.8 630.0)">Bailgate</text><text x="1877.8" y="639.1" text-anchor="middle" font-size="26" fill="#6b5258" stroke="#6b5258" stroke-opacity="1" stroke-width="0.600" textLength="101.5" lengthAdjust="spacingAndGlyphs" transform="rotate(-86.0 1877.8 630.0)">Bailgate</text><text x="1146.1" y="1066.8" text-anchor="middle" font-size="24" fill="#6b5258" textLength="126.3" lengthAdjust="spacingAndGlyphs" transform="rotate(30.0 1146.1 1058.4)">Carline Rd</text><text x="1050.3" y="1161.9" text-anchor="middle" font-size="24" fill="#6b5258" textLength="170.0" lengthAdjust="spacingAndGlyphs" transform="rotate(32.8 1050.3 1153.5)">Alexandra Ter</text><text x="1118.0" y="1366.3" text-anchor="middle" font-size="24" fill="#6b5258" textLength="141.0" lengthAdjust="spacingAndGlyphs" transform="rotate(31.4 1118.0 1357.9)">Victoria Ter</text><text x="1707.0" y="1392.4" text-anchor="middle" font-size="24" fill="#6b5258" textLength="151.0" lengthAdjust="spacingAndGlyphs" transform="rotate(-42.0 1707.0 1384.0)">Michaelgate</text><text x="2142.8" y="1160.0" text-anchor="middle" font-size="27" fill="#6b5258" textLength="154.0" lengthAdjust="spacingAndGlyphs" transform="rotate(-6.0 2142.8 1150.5)">Minster Yard</text><text x="1399.8" y="1647.5" text-anchor="middle" font-size="27" fill="#6b5258" textLength="159.8" lengthAdjust="spacingAndGlyphs" transform="rotate(41.2 1399.8 1638.1)">West Parade</text><text x="1399.8" y="1647.5" text-anchor="middle" font-size="27" fill="#6b5258" stroke="#6b5258" stroke-opacity="1" stroke-width="0.600" textLength="159.8" lengthAdjust="spacingAndGlyphs" transform="rotate(41.2 1399.8 1638.1)">West Parade</text><text x="998.5" y="1812.2" text-anchor="middle" font-size="27" fill="#6b5258" textLength="115.4" lengthAdjust="spacingAndGlyphs" transform="rotate(30.3 998.5 1802.7)">Newland</text><text x="998.5" y="1812.2" text-anchor="middle" font-size="27" fill="#6b5258" stroke="#6b5258" stroke-opacity="1" stroke-width="0.600" textLength="115.4" lengthAdjust="spacingAndGlyphs" transform="rotate(30.3 998.5 1802.7)">Newland</text><text x="1172.5" y="1723.6" text-anchor="middle" font-size="24" fill="#6b5258" textLength="122.7" lengthAdjust="spacingAndGlyphs" transform="rotate(-62.7 1172.5 1715.2)">Orchard St</text><text x="2209.3" y="1769.0" text-anchor="middle" font-size="28" fill="#6b5258" textLength="127.0" lengthAdjust="spacingAndGlyphs" transform="rotate(-6.0 2209.3 1759.2)">Monks Rd</text><text x="2209.3" y="1769.0" text-anchor="middle" font-size="28" fill="#6b5258" stroke="#6b5258" stroke-opacity="1" stroke-width="0.600" textLength="127.0" lengthAdjust="spacingAndGlyphs" transform="rotate(-6.0 2209.3 1759.2)">Monks Rd</text><text x="2094.5" y="1961.8" text-anchor="middle" font-size="27" fill="#6b5258" textLength="123.0" lengthAdjust="spacingAndGlyphs" transform="rotate(-80.0 2094.5 1952.3)">Broadgate</text><text x="2094.5" y="1961.8" text-anchor="middle" font-size="27" fill="#6b5258" stroke="#6b5258" stroke-opacity="1" stroke-width="0.600" textLength="123.0" lengthAdjust="spacingAndGlyphs" transform="rotate(-80.0 2094.5 1952.3)">Broadgate</text><text x="1782.0" y="1984.0" text-anchor="middle" font-size="27" fill="#6b5258" textLength="109.3" lengthAdjust="spacingAndGlyphs" transform="rotate(-24.0 1782.0 1974.5)">Silver St</text><text x="1782.0" y="1984.0" text-anchor="middle" font-size="27" fill="#6b5258" stroke="#6b5258" stroke-opacity="1" stroke-width="0.600" textLength="109.3" lengthAdjust="spacingAndGlyphs" transform="rotate(-24.0 1782.0 1974.5)">Silver St</text><text x="2327.7" y="1636.0" text-anchor="middle" font-size="24" fill="#6b5258" textLength="126.6" lengthAdjust="spacingAndGlyphs">Cathedral St</text><text x="2454.7" y="1710.4" text-anchor="middle" font-size="24" fill="#6b5258" textLength="91.0" lengthAdjust="spacingAndGlyphs" transform="rotate(82.0 2454.7 1702.0)">Abbey St</text><text x="2223.6" y="1929.1" text-anchor="middle" font-size="24" fill="#6b5258" textLength="103.3" lengthAdjust="spacingAndGlyphs" transform="rotate(-88.0 2223.6 1920.7)">Friars Ln</text><text x="2369.4" y="1896.4" text-anchor="start" font-size="24" fill="#6b5258" textLength="160.0" lengthAdjust="spacingAndGlyphs" transform="rotate(87.0 2369.4 1888.0)">Rosemary Ln</text><text x="2155.9" y="1645.5" text-anchor="middle" font-size="23" fill="#6b5258" textLength="106.0" lengthAdjust="spacingAndGlyphs" transform="rotate(-53.0 2155.9 1637.4)">Lindum Rd</text><text x="1783.1" y="1563.1" text-anchor="middle" font-size="24" fill="#6b5258" textLength="64.0" lengthAdjust="spacingAndGlyphs" transform="rotate(-47.0 1783.1 1554.7)">Strait</text><text x="1268.3" y="597.8" text-anchor="middle" font-size="24" fill="#7c7c7c" font-style="italic" textLength="109.0" lengthAdjust="spacingAndGlyphs">Salon Two</text><text x="1341.6" y="763.5" text-anchor="middle" font-size="24" fill="#7c7c7c" font-style="italic" textLength="34.6" lengthAdjust="spacingAndGlyphs">The</text><text x="1341.6" y="786.8" text-anchor="middle" font-size="24" fill="#7c7c7c" font-style="italic" textLength="82.0" lengthAdjust="spacingAndGlyphs">Victoria</text><text x="1716.7" y="551.1" text-anchor="middle" font-size="24" fill="#7c7c7c" font-style="italic" textLength="85.6" lengthAdjust="spacingAndGlyphs">Lillicrap</text><text x="1716.7" y="575.0" text-anchor="middle" font-size="24" fill="#7c7c7c" font-style="italic" textLength="57.7" lengthAdjust="spacingAndGlyphs">Court</text><text x="1461.8" y="903.3" text-anchor="middle" font-size="24" fill="#7c7c7c" font-style="italic" textLength="75.0" lengthAdjust="spacingAndGlyphs">Lincoln</text><text x="1462.6" y="928.9" text-anchor="middle" font-size="24" fill="#7c7c7c" font-style="italic" textLength="133.4" lengthAdjust="spacingAndGlyphs">Crown Court</text><text x="1705.5" y="884.4" text-anchor="middle" font-size="24" fill="#7c7c7c" font-style="italic" textLength="104.0" lengthAdjust="spacingAndGlyphs">Cobb Hall</text><text x="1859.0" y="516.2" text-anchor="middle" font-size="24" fill="#7c7c7c" font-style="italic" textLength="89.4" lengthAdjust="spacingAndGlyphs">Newport</text><text x="1858.3" y="539.9" text-anchor="middle" font-size="24" fill="#7c7c7c" font-style="italic" textLength="47.0" lengthAdjust="spacingAndGlyphs">Arch</text><text x="2015.8" y="540.3" text-anchor="middle" font-size="24" fill="#7c7c7c" font-style="italic" textLength="72.5" lengthAdjust="spacingAndGlyphs">Roman</text><text x="2015.8" y="564.3" text-anchor="middle" font-size="24" fill="#7c7c7c" font-style="italic" textLength="97.0" lengthAdjust="spacingAndGlyphs">Reservoir</text><text x="1838.4" y="797.3" text-anchor="middle" font-size="24" fill="#7c7c7c" font-style="italic" textLength="70.6" lengthAdjust="spacingAndGlyphs">Greggs</text><text x="2227.3" y="768.8" text-anchor="middle" font-size="24" fill="#7c7c7c" font-style="italic" textLength="71.4" lengthAdjust="spacingAndGlyphs">Lincoln</text><text x="2192.8" y="870.2" text-anchor="middle" font-size="24" fill="#7c7c7c" font-style="italic" textLength="99.6" lengthAdjust="spacingAndGlyphs">East Gate</text><text x="2514.8" y="786.8" text-anchor="start" font-size="24" fill="#7c7c7c" font-style="italic" textLength="22.0" lengthAdjust="spacingAndGlyphs">Ec</text><text x="1683.5" y="1135.6" text-anchor="middle" font-size="24" fill="#7c7c7c" font-style="italic" textLength="48.9" lengthAdjust="spacingAndGlyphs">Cask</text><text x="1222.4" y="1457.7" text-anchor="middle" font-size="24" fill="#7c7c7c" font-style="italic" textLength="70.3" lengthAdjust="spacingAndGlyphs">Joiners</text><text x="1222.4" y="1481.2" text-anchor="middle" font-size="24" fill="#7c7c7c" font-style="italic" textLength="50.7" lengthAdjust="spacingAndGlyphs">Arms</text><text x="1988.0" y="1231.1" text-anchor="middle" font-size="24" fill="#7c7c7c" font-style="italic" textLength="80.0" lengthAdjust="spacingAndGlyphs">The Old</text><text x="1988.0" y="1254.7" text-anchor="middle" font-size="24" fill="#7c7c7c" font-style="italic" textLength="68.0" lengthAdjust="spacingAndGlyphs">Palace</text><text x="2187.1" y="1391.2" text-anchor="middle" font-size="24" fill="#7c7c7c" font-style="italic" textLength="105.2" lengthAdjust="spacingAndGlyphs">Greestone</text><text x="2187.1" y="1414.5" text-anchor="middle" font-size="24" fill="#7c7c7c" font-style="italic" textLength="111.6" lengthAdjust="spacingAndGlyphs">Pavillion 2</text><text x="2437.8" y="1294.2" text-anchor="start" font-size="24" fill="#7c7c7c" font-style="italic" textLength="109.0" lengthAdjust="spacingAndGlyphs">Pottergate</text><text x="963.9" y="1647.7" text-anchor="middle" font-size="24" fill="#7c7c7c" font-style="italic" textLength="127.0" lengthAdjust="spacingAndGlyphs">Lincolnshire</text><text x="962.0" y="1671.7" text-anchor="middle" font-size="24" fill="#7c7c7c" font-style="italic" textLength="72.2" lengthAdjust="spacingAndGlyphs">County</text><text x="962.0" y="1695.4" text-anchor="middle" font-size="24" fill="#7c7c7c" font-style="italic" textLength="78.2" lengthAdjust="spacingAndGlyphs">Council</text><text x="1308.5" y="1736.7" text-anchor="middle" font-size="24" fill="#7c7c7c" font-style="italic" textLength="122.1" lengthAdjust="spacingAndGlyphs">Lincoln City</text><text x="1308.5" y="1759.3" text-anchor="middle" font-size="24" fill="#7c7c7c" font-style="italic" textLength="77.0" lengthAdjust="spacingAndGlyphs">Council</text><text x="1562.2" y="1606.0" text-anchor="middle" font-size="24" fill="#7c7c7c" font-style="italic" textLength="58.2" lengthAdjust="spacingAndGlyphs">Tap &amp;</text><text x="1562.2" y="1629.6" text-anchor="middle" font-size="24" fill="#7c7c7c" font-style="italic" textLength="50.7" lengthAdjust="spacingAndGlyphs">Spile</text><text x="1591.5" y="1793.9" text-anchor="middle" font-size="24" fill="#7c7c7c" font-style="italic" textLength="98.5" lengthAdjust="spacingAndGlyphs">supasave</text><text x="1526.8" y="1888.2" text-anchor="middle" font-size="24" fill="#7c7c7c" font-style="italic" textLength="60.0" lengthAdjust="spacingAndGlyphs">Home</text><text x="1133.0" y="1975.4" text-anchor="middle" font-size="24" fill="#7c7c7c" font-style="italic" textLength="32.3" lengthAdjust="spacingAndGlyphs">Co-</text><text x="1134.9" y="1999.8" text-anchor="middle" font-size="24" fill="#7c7c7c" font-style="italic" textLength="98.5" lengthAdjust="spacingAndGlyphs">Operative</text><text x="2000.0" y="1945.3" text-anchor="middle" font-size="24" fill="#7c7c7c" font-style="italic" textLength="74.0" lengthAdjust="spacingAndGlyphs">Lincoln</text><text x="2000.0" y="1968.6" text-anchor="middle" font-size="24" fill="#7c7c7c" font-style="italic" textLength="94.0" lengthAdjust="spacingAndGlyphs">Drill Hall</text><text x="943.5" y="1968.6" text-anchor="end" font-size="24" fill="#7c7c7c" font-style="italic" textLength="84.0" lengthAdjust="spacingAndGlyphs">Holiday</text><text x="919.0" y="1992.3" text-anchor="end" font-size="24" fill="#7c7c7c" font-style="italic" textLength="32.0" lengthAdjust="spacingAndGlyphs">Inn</text><text x="1553.9" y="1004.8" text-anchor="middle" font-size="26" fill="#4a4a4a" textLength="150.3" lengthAdjust="spacingAndGlyphs">Lincoln Castle</text><text x="1553.9" y="1004.8" text-anchor="middle" font-size="26" fill="#4a4a4a" stroke="#4a4a4a" stroke-opacity="1" stroke-width="0.600" textLength="150.3" lengthAdjust="spacingAndGlyphs">Lincoln Castle</text><text x="1617.0" y="1074.8" text-anchor="middle" font-size="25" fill="#555555" textLength="163.5" lengthAdjust="spacingAndGlyphs">Victorian Prison</text><text x="2128.5" y="975.1" text-anchor="middle" font-size="25" fill="#555555" textLength="159.7" lengthAdjust="spacingAndGlyphs">Lincoln Minster</text><text x="2128.5" y="997.6" text-anchor="middle" font-size="25" fill="#555555" textLength="68.8" lengthAdjust="spacingAndGlyphs">School</text><text x="2330.7" y="868.0" text-anchor="start" font-size="25" fill="#555555" textLength="200.0" lengthAdjust="spacingAndGlyphs">St Peter in Eastgate</text><text x="2501.7" y="1156.2" text-anchor="start" font-size="25" fill="#555555" textLength="30.0" lengthAdjust="spacingAndGlyphs">LIn</text><text x="2296.9" y="1480.8" text-anchor="middle" font-size="25" fill="#555555" textLength="184.1" lengthAdjust="spacingAndGlyphs">Greestone Centre</text><text x="2233.0" y="1824.2" text-anchor="middle" font-size="25" fill="#555555" textLength="221.7" lengthAdjust="spacingAndGlyphs">Saint Hugh of Lincoln</text><text x="1352.8" y="1929.8" text-anchor="middle" font-size="25" fill="#555555" textLength="80.4" lengthAdjust="spacingAndGlyphs">Friend's</text><text x="1352.8" y="1952.5" text-anchor="middle" font-size="25" fill="#555555" textLength="156.3" lengthAdjust="spacingAndGlyphs">Meeting House</text><text x="1305.1" y="2018.2" text-anchor="middle" font-size="25" fill="#555555" textLength="156.0" lengthAdjust="spacingAndGlyphs">New life centre</text><text x="1632.0" y="718.4" text-anchor="middle" font-size="25" fill="#2c5a45" textLength="108.0" lengthAdjust="spacingAndGlyphs">Saint Mary</text><text x="1632.0" y="740.1" text-anchor="middle" font-size="25" fill="#2c5a45" textLength="101.5" lengthAdjust="spacingAndGlyphs">Magdalen</text><text x="2109.0" y="1565.3" text-anchor="middle" font-size="26" fill="#2c5a45" textLength="169.1" lengthAdjust="spacingAndGlyphs">Temple Gardens</text></g>
<path d="M1720.0 469.5 L1744.4 459.0 L1812.0 446.6 L1879.7 447.7 L1945.5 461.6 L2013.0 489.0 L2069.5 526.6 L2118.3 577.4 L2154.0 635.6 L2178.5 699.5 L2191.6 767.0 L2189.8 834.8 L2185.2 879.9 L2189.8 910.0 L2197.3 958.9 L2196.5 985.2 L2189.8 1041.5 L2170.2 1139.2 L2186.0 1206.9 L2195.4 1270.8 L2199.2 1323.4 L2199.2 1428.6 L2196.5 1454.0 L2191.6 1499.1 L2176.6 1574.3 L2163.4 1626.9 L2133.4 1685.1 L2077.0 1765.9 L2020.6 1829.8 L1964.3 1882.4 L1904.1 1920.0 L1840.3 1944.4 L1772.6 1956.4 L1720.0 1956.4 L1704.2 1955.7 L1638.4 1941.4 L1576.4 1913.2 L1520.1 1871.1 L1475.0 1824.2 L1435.5 1767.8 L1408.1 1700.1 L1396.8 1634.4 L1399.1 1566.7 L1413.0 1499.1 L1433.6 1454.0 L1441.2 1436.1 L1499.4 1357.2 L1480.6 1300.8 L1463.0 1229.4 L1454.7 1146.8 L1467.5 1060.3 L1489.3 976.9 L1480.6 910.0 L1481.7 876.1 L1486.2 819.8 L1493.8 755.9 L1503.2 707.0 L1516.3 669.4 L1538.9 620.6 L1576.4 568.0 L1623.4 519.9 L1681.7 483.4 Z" fill="#3bb2d0" fill-opacity="0.17" stroke="#5baece" stroke-width="4.400" stroke-linejoin="round"/>
<path d="M1841.4 796.0 L1829.7 900.5 L1832.7 910.0 L1847.8 972.0 L1804.6 1154.3 L1818.5 1218.9 L1839.5 1251.2 L1849.7 1327.1 L1849.7 1428.6 L1843.3 1454.0 L1832.7 1502.9 L1745.6 1607.3" fill="none" stroke="#5baece" stroke-width="4" stroke-linejoin="round" stroke-linecap="round"/>
<path d="M1545.0 634.0 c-5 -7 -11 -12 -11 -18.500 a11 11 0 0 1 22 0 c0 6.500 -6 11.500 -11 18.500 z" fill="#44545c"/>
<path d="M2060.0 707.0 c-5 -7 -11 -12 -11 -18.500 a11 11 0 0 1 22 0 c0 6.500 -6 11.500 -11 18.500 z" fill="#44545c"/>
<path d="M1856.0 964.5 c-5 -7 -11 -12 -11 -18.500 a11 11 0 0 1 22 0 c0 6.500 -6 11.500 -11 18.500 z" fill="#44545c"/>
<path d="M1767.0 1060.0 c-5 -7 -11 -12 -11 -18.500 a11 11 0 0 1 22 0 c0 6.500 -6 11.500 -11 18.500 z" fill="#44545c"/>
<path d="M2107.0 1088.5 c-5 -7 -11 -12 -11 -18.500 a11 11 0 0 1 22 0 c0 6.500 -6 11.500 -11 18.500 z" fill="#44545c"/>
<path d="M1854.0 1120.0 c-5 -7 -11 -12 -11 -18.500 a11 11 0 0 1 22 0 c0 6.500 -6 11.500 -11 18.500 z" fill="#44545c"/>
<path d="M1839.5 1215.0 c-5 -7 -11 -12 -11 -18.500 a11 11 0 0 1 22 0 c0 6.500 -6 11.500 -11 18.500 z" fill="#44545c"/>
<path d="M2077.0 1262.0 c-5 -7 -11 -12 -11 -18.500 a11 11 0 0 1 22 0 c0 6.500 -6 11.500 -11 18.500 z" fill="#44545c"/>
<path d="M2195.0 1316.0 c-5 -7 -11 -12 -11 -18.500 a11 11 0 0 1 22 0 c0 6.500 -6 11.500 -11 18.500 z" fill="#44545c"/>
<path d="M1796.0 1478.0 c-5 -7 -11 -12 -11 -18.500 a11 11 0 0 1 22 0 c0 6.500 -6 11.500 -11 18.500 z" fill="#44545c"/>
<path d="M1880.0 1533.0 c-5 -7 -11 -12 -11 -18.500 a11 11 0 0 1 22 0 c0 6.500 -6 11.500 -11 18.500 z" fill="#44545c"/>
<path d="M1691.0 1650.0 c-5 -7 -11 -12 -11 -18.500 a11 11 0 0 1 22 0 c0 6.500 -6 11.500 -11 18.500 z" fill="#44545c"/>
<path d="M2027.0 1742.6 c-5 -7 -11 -12 -11 -18.500 a11 11 0 0 1 22 0 c0 6.500 -6 11.500 -11 18.500 z" fill="#44545c"/>
<path d="M1712.0 1796.0 c-5 -7 -11 -12 -11 -18.500 a11 11 0 0 1 22 0 c0 6.500 -6 11.500 -11 18.500 z" fill="#44545c"/>
<path d="M1857.0 1806.0 c-5 -7 -11 -12 -11 -18.500 a11 11 0 0 1 22 0 c0 6.500 -6 11.500 -11 18.500 z" fill="#44545c"/>
<path d="M1841.0 1846.0 c-5 -7 -11 -12 -11 -18.500 a11 11 0 0 1 22 0 c0 6.500 -6 11.500 -11 18.500 z" fill="#44545c"/>
<path d="M1679.0 1939.0 c-5 -7 -11 -12 -11 -18.500 a11 11 0 0 1 22 0 c0 6.500 -6 11.500 -11 18.500 z" fill="#44545c"/>
</svg>
<div class="a" style="left:918.500px;top:374.500px;width:67px;height:187px;border-radius:11px;background:rgba(120,110,95,.22)"></div>
<div class="a" style="left:921.500px;top:377.500px;width:61px;height:180.500px;border-radius:8px;background:#fff"></div>
<div class="a" style="left:921.500px;top:437px;width:61px;height:2px;background:#ddd"></div>
<div class="a" style="left:921.500px;top:498px;width:61px;height:2px;background:#ddd"></div>
<svg style="left:939.900px;top:395.900px" width="24" height="24" viewBox="0 0 24 24"><path d="M12 2.800 V21.200 M2.800 12 H21.200" stroke="#333" stroke-width="5.600" stroke-linecap="round" fill="none"/></svg>
<svg style="left:939.300px;top:456.700px" width="24" height="24" viewBox="0 0 24 24"><path d="M3 12 H21" stroke="#333" stroke-width="5.600" stroke-linecap="round" fill="none"/></svg>
<svg style="left:943.900px;top:512.600px" width="16" height="35" viewBox="0 0 16 35"><path d="M8 0 L16 15.100 H0 Z" fill="#333"/><path d="M8 34.600 L16 19.400 H0 Z" fill="#c6c6c6"/></svg>
<div class="a" style="left:918.500px;top:574.800px;width:67px;height:66.400px;border-radius:11px;background:rgba(120,110,95,.22)"></div>
<div class="a" style="left:921.500px;top:578px;width:61px;height:60px;border-radius:8px;background:#fff"></div>
<svg style="left:933.800px;top:589.500px" width="36.400" height="36.600" viewBox="0 0 36 36"><path d="M2.5 0 H10.8 L7.9 2.9 L18 13.05 L28.1 2.9 L25.2 0 H33.5 A2.5 2.5 0 0 1 36 2.5 V10.8 L33.1 7.9 L22.95 18 L33.1 28.1 L36 25.2 V33.5 A2.5 2.5 0 0 1 33.5 36 H25.2 L28.1 33.1 L18 22.95 L7.9 33.1 L10.8 36 H2.5 A2.5 2.5 0 0 1 0 33.5 V25.2 L2.9 28.1 L13.05 18 L2.9 7.9 L0 10.8 V2.5 A2.5 2.5 0 0 1 2.5 0 Z" fill="#000"/></svg>
<svg style="left:915px;top:1973px" width="180" height="42" viewBox="0 0 180 42"><circle cx="22.300" cy="22.800" r="19.800" fill="none" stroke="#000" stroke-opacity=".32" stroke-width="1.600"/><circle cx="22.300" cy="22.800" r="15.800" fill="#000" fill-opacity=".32" stroke="#fff" stroke-opacity=".92" stroke-width="6.500"/><path d="M13 31 C11 22 17 14 26 15 C32 16 33 22 28 27 C24 31 18 32 13 31 Z" fill="#000" fill-opacity=".12"/><path d="M25 16.500 L26.800 20.200 L30.500 22 L26.800 23.800 L25 27.500 L23.200 23.800 L19.500 22 L23.200 20.200 Z" fill="#fff" fill-opacity=".95"/><text x="49" y="31.500" font-family="Liberation Sans, sans-serif" font-weight="700" font-size="33" textLength="120" lengthAdjust="spacingAndGlyphs" fill="#fff" fill-opacity=".92" stroke="#000" stroke-opacity=".38" stroke-width="3.600" paint-order="stroke" stroke-linejoin="round">mapbox</text></svg>
<div class="a" style="left:2532px;top:357px;width:798px;height:1657px;background:#fff"></div>
<div class="a" style="left:2532px;top:357px;width:2px;height:1657px;background:#d9d9d9"></div>
<span style="position:absolute;white-space:pre;line-height:1;top:409.1px;font-size:34.5px;color:#3d3d3d;left:2575.0px;letter-spacing:0.41px;">Date Interval</span>
<div class="a" style="left:3150px;top:388.500px;width:141.500px;height:63px;background:#689dd6;border:1px solid #5d91cb;box-sizing:border-box"></div>
<svg style="left:3178px;top:413.500px" width="16.500" height="16.500" viewBox="0 0 16 16"><path d="M2.200 2.200 L13.800 13.800 M13.800 2.200 L2.200 13.800" stroke="#fff" stroke-width="4" fill="none"/></svg>
<span style="position:absolute;white-space:pre;line-height:1;top:408.2px;font-size:26px;color:#fff;left:3204.3px;letter-spacing:-0.13px;">Clear</span>
<div class="a" style="left:2574px;top:480px;width:718px;height:2px;background:#d4d4d4"></div>
<span style="position:absolute;white-space:pre;line-height:1;top:510.6px;font-size:30px;color:#404040;left:2584.8px;letter-spacing:0.24px;">Type</span>
<span style="position:absolute;white-space:pre;line-height:1;top:510.6px;font-size:30px;color:#404040;left:2934.5px;letter-spacing:1.02px;">Within</span>
<div class="a" style="left:2584px;top:546px;width:340px;height:69px;background:#fff;border:2px solid #dadada;border-radius:7px;box-sizing:border-box"></div><span style="position:absolute;white-space:pre;line-height:1;top:568.8px;font-size:26px;color:#4d6583;left:2610.6px;letter-spacing:0.16px;">Search all dates</span><svg style="left:2882px;top:574.500px" width="16" height="9.500" viewBox="0 0 16 9.500"><path d="M0 0 H16 L8 9.500 Z" fill="#4d6583"/></svg>
<div class="a" style="left:2934px;top:546px;width:340px;height:69px;background:#fff;border:2px solid #dadada;border-radius:7px;box-sizing:border-box"></div><span style="position:absolute;white-space:pre;line-height:1;top:568.8px;font-size:26px;color:#4d6583;left:2960.7px;letter-spacing:0.52px;">Custom date range</span><svg style="left:3232px;top:574.500px" width="16" height="9.500" viewBox="0 0 16 9.500"><path d="M0 0 H16 L8 9.500 Z" fill="#4d6583"/></svg>
<span style="position:absolute;white-space:pre;line-height:1;top:638.0px;font-size:30px;color:#404040;left:2584.8px;letter-spacing:0.62px;">From</span>
<span style="position:absolute;white-space:pre;line-height:1;top:638.0px;font-size:30px;color:#404040;left:2934.5px;letter-spacing:1.16px;">To</span>
<div class="a" style="left:2584px;top:674px;width:340px;height:64px;background:#fff;border:2px solid #e3e3e3;box-sizing:border-box"></div><span style="position:absolute;white-space:pre;line-height:1;top:693.4px;font-size:26px;color:#555;left:2610.6px;letter-spacing:-0.05px;">1500-01-01</span>
<div class="a" style="left:2934px;top:674px;width:340px;height:64px;background:#fff;border:2px solid #e3e3e3;box-sizing:border-box"></div><span style="position:absolute;white-space:pre;line-height:1;top:693.4px;font-size:26px;color:#555;left:2960.7px;letter-spacing:-0.05px;">1600-01-01</span>
<span style="position:absolute;white-space:pre;line-height:1;top:778.2px;font-size:34.5px;color:#3d3d3d;left:2575.0px;letter-spacing:0.17px;">Time Wheel</span>
<span style="position:absolute;white-space:pre;line-height:1;top:839.4px;font-size:24px;color:#888;left:2575.0px;letter-spacing:0.45px;">(Click on a block to set a filter, double-click to zoom in, double-</span>
<span style="position:absolute;white-space:pre;line-height:1;top:873.3px;font-size:24px;color:#888;left:2575.0px;letter-spacing:0.54px;">click center to zoom out)</span>
<div class="a" style="left:2574px;top:908.500px;width:718px;height:2px;background:#d4d4d4"></div>
<span style="position:absolute;white-space:pre;line-height:1;top:922.3px;font-size:28px;color:#27415f;left:2575.0px;font-weight:700;letter-spacing:0.27px;">Millennium (1000 - 2000) - Half-millennium (1500 -</span>
<span style="position:absolute;white-space:pre;line-height:1;top:961.7px;font-size:28px;color:#27415f;left:2575.0px;font-weight:700;letter-spacing:0.02px;">2000) - Century (1500 - 1600) - 861 hits</span>
<svg style="left:0;top:0" width="3330" height="2014" viewBox="0 0 3330 2014"><g stroke="#fff" stroke-width="1.600" stroke-linejoin="round"><circle cx="2933.2" cy="1384.8" r="179.35" fill="#c9d9ea"/><path d="M2735.0 1226.6 A253.6 253.6 0 0 1 2933.2 1131.2 L2933.2 1205.5 A179.3 179.3 0 0 0 2793.0 1272.9 Z" fill="#f0f7ed"/><path d="M2933.2 1131.2 A253.6 253.6 0 0 1 2935.9 1131.2 L2935.1 1205.5 A179.3 179.3 0 0 0 2933.2 1205.5 Z" fill="#e4eef7"/><path d="M2935.9 1131.2 A253.6 253.6 0 0 1 3105.9 1199.0 L3055.3 1253.4 A179.3 179.3 0 0 0 2935.1 1205.5 Z" fill="#fadfcc"/><path d="M3105.9 1199.0 A253.6 253.6 0 1 1 2735.0 1226.6 L2793.0 1272.9 A179.3 179.3 0 1 0 3055.3 1253.4 Z" fill="#57a05f"/><path d="M2690.4 1191.0 A310.6 310.6 0 0 1 2931.0 1074.2 L2931.4 1131.2 A253.6 253.6 0 0 0 2735.0 1226.6 Z" fill="#d5d3e6"/><path d="M2931.0 1074.2 A310.6 310.6 0 0 1 2936.5 1074.2 L2935.9 1131.2 A253.6 253.6 0 0 0 2931.4 1131.2 Z" fill="#eeeef6"/><path d="M2936.5 1074.2 A310.6 310.6 0 0 1 3125.3 1140.7 L3090.1 1185.5 A253.6 253.6 0 0 0 2935.9 1131.2 Z" fill="#fce8d9"/><path d="M3125.3 1140.7 A310.6 310.6 0 0 1 3144.7 1157.2 L3105.9 1199.0 A253.6 253.6 0 0 0 3090.1 1185.5 Z" fill="#fdf0e5"/><path d="M3144.7 1157.2 A310.6 310.6 0 0 1 3232.4 1301.3 L3177.5 1316.6 A253.6 253.6 0 0 0 3105.9 1199.0 Z" fill="#dcecd9"/><path d="M3232.4 1301.3 A310.6 310.6 0 1 1 2690.4 1191.0 L2735.0 1226.6 A253.6 253.6 0 1 0 3177.5 1316.6 Z" fill="#acd7a2"/><path d="M2652.9 1161.0 A358.7 358.7 0 0 1 2926.9 1026.2 L2927.8 1074.2 A310.6 310.6 0 0 0 2690.4 1191.0 Z" fill="#d5d3e6"/><path d="M2926.9 1026.2 A358.7 358.7 0 0 1 2931.3 1026.1 L2931.6 1074.2 A310.6 310.6 0 0 0 2927.8 1074.2 Z" fill="#e6e5f0"/><path d="M2931.3 1026.1 A358.7 358.7 0 0 1 2938.2 1026.1 L2937.5 1074.2 A310.6 310.6 0 0 0 2931.6 1074.2 Z" fill="#f7f7fb"/><path d="M2938.2 1026.1 A358.7 358.7 0 0 1 3001.0 1032.6 L2991.9 1079.8 A310.6 310.6 0 0 0 2937.5 1074.2 Z" fill="#fce8d9"/><path d="M3001.0 1032.6 A358.7 358.7 0 0 1 3044.6 1043.9 L3029.7 1089.5 A310.6 310.6 0 0 0 2991.9 1079.8 Z" fill="#fce8d9"/><path d="M3044.6 1043.9 A358.7 358.7 0 0 1 3079.1 1057.1 L3059.6 1101.0 A310.6 310.6 0 0 0 3029.7 1089.5 Z" fill="#fce8d9"/><path d="M3079.1 1057.1 A358.7 358.7 0 0 1 3097.2 1065.8 L3075.2 1108.5 A310.6 310.6 0 0 0 3059.6 1101.0 Z" fill="#fce8d9"/><path d="M3097.2 1065.8 A358.7 358.7 0 0 1 3154.0 1102.1 L3124.5 1140.0 A310.6 310.6 0 0 0 3075.2 1108.5 Z" fill="#fce8d9"/><path d="M3154.0 1102.1 A358.7 358.7 0 0 1 3157.0 1104.5 L3127.0 1142.0 A310.6 310.6 0 0 0 3124.5 1140.0 Z" fill="#fff"/><path d="M3157.0 1104.5 A358.7 358.7 0 0 1 3166.2 1112.0 L3134.9 1148.6 A310.6 310.6 0 0 0 3127.0 1142.0 Z" fill="#fdf0e5"/><path d="M3166.2 1112.0 A358.7 358.7 0 0 1 3176.5 1121.2 L3143.9 1156.5 A310.6 310.6 0 0 0 3134.9 1148.6 Z" fill="#fdf0e5"/><path d="M3176.5 1121.2 A358.7 358.7 0 0 1 3210.0 1156.6 L3172.9 1187.2 A310.6 310.6 0 0 0 3143.9 1156.5 Z" fill="#dcecd9"/><path d="M3210.0 1156.6 A358.7 358.7 0 0 1 3242.3 1202.7 L3200.9 1227.1 A310.6 310.6 0 0 0 3172.9 1187.2 Z" fill="#dcecd9"/><path d="M3242.3 1202.7 A358.7 358.7 0 0 1 3259.3 1235.5 L3215.6 1255.5 A310.6 310.6 0 0 0 3200.9 1227.1 Z" fill="#dcecd9"/><path d="M3259.3 1235.5 A358.7 358.7 0 0 1 3270.9 1263.9 L3225.7 1280.1 A310.6 310.6 0 0 0 3215.6 1255.5 Z" fill="#dcecd9"/><path d="M3270.9 1263.9 A358.7 358.7 0 0 1 3279.0 1289.5 L3232.7 1302.3 A310.6 310.6 0 0 0 3225.7 1280.1 Z" fill="#dcecd9"/><path d="M3279.0 1289.5 A358.7 358.7 0 0 1 3291.7 1372.9 L3243.7 1374.5 A310.6 310.6 0 0 0 3232.7 1302.3 Z" fill="#acd7a2"/><path d="M3291.7 1372.9 A358.7 358.7 0 0 1 3291.4 1404.2 L3243.4 1401.6 A310.6 310.6 0 0 0 3243.7 1374.5 Z" fill="#e8f3e4"/><path d="M3291.4 1404.2 A358.7 358.7 0 0 1 3278.2 1483.1 L3232.0 1469.9 A310.6 310.6 0 0 0 3243.4 1401.6 Z" fill="#e8f3e4"/><path d="M3278.2 1483.1 A358.7 358.7 0 0 1 2915.7 1743.1 L2918.0 1695.1 A310.6 310.6 0 0 0 3232.0 1469.9 Z" fill="#e8f3e4"/><path d="M2915.7 1743.1 A358.7 358.7 0 0 1 2652.9 1161.0 L2690.4 1191.0 A310.6 310.6 0 0 0 2918.0 1695.1 Z" fill="#e8f3e4"/></g></svg>
</div></body></html>
